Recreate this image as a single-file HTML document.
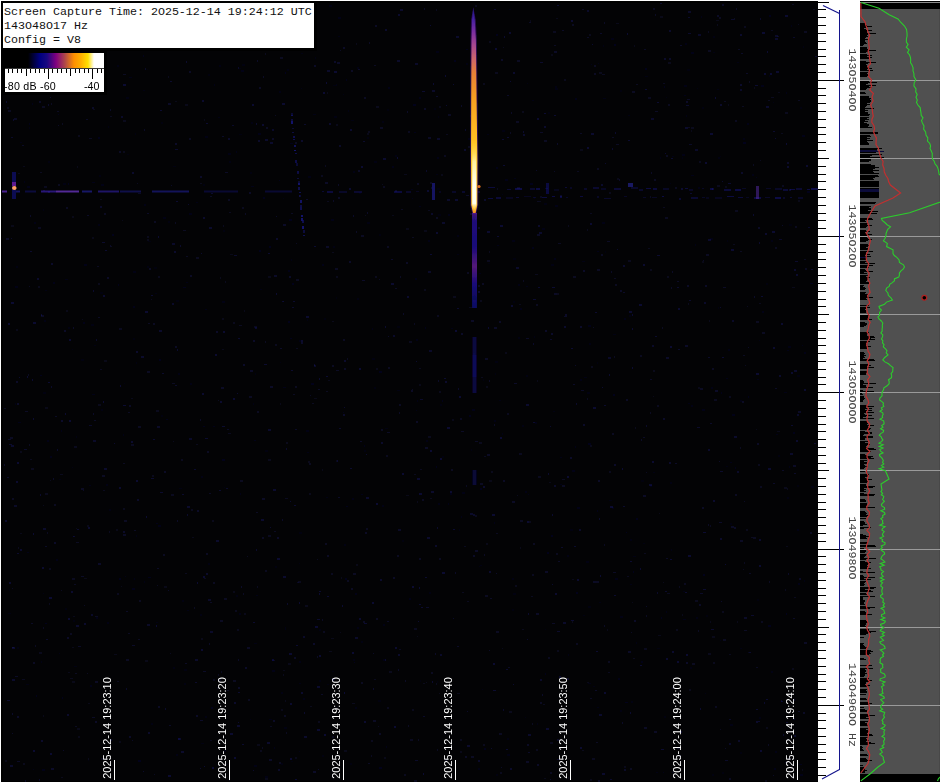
<!DOCTYPE html>
<html><head><meta charset="utf-8"><style>
html,body{margin:0;padding:0;}
body{width:941px;height:783px;position:relative;overflow:hidden;background:#fff;}
.a{position:absolute;left:0;top:0;}
.wf{position:absolute;left:1px;top:1px;width:817px;height:781px;background:#000;}
.wfi{position:absolute;left:3px;top:3px;width:815px;height:778px;background:#030305;}
.box{position:absolute;left:3px;top:3px;width:311px;height:45px;background:#fff;}
.mono{font-family:"Liberation Mono",monospace;font-size:11.67px;color:#111;position:absolute;left:4px;white-space:pre;line-height:14px;}
.cbg{position:absolute;left:5px;top:53px;width:99px;height:15px;
 background:linear-gradient(to right,#000 0px,#000 23px,#000080 35px,#180880 42px,#800080 51px,#b04848 60px,#ff9000 69px,#ffb000 76px,#ffe000 83px,#ffffff 89px,#fff 99px);}
.cbw{position:absolute;left:5px;top:68px;width:99px;height:24px;background:#fff;}
.cbl{position:absolute;top:79.7px;font-family:"Liberation Sans",sans-serif;font-size:10.67px;color:#000;white-space:pre;line-height:12px;}
.rl{position:absolute;left:852px;width:0;height:0;}
.rl span{position:absolute;left:0;top:0;transform:translate(-50%,-50%) rotate(90deg);font-family:"Liberation Mono",monospace;font-size:11.67px;line-height:12px;color:#444;white-space:pre;}
.tl{position:absolute;top:728.3px;width:0;height:0;}
.tl span{position:absolute;left:0;top:0;transform:translate(-50%,-50%) rotate(-90deg);font-family:"Liberation Sans",sans-serif;font-size:10.95px;line-height:12px;color:#fff;white-space:pre;}
.tk{position:absolute;top:760px;width:1px;height:20px;background:#fff;}
</style></head><body>
<div class="wf"></div>
<div class="wfi"></div>
<svg class="a" width="941" height="783">
 <defs>
  <linearGradient id="st" x1="0" y1="8" x2="0" y2="216" gradientUnits="userSpaceOnUse">
   <stop offset="0" stop-color="#1a1a80"/>
   <stop offset="0.05" stop-color="#4020a0"/>
   <stop offset="0.12" stop-color="#8030a0"/>
   <stop offset="0.18" stop-color="#a84890"/>
   <stop offset="0.25" stop-color="#d06868"/>
   <stop offset="0.31" stop-color="#e88038"/>
   <stop offset="0.44" stop-color="#f8a020"/>
   <stop offset="0.59" stop-color="#ffb820"/>
   <stop offset="0.68" stop-color="#ffc828"/>
   <stop offset="0.96" stop-color="#ffc030"/>
   <stop offset="0.985" stop-color="#f09020"/>
   <stop offset="1" stop-color="#6020a0"/>
  </linearGradient>
  <linearGradient id="core" x1="0" y1="140" x2="0" y2="212" gradientUnits="userSpaceOnUse">
   <stop offset="0" stop-color="#ffd030" stop-opacity="0"/>
   <stop offset="0.3" stop-color="#fff0a0"/>
   <stop offset="0.6" stop-color="#fffff0"/>
   <stop offset="0.88" stop-color="#fffff0"/>
   <stop offset="1" stop-color="#ffd040" stop-opacity="0"/>
  </linearGradient>
  <linearGradient id="st2" x1="0" y1="213" x2="0" y2="308" gradientUnits="userSpaceOnUse">
   <stop offset="0" stop-color="#6020a0"/>
   <stop offset="0.08" stop-color="#2a14a0"/>
   <stop offset="0.35" stop-color="#2010a0"/>
   <stop offset="0.56" stop-color="#7020a0"/>
   <stop offset="0.75" stop-color="#2010a0"/>
   <stop offset="1" stop-color="#0c0c60"/>
  </linearGradient>
  <filter id="nb" x="0" y="0" width="100%" height="100%"><feGaussianBlur stdDeviation="0.6"/></filter>
  <filter id="bl" x="-50%" y="-5%" width="200%" height="110%"><feGaussianBlur stdDeviation="0.45"/></filter>
 </defs>
 <g fill="#1a1a70" filter="url(#nb)"><rect x="542" y="228" width="3" height="2" opacity="0.15"/><rect x="495" y="361" width="3" height="2" opacity="0.11"/><rect x="239" y="339" width="1" height="1" opacity="0.10"/><rect x="446" y="134" width="2" height="1" opacity="0.22"/><rect x="225" y="281" width="1" height="2" opacity="0.22"/><rect x="537" y="118" width="2" height="2" opacity="0.38"/><rect x="761" y="197" width="2" height="1" opacity="0.14"/><rect x="73" y="620" width="2" height="2" opacity="0.11"/><rect x="50" y="456" width="2" height="2" opacity="0.17"/><rect x="574" y="546" width="2" height="1" opacity="0.37"/><rect x="572" y="24" width="2" height="2" opacity="0.26"/><rect x="295" y="429" width="2" height="1" opacity="0.31"/><rect x="751" y="615" width="3" height="1" opacity="0.36"/><rect x="746" y="529" width="2" height="2" opacity="0.21"/><rect x="577" y="171" width="2" height="1" opacity="0.25"/><rect x="51" y="386" width="1" height="2" opacity="0.34"/><rect x="626" y="532" width="1" height="1" opacity="0.20"/><rect x="485" y="595" width="3" height="2" opacity="0.27"/><rect x="317" y="619" width="3" height="1" opacity="0.39"/><rect x="502" y="433" width="1" height="2" opacity="0.15"/><rect x="554" y="45" width="2" height="1" opacity="0.28"/><rect x="292" y="283" width="2" height="2" opacity="0.20"/><rect x="15" y="286" width="3" height="2" opacity="0.16"/><rect x="144" y="129" width="1" height="2" opacity="0.32"/><rect x="157" y="426" width="3" height="2" opacity="0.33"/><rect x="201" y="638" width="2" height="2" opacity="0.18"/><rect x="364" y="450" width="2" height="2" opacity="0.11"/><rect x="650" y="485" width="2" height="2" opacity="0.16"/><rect x="708" y="653" width="3" height="2" opacity="0.22"/><rect x="770" y="73" width="2" height="2" opacity="0.42"/><rect x="748" y="652" width="1" height="1" opacity="0.18"/><rect x="791" y="425" width="2" height="1" opacity="0.38"/><rect x="423" y="773" width="1" height="2" opacity="0.42"/><rect x="14" y="118" width="3" height="2" opacity="0.30"/><rect x="93" y="440" width="3" height="2" opacity="0.34"/><rect x="484" y="456" width="2" height="1" opacity="0.25"/><rect x="734" y="527" width="2" height="2" opacity="0.31"/><rect x="663" y="772" width="1" height="1" opacity="0.17"/><rect x="536" y="170" width="1" height="1" opacity="0.34"/><rect x="274" y="747" width="1" height="2" opacity="0.16"/><rect x="156" y="622" width="2" height="1" opacity="0.12"/><rect x="31" y="623" width="2" height="1" opacity="0.30"/><rect x="604" y="692" width="2" height="2" opacity="0.39"/><rect x="605" y="251" width="1" height="2" opacity="0.10"/><rect x="559" y="676" width="2" height="2" opacity="0.38"/><rect x="536" y="304" width="2" height="2" opacity="0.26"/><rect x="789" y="189" width="2" height="2" opacity="0.39"/><rect x="551" y="54" width="2" height="2" opacity="0.18"/><rect x="238" y="659" width="1" height="2" opacity="0.31"/><rect x="513" y="301" width="2" height="2" opacity="0.10"/><rect x="336" y="460" width="1" height="2" opacity="0.18"/><rect x="98" y="283" width="2" height="2" opacity="0.21"/><rect x="123" y="463" width="2" height="1" opacity="0.26"/><rect x="409" y="598" width="2" height="2" opacity="0.16"/><rect x="591" y="64" width="1" height="1" opacity="0.16"/><rect x="383" y="659" width="3" height="2" opacity="0.15"/><rect x="299" y="683" width="2" height="1" opacity="0.15"/><rect x="26" y="684" width="3" height="1" opacity="0.13"/><rect x="41" y="661" width="1" height="2" opacity="0.14"/><rect x="236" y="151" width="1" height="2" opacity="0.16"/><rect x="523" y="134" width="2" height="2" opacity="0.35"/><rect x="336" y="297" width="1" height="2" opacity="0.10"/><rect x="253" y="770" width="1" height="1" opacity="0.36"/><rect x="762" y="332" width="3" height="2" opacity="0.27"/><rect x="766" y="106" width="3" height="2" opacity="0.38"/><rect x="754" y="87" width="1" height="2" opacity="0.19"/><rect x="241" y="586" width="1" height="2" opacity="0.33"/><rect x="525" y="491" width="2" height="2" opacity="0.14"/><rect x="799" y="578" width="2" height="2" opacity="0.29"/><rect x="781" y="701" width="2" height="1" opacity="0.37"/><rect x="536" y="749" width="2" height="2" opacity="0.23"/><rect x="461" y="105" width="1" height="2" opacity="0.30"/><rect x="230" y="254" width="3" height="1" opacity="0.19"/><rect x="545" y="673" width="1" height="2" opacity="0.16"/><rect x="414" y="474" width="2" height="1" opacity="0.22"/><rect x="496" y="573" width="1" height="1" opacity="0.32"/><rect x="512" y="501" width="3" height="2" opacity="0.30"/><rect x="56" y="559" width="2" height="2" opacity="0.16"/><rect x="379" y="371" width="3" height="2" opacity="0.20"/><rect x="326" y="246" width="3" height="2" opacity="0.32"/><rect x="126" y="611" width="2" height="1" opacity="0.30"/><rect x="339" y="145" width="2" height="2" opacity="0.32"/><rect x="294" y="505" width="2" height="1" opacity="0.40"/><rect x="116" y="529" width="2" height="2" opacity="0.18"/><rect x="373" y="653" width="1" height="1" opacity="0.31"/><rect x="24" y="181" width="1" height="2" opacity="0.15"/><rect x="55" y="416" width="2" height="1" opacity="0.29"/><rect x="672" y="271" width="1" height="2" opacity="0.31"/><rect x="595" y="690" width="2" height="1" opacity="0.32"/><rect x="795" y="226" width="2" height="2" opacity="0.24"/><rect x="175" y="346" width="2" height="2" opacity="0.29"/><rect x="417" y="400" width="1" height="2" opacity="0.14"/><rect x="496" y="533" width="2" height="1" opacity="0.25"/><rect x="414" y="628" width="3" height="2" opacity="0.25"/><rect x="326" y="376" width="2" height="1" opacity="0.42"/><rect x="41" y="314" width="1" height="2" opacity="0.41"/><rect x="364" y="445" width="1" height="2" opacity="0.17"/><rect x="123" y="508" width="2" height="2" opacity="0.22"/><rect x="743" y="569" width="1" height="1" opacity="0.25"/><rect x="110" y="109" width="1" height="2" opacity="0.32"/><rect x="177" y="349" width="1" height="2" opacity="0.40"/><rect x="275" y="115" width="1" height="1" opacity="0.28"/><rect x="795" y="261" width="3" height="1" opacity="0.37"/><rect x="743" y="142" width="3" height="2" opacity="0.20"/><rect x="342" y="605" width="1" height="2" opacity="0.40"/><rect x="773" y="483" width="2" height="1" opacity="0.33"/><rect x="737" y="621" width="1" height="2" opacity="0.18"/><rect x="688" y="403" width="2" height="1" opacity="0.15"/><rect x="423" y="683" width="2" height="1" opacity="0.21"/><rect x="344" y="544" width="2" height="2" opacity="0.12"/><rect x="417" y="183" width="2" height="2" opacity="0.26"/><rect x="526" y="286" width="2" height="1" opacity="0.16"/><rect x="794" y="473" width="2" height="1" opacity="0.32"/><rect x="489" y="480" width="3" height="2" opacity="0.18"/><rect x="798" y="711" width="2" height="1" opacity="0.31"/><rect x="289" y="276" width="2" height="2" opacity="0.32"/><rect x="688" y="303" width="1" height="2" opacity="0.22"/><rect x="465" y="756" width="2" height="2" opacity="0.29"/><rect x="520" y="547" width="1" height="2" opacity="0.18"/><rect x="619" y="179" width="1" height="2" opacity="0.32"/><rect x="768" y="625" width="3" height="2" opacity="0.20"/><rect x="392" y="166" width="2" height="2" opacity="0.16"/><rect x="646" y="472" width="1" height="1" opacity="0.25"/><rect x="489" y="251" width="1" height="2" opacity="0.23"/><rect x="290" y="758" width="2" height="2" opacity="0.40"/><rect x="708" y="449" width="2" height="2" opacity="0.36"/><rect x="76" y="436" width="1" height="2" opacity="0.13"/><rect x="336" y="124" width="2" height="2" opacity="0.19"/><rect x="242" y="64" width="3" height="2" opacity="0.11"/><rect x="111" y="246" width="1" height="1" opacity="0.27"/><rect x="711" y="629" width="3" height="1" opacity="0.36"/><rect x="608" y="672" width="2" height="1" opacity="0.24"/><rect x="381" y="442" width="2" height="2" opacity="0.35"/><rect x="272" y="660" width="3" height="1" opacity="0.26"/><rect x="310" y="706" width="2" height="1" opacity="0.21"/><rect x="529" y="521" width="2" height="2" opacity="0.21"/><rect x="534" y="336" width="1" height="2" opacity="0.12"/><rect x="381" y="429" width="2" height="2" opacity="0.27"/><rect x="475" y="5" width="2" height="2" opacity="0.22"/><rect x="132" y="645" width="3" height="1" opacity="0.32"/><rect x="711" y="387" width="2" height="2" opacity="0.14"/><rect x="137" y="183" width="1" height="1" opacity="0.25"/><rect x="107" y="277" width="2" height="2" opacity="0.31"/><rect x="588" y="606" width="3" height="2" opacity="0.11"/><rect x="634" y="620" width="2" height="2" opacity="0.32"/><rect x="128" y="412" width="2" height="1" opacity="0.28"/><rect x="730" y="523" width="2" height="2" opacity="0.11"/><rect x="260" y="289" width="2" height="1" opacity="0.12"/><rect x="560" y="484" width="2" height="1" opacity="0.16"/><rect x="280" y="348" width="2" height="1" opacity="0.33"/><rect x="645" y="68" width="2" height="2" opacity="0.20"/><rect x="627" y="576" width="2" height="1" opacity="0.24"/><rect x="291" y="370" width="2" height="1" opacity="0.39"/><rect x="491" y="748" width="1" height="1" opacity="0.37"/><rect x="270" y="726" width="2" height="1" opacity="0.25"/><rect x="737" y="62" width="2" height="1" opacity="0.13"/><rect x="340" y="632" width="1" height="1" opacity="0.19"/><rect x="744" y="630" width="3" height="1" opacity="0.29"/><rect x="669" y="58" width="2" height="2" opacity="0.33"/><rect x="279" y="180" width="1" height="1" opacity="0.20"/><rect x="223" y="230" width="2" height="2" opacity="0.11"/><rect x="551" y="264" width="3" height="2" opacity="0.13"/><rect x="509" y="9" width="2" height="1" opacity="0.14"/><rect x="27" y="376" width="1" height="2" opacity="0.38"/><rect x="296" y="348" width="2" height="1" opacity="0.23"/><rect x="329" y="651" width="3" height="1" opacity="0.21"/><rect x="613" y="394" width="2" height="2" opacity="0.20"/><rect x="781" y="700" width="1" height="2" opacity="0.27"/><rect x="457" y="693" width="3" height="1" opacity="0.22"/><rect x="773" y="131" width="2" height="1" opacity="0.39"/><rect x="620" y="90" width="2" height="2" opacity="0.10"/><rect x="185" y="573" width="2" height="1" opacity="0.23"/><rect x="378" y="726" width="1" height="1" opacity="0.24"/><rect x="205" y="136" width="3" height="2" opacity="0.14"/><rect x="365" y="215" width="1" height="1" opacity="0.21"/><rect x="336" y="370" width="3" height="1" opacity="0.29"/><rect x="766" y="727" width="2" height="2" opacity="0.18"/><rect x="376" y="503" width="2" height="2" opacity="0.42"/><rect x="77" y="166" width="1" height="2" opacity="0.18"/><rect x="200" y="614" width="2" height="2" opacity="0.13"/><rect x="788" y="758" width="3" height="1" opacity="0.34"/><rect x="626" y="399" width="2" height="2" opacity="0.29"/><rect x="572" y="579" width="2" height="1" opacity="0.18"/><rect x="775" y="138" width="1" height="1" opacity="0.40"/><rect x="686" y="662" width="2" height="2" opacity="0.32"/><rect x="720" y="729" width="1" height="1" opacity="0.23"/><rect x="419" y="587" width="1" height="2" opacity="0.42"/><rect x="366" y="528" width="2" height="2" opacity="0.24"/><rect x="51" y="768" width="3" height="2" opacity="0.33"/><rect x="332" y="736" width="2" height="2" opacity="0.24"/><rect x="670" y="559" width="2" height="1" opacity="0.42"/><rect x="749" y="652" width="2" height="1" opacity="0.41"/><rect x="669" y="462" width="2" height="2" opacity="0.36"/><rect x="547" y="552" width="2" height="2" opacity="0.20"/><rect x="145" y="68" width="1" height="2" opacity="0.31"/><rect x="47" y="532" width="1" height="2" opacity="0.25"/><rect x="397" y="60" width="3" height="2" opacity="0.35"/><rect x="491" y="471" width="2" height="2" opacity="0.22"/><rect x="54" y="504" width="2" height="2" opacity="0.26"/><rect x="397" y="157" width="1" height="2" opacity="0.42"/><rect x="378" y="700" width="3" height="2" opacity="0.10"/><rect x="268" y="276" width="3" height="2" opacity="0.19"/><rect x="564" y="79" width="2" height="2" opacity="0.23"/><rect x="104" y="468" width="3" height="2" opacity="0.36"/><rect x="279" y="762" width="2" height="2" opacity="0.27"/><rect x="248" y="699" width="2" height="2" opacity="0.26"/><rect x="428" y="210" width="2" height="1" opacity="0.23"/><rect x="729" y="743" width="2" height="2" opacity="0.34"/><rect x="48" y="104" width="1" height="2" opacity="0.35"/><rect x="131" y="444" width="3" height="2" opacity="0.25"/><rect x="314" y="246" width="2" height="1" opacity="0.41"/><rect x="315" y="57" width="1" height="2" opacity="0.13"/><rect x="141" y="356" width="3" height="2" opacity="0.37"/><rect x="796" y="440" width="2" height="2" opacity="0.39"/><rect x="209" y="643" width="1" height="2" opacity="0.29"/><rect x="773" y="102" width="1" height="1" opacity="0.12"/><rect x="723" y="639" width="3" height="2" opacity="0.26"/><rect x="367" y="212" width="1" height="2" opacity="0.32"/><rect x="98" y="563" width="3" height="2" opacity="0.33"/><rect x="686" y="101" width="2" height="2" opacity="0.32"/><rect x="241" y="70" width="3" height="2" opacity="0.17"/><rect x="749" y="81" width="1" height="2" opacity="0.26"/><rect x="387" y="707" width="2" height="2" opacity="0.22"/><rect x="812" y="214" width="1" height="1" opacity="0.11"/><rect x="691" y="127" width="3" height="2" opacity="0.22"/><rect x="775" y="247" width="2" height="2" opacity="0.24"/><rect x="379" y="279" width="1" height="1" opacity="0.32"/><rect x="192" y="537" width="2" height="1" opacity="0.19"/><rect x="412" y="389" width="1" height="1" opacity="0.27"/><rect x="45" y="290" width="2" height="1" opacity="0.15"/><rect x="557" y="5" width="2" height="1" opacity="0.38"/><rect x="41" y="740" width="2" height="2" opacity="0.37"/><rect x="186" y="282" width="2" height="1" opacity="0.14"/><rect x="84" y="578" width="3" height="1" opacity="0.18"/><rect x="322" y="619" width="1" height="2" opacity="0.28"/><rect x="439" y="558" width="2" height="2" opacity="0.26"/><rect x="798" y="100" width="2" height="1" opacity="0.28"/><rect x="76" y="542" width="3" height="1" opacity="0.27"/><rect x="45" y="493" width="3" height="2" opacity="0.22"/><rect x="802" y="135" width="3" height="2" opacity="0.17"/><rect x="6" y="101" width="1" height="2" opacity="0.36"/><rect x="495" y="373" width="1" height="2" opacity="0.10"/><rect x="211" y="707" width="2" height="2" opacity="0.20"/><rect x="120" y="385" width="1" height="2" opacity="0.38"/><rect x="557" y="631" width="3" height="1" opacity="0.37"/><rect x="676" y="629" width="2" height="2" opacity="0.21"/><rect x="49" y="597" width="3" height="2" opacity="0.42"/><rect x="238" y="338" width="2" height="1" opacity="0.38"/><rect x="753" y="214" width="1" height="2" opacity="0.38"/><rect x="466" y="485" width="1" height="2" opacity="0.25"/><rect x="68" y="327" width="2" height="2" opacity="0.13"/><rect x="310" y="395" width="1" height="1" opacity="0.28"/><rect x="334" y="116" width="3" height="2" opacity="0.12"/><rect x="348" y="110" width="1" height="2" opacity="0.12"/><rect x="365" y="532" width="2" height="2" opacity="0.29"/><rect x="528" y="494" width="1" height="1" opacity="0.16"/><rect x="353" y="659" width="2" height="2" opacity="0.12"/><rect x="132" y="172" width="2" height="2" opacity="0.37"/><rect x="419" y="368" width="2" height="1" opacity="0.23"/><rect x="78" y="646" width="3" height="1" opacity="0.31"/><rect x="288" y="270" width="2" height="2" opacity="0.16"/><rect x="797" y="414" width="2" height="2" opacity="0.34"/><rect x="213" y="679" width="2" height="2" opacity="0.21"/><rect x="778" y="455" width="2" height="2" opacity="0.11"/><rect x="599" y="602" width="2" height="1" opacity="0.12"/><rect x="158" y="525" width="3" height="2" opacity="0.16"/><rect x="722" y="4" width="2" height="2" opacity="0.29"/><rect x="200" y="183" width="2" height="1" opacity="0.22"/><rect x="466" y="195" width="3" height="1" opacity="0.33"/><rect x="301" y="340" width="2" height="2" opacity="0.38"/><rect x="669" y="30" width="2" height="2" opacity="0.35"/><rect x="487" y="231" width="3" height="2" opacity="0.38"/><rect x="772" y="231" width="3" height="2" opacity="0.40"/><rect x="386" y="746" width="1" height="2" opacity="0.17"/><rect x="229" y="161" width="2" height="2" opacity="0.13"/><rect x="428" y="137" width="3" height="2" opacity="0.30"/><rect x="243" y="364" width="2" height="2" opacity="0.33"/><rect x="478" y="760" width="2" height="2" opacity="0.34"/><rect x="172" y="243" width="3" height="2" opacity="0.34"/><rect x="587" y="147" width="2" height="2" opacity="0.26"/><rect x="811" y="486" width="3" height="2" opacity="0.13"/><rect x="17" y="462" width="2" height="2" opacity="0.42"/><rect x="398" y="654" width="2" height="2" opacity="0.37"/><rect x="221" y="671" width="1" height="2" opacity="0.25"/><rect x="593" y="581" width="3" height="2" opacity="0.30"/><rect x="128" y="633" width="2" height="1" opacity="0.28"/><rect x="183" y="230" width="3" height="1" opacity="0.28"/><rect x="165" y="708" width="1" height="2" opacity="0.35"/><rect x="792" y="668" width="2" height="2" opacity="0.19"/><rect x="641" y="480" width="3" height="2" opacity="0.10"/><rect x="461" y="333" width="2" height="2" opacity="0.32"/><rect x="280" y="403" width="1" height="2" opacity="0.18"/><rect x="283" y="387" width="3" height="1" opacity="0.17"/><rect x="190" y="275" width="2" height="2" opacity="0.30"/><rect x="387" y="621" width="2" height="1" opacity="0.30"/><rect x="556" y="553" width="2" height="2" opacity="0.24"/><rect x="804" y="389" width="2" height="2" opacity="0.38"/><rect x="218" y="679" width="3" height="2" opacity="0.23"/><rect x="472" y="409" width="3" height="2" opacity="0.17"/><rect x="127" y="154" width="2" height="1" opacity="0.10"/><rect x="46" y="639" width="2" height="1" opacity="0.35"/><rect x="755" y="85" width="3" height="1" opacity="0.41"/><rect x="268" y="535" width="3" height="2" opacity="0.25"/><rect x="670" y="482" width="2" height="2" opacity="0.13"/><rect x="31" y="468" width="3" height="2" opacity="0.22"/><rect x="588" y="325" width="3" height="2" opacity="0.17"/><rect x="132" y="588" width="3" height="2" opacity="0.17"/><rect x="50" y="480" width="1" height="1" opacity="0.21"/><rect x="326" y="82" width="1" height="2" opacity="0.40"/><rect x="217" y="687" width="1" height="2" opacity="0.18"/><rect x="395" y="155" width="2" height="2" opacity="0.13"/><rect x="527" y="83" width="1" height="1" opacity="0.13"/><rect x="444" y="155" width="2" height="2" opacity="0.24"/><rect x="123" y="531" width="2" height="2" opacity="0.33"/><rect x="164" y="586" width="3" height="2" opacity="0.18"/><rect x="636" y="84" width="2" height="1" opacity="0.26"/><rect x="153" y="439" width="2" height="1" opacity="0.40"/><rect x="355" y="637" width="3" height="2" opacity="0.35"/><rect x="403" y="313" width="1" height="2" opacity="0.31"/><rect x="751" y="537" width="2" height="1" opacity="0.27"/><rect x="292" y="307" width="2" height="1" opacity="0.35"/><rect x="247" y="647" width="3" height="2" opacity="0.29"/><rect x="719" y="17" width="2" height="2" opacity="0.27"/><rect x="583" y="424" width="2" height="2" opacity="0.33"/><rect x="402" y="473" width="2" height="2" opacity="0.40"/><rect x="393" y="577" width="2" height="2" opacity="0.30"/><rect x="99" y="175" width="2" height="2" opacity="0.11"/><rect x="740" y="752" width="2" height="2" opacity="0.10"/><rect x="599" y="518" width="1" height="2" opacity="0.35"/><rect x="58" y="184" width="2" height="2" opacity="0.26"/><rect x="653" y="472" width="2" height="1" opacity="0.12"/><rect x="156" y="410" width="3" height="2" opacity="0.23"/><rect x="519" y="453" width="3" height="2" opacity="0.25"/><rect x="677" y="287" width="2" height="1" opacity="0.36"/><rect x="630" y="539" width="2" height="2" opacity="0.13"/><rect x="540" y="196" width="2" height="2" opacity="0.24"/><rect x="290" y="703" width="2" height="2" opacity="0.39"/><rect x="8" y="110" width="3" height="2" opacity="0.26"/><rect x="57" y="449" width="1" height="2" opacity="0.36"/><rect x="592" y="758" width="3" height="2" opacity="0.24"/><rect x="532" y="247" width="2" height="2" opacity="0.17"/><rect x="655" y="336" width="2" height="1" opacity="0.36"/><rect x="533" y="422" width="2" height="1" opacity="0.39"/><rect x="793" y="618" width="2" height="1" opacity="0.31"/><rect x="129" y="736" width="2" height="2" opacity="0.32"/><rect x="672" y="651" width="2" height="2" opacity="0.39"/><rect x="617" y="178" width="2" height="2" opacity="0.19"/><rect x="544" y="113" width="2" height="1" opacity="0.41"/><rect x="492" y="514" width="3" height="2" opacity="0.40"/><rect x="590" y="445" width="2" height="2" opacity="0.19"/><rect x="451" y="469" width="2" height="2" opacity="0.26"/><rect x="811" y="269" width="2" height="1" opacity="0.38"/><rect x="424" y="108" width="2" height="2" opacity="0.29"/><rect x="451" y="328" width="2" height="1" opacity="0.14"/><rect x="25" y="411" width="3" height="1" opacity="0.29"/><rect x="538" y="225" width="2" height="2" opacity="0.37"/><rect x="201" y="743" width="3" height="1" opacity="0.13"/><rect x="92" y="237" width="2" height="2" opacity="0.18"/><rect x="249" y="192" width="2" height="2" opacity="0.31"/><rect x="239" y="613" width="2" height="2" opacity="0.16"/><rect x="753" y="164" width="1" height="2" opacity="0.26"/><rect x="222" y="301" width="3" height="2" opacity="0.15"/><rect x="375" y="25" width="2" height="2" opacity="0.30"/><rect x="9" y="589" width="1" height="2" opacity="0.10"/><rect x="592" y="44" width="1" height="1" opacity="0.40"/><rect x="262" y="537" width="2" height="2" opacity="0.28"/><rect x="609" y="192" width="2" height="2" opacity="0.21"/><rect x="200" y="419" width="1" height="2" opacity="0.30"/><rect x="636" y="642" width="1" height="2" opacity="0.12"/><rect x="147" y="239" width="2" height="2" opacity="0.19"/><rect x="429" y="592" width="2" height="2" opacity="0.13"/><rect x="594" y="65" width="2" height="2" opacity="0.26"/><rect x="244" y="613" width="2" height="2" opacity="0.19"/><rect x="562" y="30" width="2" height="1" opacity="0.31"/><rect x="432" y="681" width="1" height="2" opacity="0.40"/><rect x="765" y="780" width="2" height="2" opacity="0.19"/><rect x="123" y="84" width="3" height="2" opacity="0.42"/><rect x="436" y="9" width="1" height="2" opacity="0.25"/><rect x="235" y="610" width="2" height="2" opacity="0.23"/><rect x="33" y="750" width="2" height="2" opacity="0.42"/><rect x="43" y="627" width="1" height="2" opacity="0.24"/><rect x="499" y="321" width="2" height="2" opacity="0.31"/><rect x="172" y="383" width="3" height="1" opacity="0.27"/><rect x="48" y="191" width="2" height="2" opacity="0.41"/><rect x="628" y="260" width="3" height="2" opacity="0.23"/><rect x="616" y="23" width="3" height="1" opacity="0.19"/><rect x="455" y="572" width="1" height="2" opacity="0.30"/><rect x="373" y="688" width="1" height="2" opacity="0.35"/><rect x="731" y="249" width="3" height="2" opacity="0.41"/><rect x="688" y="555" width="3" height="2" opacity="0.40"/><rect x="388" y="87" width="2" height="2" opacity="0.17"/><rect x="374" y="387" width="2" height="2" opacity="0.11"/><rect x="527" y="521" width="2" height="2" opacity="0.40"/><rect x="347" y="358" width="1" height="2" opacity="0.27"/><rect x="786" y="546" width="2" height="1" opacity="0.19"/><rect x="73" y="536" width="1" height="1" opacity="0.16"/><rect x="557" y="143" width="1" height="2" opacity="0.33"/><rect x="462" y="492" width="3" height="2" opacity="0.14"/><rect x="561" y="547" width="2" height="1" opacity="0.35"/><rect x="704" y="302" width="2" height="2" opacity="0.34"/><rect x="11" y="137" width="2" height="1" opacity="0.34"/><rect x="308" y="176" width="3" height="2" opacity="0.15"/><rect x="374" y="65" width="2" height="1" opacity="0.28"/><rect x="72" y="578" width="3" height="2" opacity="0.25"/><rect x="8" y="323" width="2" height="2" opacity="0.41"/><rect x="275" y="344" width="2" height="2" opacity="0.24"/><rect x="405" y="680" width="1" height="2" opacity="0.29"/><rect x="506" y="749" width="2" height="1" opacity="0.42"/><rect x="580" y="747" width="2" height="2" opacity="0.39"/><rect x="238" y="67" width="1" height="2" opacity="0.34"/><rect x="682" y="614" width="1" height="2" opacity="0.19"/><rect x="379" y="234" width="2" height="2" opacity="0.10"/><rect x="369" y="42" width="1" height="2" opacity="0.29"/><rect x="494" y="424" width="1" height="2" opacity="0.28"/><rect x="428" y="240" width="2" height="2" opacity="0.15"/><rect x="395" y="288" width="2" height="1" opacity="0.29"/><rect x="213" y="582" width="2" height="2" opacity="0.26"/><rect x="309" y="493" width="2" height="2" opacity="0.21"/><rect x="219" y="490" width="2" height="1" opacity="0.39"/><rect x="550" y="742" width="3" height="2" opacity="0.22"/><rect x="807" y="191" width="3" height="2" opacity="0.20"/><rect x="10" y="765" width="3" height="2" opacity="0.35"/><rect x="371" y="755" width="1" height="2" opacity="0.25"/><rect x="529" y="22" width="2" height="1" opacity="0.32"/><rect x="73" y="616" width="2" height="1" opacity="0.19"/><rect x="178" y="373" width="2" height="2" opacity="0.15"/><rect x="69" y="339" width="2" height="2" opacity="0.41"/><rect x="43" y="593" width="1" height="1" opacity="0.13"/><rect x="752" y="174" width="2" height="2" opacity="0.15"/><rect x="643" y="437" width="2" height="1" opacity="0.29"/><rect x="668" y="62" width="3" height="2" opacity="0.21"/><rect x="760" y="486" width="2" height="2" opacity="0.25"/><rect x="15" y="403" width="1" height="2" opacity="0.14"/><rect x="416" y="421" width="2" height="2" opacity="0.29"/><rect x="256" y="549" width="1" height="2" opacity="0.37"/><rect x="367" y="137" width="2" height="2" opacity="0.11"/><rect x="526" y="338" width="3" height="1" opacity="0.30"/><rect x="151" y="478" width="3" height="1" opacity="0.39"/><rect x="209" y="493" width="2" height="1" opacity="0.29"/><rect x="567" y="678" width="2" height="2" opacity="0.32"/><rect x="459" y="396" width="2" height="2" opacity="0.40"/><rect x="328" y="380" width="2" height="1" opacity="0.19"/><rect x="382" y="505" width="2" height="2" opacity="0.15"/><rect x="787" y="488" width="1" height="2" opacity="0.22"/><rect x="296" y="243" width="1" height="1" opacity="0.25"/><rect x="7" y="477" width="2" height="1" opacity="0.33"/><rect x="383" y="158" width="3" height="2" opacity="0.39"/><rect x="279" y="91" width="2" height="2" opacity="0.14"/><rect x="658" y="635" width="3" height="1" opacity="0.19"/><rect x="28" y="374" width="1" height="2" opacity="0.27"/><rect x="100" y="292" width="3" height="2" opacity="0.10"/><rect x="389" y="671" width="3" height="2" opacity="0.22"/><rect x="431" y="187" width="1" height="2" opacity="0.28"/><rect x="183" y="287" width="3" height="1" opacity="0.20"/><rect x="147" y="624" width="3" height="2" opacity="0.33"/><rect x="284" y="727" width="3" height="2" opacity="0.13"/><rect x="503" y="480" width="2" height="2" opacity="0.30"/><rect x="216" y="540" width="3" height="2" opacity="0.36"/><rect x="545" y="629" width="1" height="1" opacity="0.11"/><rect x="309" y="463" width="2" height="2" opacity="0.26"/><rect x="725" y="564" width="1" height="1" opacity="0.41"/><rect x="240" y="480" width="3" height="2" opacity="0.26"/><rect x="251" y="122" width="2" height="2" opacity="0.13"/><rect x="512" y="578" width="2" height="2" opacity="0.13"/><rect x="144" y="204" width="2" height="2" opacity="0.15"/><rect x="73" y="536" width="2" height="1" opacity="0.38"/><rect x="30" y="215" width="1" height="2" opacity="0.31"/><rect x="74" y="584" width="2" height="1" opacity="0.26"/><rect x="767" y="51" width="1" height="2" opacity="0.40"/><rect x="697" y="427" width="3" height="1" opacity="0.35"/><rect x="461" y="516" width="1" height="2" opacity="0.16"/><rect x="479" y="566" width="1" height="1" opacity="0.12"/><rect x="151" y="723" width="2" height="2" opacity="0.12"/><rect x="527" y="744" width="2" height="2" opacity="0.30"/><rect x="299" y="661" width="2" height="2" opacity="0.14"/><rect x="358" y="69" width="2" height="1" opacity="0.32"/><rect x="724" y="101" width="2" height="1" opacity="0.27"/><rect x="49" y="603" width="1" height="2" opacity="0.23"/><rect x="65" y="413" width="1" height="2" opacity="0.39"/><rect x="429" y="350" width="3" height="2" opacity="0.34"/><rect x="411" y="189" width="2" height="1" opacity="0.17"/><rect x="159" y="330" width="3" height="2" opacity="0.36"/><rect x="386" y="455" width="2" height="2" opacity="0.24"/><rect x="208" y="563" width="2" height="2" opacity="0.13"/><rect x="282" y="301" width="2" height="1" opacity="0.37"/><rect x="555" y="593" width="2" height="2" opacity="0.39"/><rect x="9" y="444" width="3" height="1" opacity="0.37"/><rect x="701" y="16" width="1" height="2" opacity="0.16"/><rect x="268" y="253" width="2" height="1" opacity="0.38"/><rect x="174" y="251" width="2" height="2" opacity="0.37"/><rect x="94" y="345" width="2" height="1" opacity="0.13"/><rect x="105" y="250" width="2" height="1" opacity="0.41"/><rect x="787" y="497" width="2" height="2" opacity="0.12"/><rect x="445" y="381" width="2" height="2" opacity="0.36"/><rect x="200" y="768" width="1" height="1" opacity="0.39"/><rect x="537" y="764" width="2" height="2" opacity="0.31"/><rect x="810" y="532" width="2" height="2" opacity="0.27"/><rect x="399" y="412" width="1" height="2" opacity="0.30"/><rect x="205" y="716" width="2" height="2" opacity="0.12"/><rect x="329" y="5" width="3" height="2" opacity="0.14"/><rect x="794" y="597" width="2" height="1" opacity="0.23"/><rect x="784" y="487" width="3" height="2" opacity="0.21"/><rect x="652" y="345" width="2" height="2" opacity="0.34"/><rect x="67" y="714" width="2" height="2" opacity="0.36"/><rect x="720" y="104" width="2" height="2" opacity="0.35"/><rect x="588" y="443" width="3" height="2" opacity="0.20"/><rect x="666" y="611" width="1" height="2" opacity="0.14"/><rect x="256" y="123" width="1" height="2" opacity="0.35"/><rect x="582" y="261" width="3" height="1" opacity="0.14"/><rect x="357" y="298" width="2" height="2" opacity="0.13"/><rect x="407" y="111" width="1" height="2" opacity="0.31"/><rect x="570" y="457" width="2" height="2" opacity="0.33"/><rect x="602" y="74" width="3" height="1" opacity="0.26"/><rect x="88" y="703" width="2" height="1" opacity="0.18"/><rect x="69" y="420" width="2" height="2" opacity="0.40"/><rect x="518" y="337" width="2" height="2" opacity="0.12"/><rect x="562" y="479" width="3" height="1" opacity="0.26"/><rect x="336" y="707" width="1" height="2" opacity="0.17"/><rect x="648" y="248" width="2" height="1" opacity="0.24"/><rect x="243" y="593" width="1" height="2" opacity="0.28"/><rect x="583" y="270" width="2" height="2" opacity="0.33"/><rect x="430" y="182" width="2" height="2" opacity="0.22"/><rect x="610" y="506" width="3" height="2" opacity="0.41"/><rect x="740" y="648" width="2" height="1" opacity="0.13"/><rect x="740" y="540" width="3" height="2" opacity="0.29"/><rect x="713" y="662" width="2" height="2" opacity="0.22"/><rect x="794" y="735" width="2" height="2" opacity="0.37"/><rect x="725" y="748" width="1" height="1" opacity="0.29"/><rect x="766" y="283" width="2" height="2" opacity="0.10"/><rect x="170" y="81" width="2" height="1" opacity="0.39"/><rect x="383" y="624" width="2" height="2" opacity="0.15"/><rect x="712" y="188" width="2" height="2" opacity="0.41"/><rect x="18" y="547" width="1" height="2" opacity="0.22"/><rect x="229" y="779" width="1" height="2" opacity="0.27"/><rect x="306" y="199" width="2" height="1" opacity="0.37"/><rect x="270" y="386" width="3" height="2" opacity="0.31"/><rect x="605" y="163" width="1" height="1" opacity="0.36"/><rect x="657" y="648" width="3" height="1" opacity="0.11"/><rect x="598" y="63" width="1" height="1" opacity="0.14"/><rect x="774" y="768" width="2" height="2" opacity="0.16"/><rect x="717" y="15" width="2" height="2" opacity="0.31"/><rect x="786" y="722" width="2" height="1" opacity="0.33"/><rect x="764" y="702" width="1" height="2" opacity="0.34"/><rect x="802" y="345" width="1" height="1" opacity="0.17"/><rect x="532" y="574" width="2" height="2" opacity="0.25"/><rect x="344" y="692" width="1" height="2" opacity="0.40"/><rect x="354" y="662" width="1" height="1" opacity="0.20"/><rect x="250" y="172" width="2" height="2" opacity="0.11"/><rect x="563" y="622" width="3" height="2" opacity="0.35"/><rect x="602" y="773" width="3" height="2" opacity="0.36"/><rect x="671" y="549" width="1" height="2" opacity="0.15"/><rect x="27" y="552" width="2" height="1" opacity="0.16"/><rect x="667" y="276" width="2" height="2" opacity="0.22"/><rect x="779" y="375" width="2" height="2" opacity="0.37"/><rect x="771" y="97" width="3" height="1" opacity="0.24"/><rect x="338" y="184" width="1" height="2" opacity="0.30"/><rect x="502" y="648" width="1" height="1" opacity="0.19"/><rect x="554" y="51" width="3" height="2" opacity="0.31"/><rect x="734" y="436" width="3" height="2" opacity="0.36"/><rect x="280" y="362" width="1" height="1" opacity="0.11"/><rect x="133" y="271" width="3" height="2" opacity="0.14"/><rect x="507" y="95" width="2" height="1" opacity="0.32"/><rect x="471" y="320" width="3" height="2" opacity="0.31"/><rect x="81" y="488" width="3" height="2" opacity="0.28"/><rect x="564" y="316" width="3" height="1" opacity="0.32"/><rect x="160" y="110" width="2" height="1" opacity="0.40"/><rect x="317" y="686" width="3" height="2" opacity="0.39"/><rect x="133" y="306" width="2" height="2" opacity="0.17"/><rect x="442" y="456" width="2" height="2" opacity="0.11"/><rect x="460" y="751" width="2" height="2" opacity="0.19"/><rect x="725" y="186" width="2" height="2" opacity="0.19"/><rect x="372" y="358" width="3" height="2" opacity="0.11"/><rect x="629" y="315" width="2" height="2" opacity="0.13"/><rect x="277" y="558" width="3" height="2" opacity="0.40"/><rect x="412" y="198" width="1" height="1" opacity="0.17"/><rect x="440" y="654" width="2" height="2" opacity="0.34"/><rect x="438" y="503" width="2" height="2" opacity="0.14"/><rect x="485" y="358" width="3" height="2" opacity="0.29"/><rect x="218" y="674" width="1" height="2" opacity="0.25"/><rect x="265" y="450" width="3" height="2" opacity="0.11"/><rect x="450" y="491" width="2" height="2" opacity="0.39"/><rect x="186" y="61" width="1" height="2" opacity="0.36"/><rect x="499" y="400" width="2" height="1" opacity="0.12"/><rect x="269" y="246" width="2" height="2" opacity="0.20"/><rect x="467" y="272" width="2" height="2" opacity="0.26"/><rect x="455" y="199" width="3" height="2" opacity="0.41"/><rect x="437" y="315" width="2" height="2" opacity="0.25"/><rect x="317" y="559" width="1" height="1" opacity="0.27"/><rect x="593" y="327" width="1" height="1" opacity="0.28"/><rect x="651" y="118" width="3" height="2" opacity="0.34"/><rect x="437" y="138" width="3" height="2" opacity="0.35"/><rect x="504" y="36" width="1" height="2" opacity="0.39"/><rect x="185" y="104" width="3" height="2" opacity="0.19"/><rect x="68" y="618" width="2" height="2" opacity="0.41"/><rect x="147" y="371" width="3" height="2" opacity="0.28"/><rect x="412" y="237" width="2" height="1" opacity="0.26"/><rect x="70" y="633" width="2" height="2" opacity="0.26"/><rect x="384" y="757" width="2" height="2" opacity="0.18"/><rect x="518" y="284" width="2" height="2" opacity="0.14"/><rect x="748" y="347" width="1" height="1" opacity="0.31"/><rect x="247" y="556" width="1" height="1" opacity="0.27"/><rect x="267" y="742" width="3" height="2" opacity="0.37"/><rect x="27" y="186" width="3" height="2" opacity="0.17"/><rect x="290" y="143" width="3" height="1" opacity="0.20"/><rect x="388" y="367" width="2" height="2" opacity="0.27"/><rect x="471" y="449" width="1" height="2" opacity="0.13"/><rect x="528" y="734" width="3" height="2" opacity="0.36"/><rect x="743" y="138" width="2" height="2" opacity="0.12"/><rect x="815" y="56" width="2" height="1" opacity="0.41"/><rect x="483" y="379" width="1" height="2" opacity="0.11"/><rect x="222" y="459" width="3" height="2" opacity="0.20"/><rect x="312" y="403" width="2" height="1" opacity="0.26"/><rect x="700" y="593" width="3" height="1" opacity="0.33"/><rect x="422" y="91" width="3" height="1" opacity="0.39"/><rect x="194" y="607" width="1" height="2" opacity="0.26"/><rect x="249" y="396" width="3" height="2" opacity="0.28"/><rect x="355" y="593" width="2" height="2" opacity="0.16"/><rect x="196" y="257" width="3" height="2" opacity="0.26"/><rect x="624" y="766" width="2" height="2" opacity="0.19"/><rect x="424" y="8" width="1" height="2" opacity="0.29"/><rect x="480" y="300" width="2" height="2" opacity="0.21"/><rect x="495" y="48" width="2" height="2" opacity="0.41"/><rect x="59" y="479" width="2" height="1" opacity="0.13"/><rect x="703" y="574" width="2" height="2" opacity="0.20"/><rect x="735" y="494" width="2" height="2" opacity="0.28"/><rect x="769" y="15" width="2" height="2" opacity="0.20"/><rect x="210" y="602" width="2" height="1" opacity="0.29"/><rect x="12" y="647" width="2" height="1" opacity="0.33"/><rect x="741" y="172" width="2" height="2" opacity="0.33"/><rect x="208" y="599" width="3" height="2" opacity="0.33"/><rect x="608" y="661" width="2" height="2" opacity="0.26"/><rect x="84" y="605" width="1" height="1" opacity="0.27"/><rect x="350" y="468" width="2" height="1" opacity="0.39"/><rect x="395" y="647" width="2" height="2" opacity="0.38"/><rect x="447" y="427" width="3" height="2" opacity="0.40"/><rect x="460" y="418" width="2" height="2" opacity="0.25"/><rect x="222" y="349" width="2" height="1" opacity="0.18"/><rect x="552" y="623" width="3" height="1" opacity="0.29"/><rect x="245" y="667" width="2" height="2" opacity="0.33"/><rect x="250" y="719" width="1" height="1" opacity="0.12"/><rect x="720" y="538" width="2" height="2" opacity="0.35"/><rect x="419" y="97" width="2" height="2" opacity="0.17"/><rect x="61" y="430" width="1" height="2" opacity="0.17"/><rect x="60" y="474" width="3" height="1" opacity="0.23"/><rect x="790" y="453" width="3" height="2" opacity="0.35"/><rect x="598" y="780" width="2" height="2" opacity="0.31"/><rect x="630" y="561" width="2" height="1" opacity="0.40"/><rect x="90" y="685" width="2" height="2" opacity="0.17"/><rect x="597" y="510" width="1" height="2" opacity="0.17"/><rect x="657" y="255" width="3" height="1" opacity="0.41"/><rect x="804" y="580" width="1" height="2" opacity="0.13"/><rect x="494" y="420" width="2" height="2" opacity="0.14"/><rect x="110" y="739" width="2" height="2" opacity="0.33"/><rect x="103" y="295" width="2" height="2" opacity="0.38"/><rect x="480" y="488" width="2" height="2" opacity="0.20"/><rect x="797" y="375" width="3" height="2" opacity="0.11"/><rect x="510" y="132" width="1" height="2" opacity="0.28"/><rect x="484" y="199" width="2" height="2" opacity="0.35"/><rect x="258" y="133" width="3" height="2" opacity="0.17"/><rect x="126" y="659" width="3" height="2" opacity="0.28"/><rect x="612" y="433" width="2" height="2" opacity="0.27"/><rect x="712" y="636" width="3" height="2" opacity="0.19"/><rect x="720" y="471" width="3" height="1" opacity="0.36"/><rect x="803" y="46" width="1" height="2" opacity="0.13"/><rect x="677" y="281" width="2" height="1" opacity="0.30"/><rect x="109" y="531" width="1" height="2" opacity="0.25"/><rect x="313" y="643" width="2" height="2" opacity="0.33"/><rect x="699" y="161" width="2" height="2" opacity="0.24"/><rect x="663" y="418" width="2" height="2" opacity="0.33"/><rect x="533" y="299" width="3" height="1" opacity="0.41"/><rect x="500" y="772" width="2" height="2" opacity="0.23"/><rect x="722" y="611" width="2" height="2" opacity="0.23"/><rect x="604" y="544" width="1" height="2" opacity="0.25"/><rect x="101" y="409" width="2" height="2" opacity="0.13"/><rect x="601" y="254" width="2" height="2" opacity="0.28"/><rect x="473" y="514" width="2" height="2" opacity="0.35"/><rect x="791" y="25" width="1" height="2" opacity="0.15"/><rect x="363" y="141" width="2" height="1" opacity="0.36"/><rect x="759" y="717" width="2" height="2" opacity="0.12"/><rect x="387" y="432" width="3" height="1" opacity="0.29"/><rect x="53" y="282" width="2" height="2" opacity="0.16"/><rect x="148" y="732" width="2" height="2" opacity="0.35"/><rect x="688" y="17" width="2" height="1" opacity="0.36"/><rect x="319" y="680" width="2" height="2" opacity="0.11"/><rect x="537" y="201" width="2" height="1" opacity="0.26"/><rect x="614" y="44" width="2" height="2" opacity="0.20"/><rect x="632" y="602" width="1" height="1" opacity="0.18"/><rect x="797" y="485" width="2" height="2" opacity="0.10"/><rect x="439" y="106" width="2" height="2" opacity="0.19"/><rect x="379" y="733" width="2" height="2" opacity="0.29"/><rect x="705" y="285" width="2" height="2" opacity="0.31"/><rect x="233" y="398" width="2" height="2" opacity="0.40"/><rect x="604" y="625" width="1" height="2" opacity="0.28"/><rect x="319" y="655" width="2" height="2" opacity="0.41"/><rect x="415" y="278" width="2" height="2" opacity="0.16"/><rect x="439" y="693" width="1" height="1" opacity="0.21"/><rect x="244" y="310" width="1" height="2" opacity="0.19"/><rect x="488" y="263" width="2" height="1" opacity="0.11"/><rect x="554" y="293" width="3" height="2" opacity="0.30"/><rect x="654" y="179" width="2" height="2" opacity="0.28"/><rect x="615" y="132" width="1" height="2" opacity="0.37"/><rect x="8" y="439" width="3" height="1" opacity="0.32"/><rect x="35" y="645" width="1" height="2" opacity="0.27"/><rect x="147" y="236" width="2" height="2" opacity="0.22"/><rect x="176" y="201" width="2" height="1" opacity="0.41"/><rect x="58" y="114" width="1" height="1" opacity="0.20"/><rect x="580" y="149" width="3" height="2" opacity="0.18"/><rect x="62" y="123" width="1" height="2" opacity="0.26"/><rect x="757" y="443" width="2" height="2" opacity="0.30"/><rect x="411" y="390" width="2" height="2" opacity="0.30"/><rect x="326" y="497" width="2" height="1" opacity="0.15"/><rect x="285" y="72" width="1" height="2" opacity="0.20"/><rect x="182" y="494" width="2" height="1" opacity="0.36"/><rect x="220" y="620" width="3" height="2" opacity="0.28"/><rect x="558" y="561" width="2" height="1" opacity="0.31"/><rect x="138" y="193" width="3" height="1" opacity="0.32"/><rect x="762" y="311" width="2" height="2" opacity="0.16"/><rect x="537" y="380" width="1" height="2" opacity="0.18"/><rect x="89" y="485" width="2" height="1" opacity="0.16"/><rect x="119" y="578" width="2" height="2" opacity="0.20"/><rect x="227" y="429" width="2" height="1" opacity="0.34"/><rect x="327" y="201" width="2" height="1" opacity="0.22"/><rect x="332" y="321" width="2" height="1" opacity="0.21"/><rect x="88" y="760" width="1" height="1" opacity="0.10"/><rect x="430" y="450" width="2" height="2" opacity="0.42"/><rect x="446" y="105" width="1" height="1" opacity="0.38"/><rect x="759" y="340" width="1" height="1" opacity="0.12"/><rect x="677" y="661" width="2" height="2" opacity="0.40"/><rect x="664" y="86" width="1" height="2" opacity="0.20"/><rect x="173" y="166" width="3" height="1" opacity="0.11"/><rect x="787" y="166" width="2" height="2" opacity="0.39"/><rect x="458" y="388" width="1" height="2" opacity="0.33"/><rect x="552" y="287" width="3" height="1" opacity="0.42"/><rect x="380" y="579" width="2" height="2" opacity="0.36"/><rect x="632" y="367" width="1" height="2" opacity="0.40"/><rect x="700" y="388" width="3" height="2" opacity="0.28"/><rect x="534" y="197" width="1" height="2" opacity="0.16"/><rect x="430" y="498" width="2" height="1" opacity="0.21"/><rect x="313" y="771" width="3" height="2" opacity="0.32"/><rect x="89" y="138" width="3" height="1" opacity="0.27"/><rect x="146" y="516" width="1" height="2" opacity="0.41"/><rect x="513" y="72" width="2" height="2" opacity="0.37"/><rect x="787" y="162" width="2" height="2" opacity="0.33"/><rect x="50" y="753" width="2" height="2" opacity="0.40"/><rect x="587" y="398" width="1" height="2" opacity="0.24"/><rect x="23" y="166" width="2" height="1" opacity="0.19"/><rect x="78" y="736" width="2" height="2" opacity="0.18"/><rect x="748" y="396" width="1" height="2" opacity="0.20"/><rect x="265" y="778" width="3" height="2" opacity="0.18"/><rect x="119" y="328" width="3" height="2" opacity="0.24"/><rect x="388" y="336" width="1" height="1" opacity="0.35"/><rect x="245" y="213" width="1" height="2" opacity="0.28"/><rect x="59" y="653" width="1" height="1" opacity="0.16"/><rect x="430" y="254" width="2" height="1" opacity="0.42"/><rect x="175" y="143" width="2" height="2" opacity="0.33"/><rect x="177" y="520" width="1" height="2" opacity="0.31"/><rect x="237" y="629" width="2" height="2" opacity="0.22"/><rect x="646" y="425" width="1" height="2" opacity="0.33"/><rect x="265" y="776" width="3" height="2" opacity="0.14"/><rect x="587" y="10" width="2" height="2" opacity="0.34"/><rect x="575" y="365" width="1" height="1" opacity="0.33"/><rect x="702" y="261" width="2" height="2" opacity="0.18"/><rect x="802" y="769" width="1" height="2" opacity="0.18"/><rect x="67" y="637" width="2" height="2" opacity="0.32"/><rect x="136" y="362" width="1" height="2" opacity="0.11"/><rect x="264" y="364" width="3" height="1" opacity="0.39"/><rect x="17" y="403" width="2" height="2" opacity="0.31"/><rect x="618" y="678" width="2" height="2" opacity="0.17"/><rect x="54" y="542" width="2" height="2" opacity="0.32"/><rect x="137" y="499" width="2" height="2" opacity="0.33"/><rect x="689" y="144" width="3" height="1" opacity="0.32"/><rect x="505" y="179" width="3" height="2" opacity="0.17"/><rect x="577" y="507" width="3" height="2" opacity="0.17"/><rect x="496" y="34" width="2" height="2" opacity="0.20"/><rect x="610" y="779" width="2" height="1" opacity="0.36"/><rect x="209" y="227" width="3" height="2" opacity="0.37"/><rect x="448" y="503" width="1" height="2" opacity="0.16"/><rect x="382" y="184" width="1" height="1" opacity="0.22"/><rect x="683" y="619" width="3" height="1" opacity="0.16"/><rect x="718" y="307" width="1" height="2" opacity="0.11"/><rect x="10" y="437" width="3" height="2" opacity="0.28"/><rect x="686" y="654" width="2" height="2" opacity="0.41"/><rect x="376" y="368" width="2" height="2" opacity="0.18"/><rect x="154" y="221" width="2" height="2" opacity="0.27"/><rect x="134" y="578" width="1" height="2" opacity="0.15"/><rect x="96" y="339" width="1" height="2" opacity="0.35"/><rect x="38" y="227" width="3" height="2" opacity="0.25"/><rect x="575" y="446" width="1" height="2" opacity="0.16"/><rect x="660" y="157" width="1" height="2" opacity="0.14"/><rect x="528" y="752" width="2" height="1" opacity="0.33"/><rect x="406" y="228" width="3" height="2" opacity="0.18"/><rect x="200" y="720" width="3" height="1" opacity="0.33"/><rect x="401" y="209" width="2" height="1" opacity="0.26"/><rect x="253" y="403" width="1" height="2" opacity="0.12"/><rect x="93" y="290" width="1" height="2" opacity="0.38"/><rect x="728" y="349" width="2" height="2" opacity="0.14"/><rect x="663" y="582" width="1" height="1" opacity="0.21"/><rect x="144" y="581" width="1" height="2" opacity="0.13"/><rect x="768" y="100" width="2" height="1" opacity="0.27"/><rect x="352" y="703" width="3" height="1" opacity="0.22"/><rect x="261" y="519" width="3" height="2" opacity="0.39"/><rect x="305" y="605" width="3" height="2" opacity="0.21"/><rect x="653" y="396" width="1" height="1" opacity="0.18"/><rect x="259" y="250" width="2" height="2" opacity="0.20"/><rect x="254" y="440" width="2" height="1" opacity="0.20"/><rect x="576" y="592" width="2" height="2" opacity="0.20"/><rect x="15" y="676" width="3" height="1" opacity="0.31"/><rect x="12" y="733" width="1" height="1" opacity="0.32"/><rect x="295" y="142" width="2" height="2" opacity="0.27"/><rect x="441" y="174" width="2" height="2" opacity="0.18"/><rect x="250" y="370" width="3" height="2" opacity="0.31"/><rect x="112" y="234" width="2" height="2" opacity="0.20"/><rect x="340" y="50" width="1" height="1" opacity="0.28"/><rect x="203" y="184" width="2" height="2" opacity="0.11"/><rect x="107" y="622" width="2" height="2" opacity="0.14"/><rect x="604" y="22" width="1" height="2" opacity="0.28"/><rect x="291" y="259" width="1" height="2" opacity="0.15"/><rect x="346" y="79" width="1" height="2" opacity="0.20"/><rect x="288" y="321" width="2" height="2" opacity="0.20"/><rect x="475" y="515" width="2" height="2" opacity="0.23"/><rect x="408" y="725" width="1" height="2" opacity="0.28"/><rect x="747" y="306" width="1" height="1" opacity="0.25"/><rect x="158" y="276" width="2" height="2" opacity="0.22"/><rect x="260" y="750" width="2" height="2" opacity="0.22"/><rect x="295" y="779" width="2" height="1" opacity="0.42"/><rect x="334" y="71" width="3" height="2" opacity="0.40"/><rect x="456" y="36" width="3" height="2" opacity="0.36"/><rect x="373" y="720" width="3" height="2" opacity="0.29"/><rect x="607" y="629" width="1" height="2" opacity="0.19"/><rect x="5" y="520" width="2" height="2" opacity="0.37"/><rect x="332" y="679" width="2" height="2" opacity="0.36"/><rect x="771" y="30" width="2" height="1" opacity="0.24"/><rect x="442" y="572" width="3" height="2" opacity="0.41"/><rect x="275" y="566" width="2" height="2" opacity="0.11"/><rect x="159" y="359" width="2" height="2" opacity="0.20"/><rect x="282" y="519" width="1" height="2" opacity="0.33"/><rect x="415" y="63" width="3" height="2" opacity="0.34"/><rect x="361" y="682" width="2" height="2" opacity="0.26"/><rect x="343" y="412" width="1" height="1" opacity="0.20"/><rect x="778" y="92" width="2" height="1" opacity="0.18"/><rect x="398" y="669" width="1" height="2" opacity="0.31"/><rect x="204" y="766" width="1" height="1" opacity="0.41"/><rect x="530" y="183" width="3" height="2" opacity="0.20"/><rect x="632" y="314" width="1" height="2" opacity="0.38"/><rect x="272" y="138" width="2" height="2" opacity="0.29"/><rect x="364" y="97" width="2" height="2" opacity="0.28"/><rect x="196" y="444" width="2" height="1" opacity="0.21"/><rect x="45" y="407" width="3" height="2" opacity="0.18"/><rect x="419" y="384" width="2" height="2" opacity="0.18"/><rect x="426" y="682" width="1" height="1" opacity="0.21"/><rect x="740" y="34" width="2" height="2" opacity="0.36"/><rect x="448" y="214" width="2" height="2" opacity="0.17"/><rect x="655" y="14" width="1" height="2" opacity="0.28"/><rect x="281" y="709" width="2" height="2" opacity="0.19"/><rect x="708" y="50" width="3" height="2" opacity="0.26"/><rect x="239" y="134" width="3" height="1" opacity="0.11"/><rect x="11" y="225" width="3" height="2" opacity="0.18"/><rect x="580" y="326" width="2" height="2" opacity="0.33"/><rect x="705" y="162" width="2" height="2" opacity="0.41"/><rect x="453" y="618" width="1" height="1" opacity="0.34"/><rect x="410" y="739" width="3" height="2" opacity="0.25"/><rect x="730" y="724" width="3" height="2" opacity="0.14"/><rect x="712" y="774" width="2" height="2" opacity="0.11"/><rect x="648" y="97" width="3" height="2" opacity="0.24"/><rect x="20" y="533" width="2" height="1" opacity="0.19"/><rect x="538" y="287" width="2" height="1" opacity="0.41"/><rect x="437" y="527" width="1" height="2" opacity="0.35"/><rect x="710" y="133" width="3" height="2" opacity="0.41"/><rect x="666" y="658" width="2" height="2" opacity="0.38"/><rect x="671" y="158" width="2" height="1" opacity="0.39"/><rect x="78" y="135" width="2" height="2" opacity="0.21"/><rect x="644" y="648" width="3" height="2" opacity="0.23"/><rect x="568" y="777" width="1" height="2" opacity="0.23"/><rect x="349" y="188" width="2" height="2" opacity="0.40"/><rect x="460" y="739" width="2" height="2" opacity="0.23"/><rect x="499" y="733" width="3" height="2" opacity="0.27"/><rect x="224" y="487" width="1" height="1" opacity="0.12"/><rect x="43" y="528" width="3" height="2" opacity="0.35"/><rect x="228" y="199" width="2" height="2" opacity="0.28"/><rect x="511" y="305" width="2" height="2" opacity="0.38"/><rect x="582" y="9" width="2" height="1" opacity="0.29"/><rect x="435" y="653" width="1" height="2" opacity="0.30"/><rect x="61" y="590" width="1" height="1" opacity="0.26"/><rect x="630" y="768" width="2" height="2" opacity="0.26"/><rect x="509" y="711" width="3" height="2" opacity="0.22"/><rect x="623" y="506" width="2" height="1" opacity="0.36"/><rect x="92" y="394" width="3" height="1" opacity="0.16"/><rect x="12" y="679" width="3" height="2" opacity="0.36"/><rect x="228" y="138" width="2" height="2" opacity="0.35"/><rect x="419" y="493" width="3" height="2" opacity="0.42"/><rect x="423" y="716" width="2" height="1" opacity="0.34"/><rect x="759" y="303" width="2" height="1" opacity="0.22"/><rect x="548" y="657" width="2" height="2" opacity="0.25"/><rect x="317" y="729" width="3" height="2" opacity="0.41"/><rect x="520" y="520" width="3" height="2" opacity="0.27"/><rect x="265" y="53" width="1" height="2" opacity="0.22"/><rect x="695" y="244" width="1" height="2" opacity="0.15"/><rect x="366" y="497" width="3" height="2" opacity="0.36"/><rect x="154" y="774" width="1" height="1" opacity="0.25"/><rect x="168" y="775" width="3" height="2" opacity="0.42"/><rect x="254" y="765" width="3" height="2" opacity="0.15"/><rect x="283" y="670" width="2" height="1" opacity="0.18"/><rect x="355" y="707" width="2" height="2" opacity="0.14"/><rect x="82" y="319" width="1" height="1" opacity="0.18"/><rect x="301" y="53" width="2" height="1" opacity="0.12"/><rect x="304" y="712" width="1" height="2" opacity="0.35"/><rect x="331" y="638" width="3" height="1" opacity="0.18"/><rect x="685" y="127" width="3" height="2" opacity="0.37"/><rect x="702" y="107" width="2" height="2" opacity="0.11"/><rect x="95" y="616" width="3" height="1" opacity="0.26"/><rect x="539" y="201" width="2" height="1" opacity="0.23"/><rect x="613" y="572" width="3" height="1" opacity="0.29"/><rect x="210" y="740" width="2" height="1" opacity="0.22"/><rect x="473" y="555" width="2" height="2" opacity="0.30"/><rect x="462" y="592" width="2" height="1" opacity="0.24"/><rect x="665" y="153" width="1" height="1" opacity="0.40"/><rect x="387" y="246" width="2" height="2" opacity="0.27"/><rect x="415" y="760" width="3" height="1" opacity="0.34"/><rect x="509" y="32" width="2" height="2" opacity="0.39"/><rect x="546" y="728" width="3" height="2" opacity="0.38"/><rect x="675" y="187" width="2" height="2" opacity="0.24"/><rect x="497" y="245" width="2" height="1" opacity="0.17"/><rect x="234" y="702" width="2" height="2" opacity="0.35"/><rect x="612" y="148" width="1" height="2" opacity="0.37"/><rect x="24" y="449" width="3" height="1" opacity="0.35"/><rect x="577" y="579" width="2" height="2" opacity="0.39"/><rect x="71" y="591" width="2" height="2" opacity="0.38"/><rect x="357" y="67" width="2" height="2" opacity="0.14"/><rect x="6" y="238" width="3" height="2" opacity="0.30"/><rect x="517" y="495" width="1" height="1" opacity="0.24"/><rect x="590" y="698" width="2" height="1" opacity="0.28"/><rect x="123" y="74" width="3" height="1" opacity="0.27"/><rect x="324" y="734" width="2" height="2" opacity="0.42"/><rect x="314" y="364" width="1" height="2" opacity="0.37"/><rect x="72" y="647" width="2" height="1" opacity="0.18"/><rect x="37" y="278" width="2" height="2" opacity="0.37"/><rect x="600" y="575" width="1" height="2" opacity="0.41"/><rect x="698" y="34" width="3" height="2" opacity="0.34"/><rect x="516" y="267" width="3" height="2" opacity="0.35"/><rect x="151" y="295" width="2" height="1" opacity="0.38"/><rect x="216" y="331" width="2" height="2" opacity="0.32"/><rect x="408" y="131" width="2" height="2" opacity="0.25"/><rect x="124" y="383" width="1" height="1" opacity="0.10"/><rect x="483" y="744" width="2" height="2" opacity="0.22"/><rect x="126" y="688" width="1" height="2" opacity="0.33"/><rect x="800" y="107" width="2" height="2" opacity="0.11"/><rect x="438" y="214" width="3" height="2" opacity="0.10"/><rect x="18" y="422" width="3" height="1" opacity="0.17"/><rect x="321" y="175" width="2" height="2" opacity="0.24"/><rect x="100" y="199" width="2" height="1" opacity="0.21"/><rect x="483" y="486" width="2" height="2" opacity="0.37"/><rect x="512" y="240" width="3" height="2" opacity="0.14"/><rect x="11" y="238" width="1" height="1" opacity="0.33"/><rect x="507" y="413" width="2" height="2" opacity="0.24"/><rect x="640" y="665" width="2" height="1" opacity="0.40"/><rect x="168" y="76" width="1" height="2" opacity="0.22"/><rect x="452" y="419" width="2" height="2" opacity="0.19"/><rect x="668" y="104" width="2" height="2" opacity="0.25"/><rect x="220" y="401" width="2" height="2" opacity="0.38"/><rect x="400" y="276" width="1" height="2" opacity="0.28"/><rect x="689" y="300" width="2" height="1" opacity="0.37"/><rect x="131" y="441" width="2" height="2" opacity="0.38"/><rect x="731" y="19" width="3" height="1" opacity="0.35"/><rect x="104" y="213" width="2" height="2" opacity="0.27"/><rect x="434" y="108" width="2" height="2" opacity="0.11"/><rect x="741" y="53" width="2" height="1" opacity="0.32"/><rect x="181" y="751" width="3" height="2" opacity="0.36"/><rect x="346" y="506" width="2" height="1" opacity="0.20"/><rect x="428" y="436" width="3" height="2" opacity="0.22"/><rect x="196" y="202" width="2" height="1" opacity="0.14"/><rect x="314" y="65" width="2" height="2" opacity="0.31"/><rect x="412" y="709" width="2" height="2" opacity="0.22"/><rect x="178" y="738" width="2" height="2" opacity="0.30"/><rect x="735" y="210" width="3" height="2" opacity="0.24"/><rect x="58" y="125" width="1" height="1" opacity="0.30"/><rect x="276" y="238" width="2" height="2" opacity="0.35"/><rect x="686" y="105" width="3" height="1" opacity="0.37"/><rect x="203" y="217" width="2" height="2" opacity="0.36"/><rect x="16" y="329" width="2" height="2" opacity="0.19"/><rect x="628" y="140" width="2" height="1" opacity="0.42"/><rect x="686" y="115" width="1" height="2" opacity="0.15"/><rect x="783" y="734" width="1" height="2" opacity="0.37"/><rect x="34" y="222" width="2" height="2" opacity="0.15"/><rect x="656" y="772" width="2" height="1" opacity="0.14"/><rect x="760" y="750" width="2" height="2" opacity="0.41"/><rect x="616" y="144" width="3" height="1" opacity="0.28"/><rect x="158" y="236" width="1" height="2" opacity="0.41"/><rect x="794" y="370" width="3" height="2" opacity="0.36"/><rect x="351" y="70" width="2" height="2" opacity="0.29"/><rect x="779" y="239" width="3" height="1" opacity="0.34"/><rect x="206" y="553" width="2" height="2" opacity="0.28"/><rect x="464" y="149" width="2" height="2" opacity="0.37"/><rect x="266" y="127" width="2" height="2" opacity="0.28"/><rect x="176" y="754" width="2" height="2" opacity="0.15"/><rect x="175" y="101" width="2" height="1" opacity="0.18"/><rect x="672" y="687" width="2" height="2" opacity="0.19"/><rect x="68" y="183" width="1" height="2" opacity="0.20"/><rect x="623" y="265" width="2" height="2" opacity="0.37"/><rect x="368" y="131" width="2" height="2" opacity="0.22"/><rect x="123" y="434" width="1" height="2" opacity="0.15"/><rect x="814" y="443" width="2" height="1" opacity="0.37"/><rect x="319" y="591" width="2" height="1" opacity="0.41"/><rect x="497" y="236" width="2" height="1" opacity="0.41"/><rect x="773" y="775" width="1" height="1" opacity="0.29"/><rect x="361" y="166" width="2" height="2" opacity="0.40"/><rect x="733" y="244" width="2" height="1" opacity="0.21"/><rect x="283" y="301" width="1" height="1" opacity="0.19"/><rect x="579" y="529" width="2" height="2" opacity="0.33"/><rect x="351" y="120" width="3" height="1" opacity="0.12"/><rect x="664" y="58" width="2" height="2" opacity="0.35"/><rect x="284" y="715" width="2" height="2" opacity="0.27"/><rect x="798" y="411" width="3" height="2" opacity="0.31"/><rect x="397" y="555" width="2" height="2" opacity="0.28"/><rect x="575" y="98" width="2" height="2" opacity="0.17"/><rect x="413" y="104" width="3" height="2" opacity="0.20"/><rect x="457" y="646" width="2" height="1" opacity="0.31"/><rect x="440" y="404" width="2" height="2" opacity="0.11"/><rect x="725" y="760" width="3" height="1" opacity="0.34"/><rect x="721" y="601" width="1" height="1" opacity="0.36"/><rect x="678" y="349" width="2" height="1" opacity="0.37"/><rect x="643" y="264" width="2" height="2" opacity="0.38"/><rect x="502" y="139" width="2" height="1" opacity="0.38"/><rect x="612" y="137" width="2" height="1" opacity="0.26"/><rect x="48" y="161" width="2" height="2" opacity="0.11"/><rect x="603" y="98" width="3" height="1" opacity="0.14"/><rect x="557" y="759" width="3" height="1" opacity="0.35"/><rect x="760" y="18" width="1" height="2" opacity="0.34"/><rect x="628" y="651" width="3" height="2" opacity="0.32"/><rect x="644" y="727" width="3" height="2" opacity="0.29"/><rect x="223" y="331" width="2" height="2" opacity="0.39"/><rect x="41" y="315" width="3" height="2" opacity="0.29"/><rect x="87" y="525" width="2" height="2" opacity="0.19"/><rect x="257" y="60" width="1" height="2" opacity="0.32"/><rect x="758" y="464" width="2" height="2" opacity="0.23"/><rect x="189" y="213" width="3" height="2" opacity="0.16"/><rect x="600" y="33" width="2" height="1" opacity="0.35"/><rect x="679" y="755" width="2" height="2" opacity="0.22"/><rect x="717" y="89" width="2" height="1" opacity="0.12"/><rect x="573" y="384" width="2" height="1" opacity="0.32"/><rect x="230" y="733" width="3" height="2" opacity="0.39"/><rect x="641" y="439" width="1" height="2" opacity="0.31"/><rect x="114" y="443" width="1" height="1" opacity="0.36"/><rect x="633" y="556" width="3" height="1" opacity="0.12"/><rect x="544" y="778" width="2" height="1" opacity="0.18"/><rect x="511" y="112" width="1" height="2" opacity="0.30"/><rect x="503" y="709" width="1" height="2" opacity="0.34"/><rect x="100" y="369" width="2" height="1" opacity="0.25"/><rect x="562" y="485" width="3" height="2" opacity="0.27"/><rect x="131" y="398" width="2" height="1" opacity="0.19"/><rect x="14" y="505" width="3" height="2" opacity="0.32"/><rect x="761" y="621" width="2" height="2" opacity="0.24"/><rect x="171" y="494" width="3" height="2" opacity="0.25"/><rect x="301" y="140" width="2" height="2" opacity="0.36"/><rect x="494" y="9" width="2" height="1" opacity="0.40"/><rect x="622" y="468" width="1" height="2" opacity="0.41"/><rect x="268" y="429" width="3" height="2" opacity="0.36"/><rect x="484" y="554" width="1" height="2" opacity="0.28"/><rect x="357" y="627" width="2" height="2" opacity="0.14"/><rect x="537" y="723" width="1" height="2" opacity="0.14"/><rect x="20" y="142" width="2" height="1" opacity="0.15"/><rect x="706" y="254" width="3" height="2" opacity="0.28"/><rect x="471" y="149" width="1" height="2" opacity="0.23"/><rect x="583" y="615" width="2" height="1" opacity="0.11"/><rect x="189" y="438" width="3" height="2" opacity="0.34"/><rect x="791" y="372" width="2" height="2" opacity="0.39"/><rect x="64" y="330" width="2" height="2" opacity="0.32"/><rect x="691" y="130" width="1" height="2" opacity="0.19"/><rect x="804" y="352" width="2" height="2" opacity="0.14"/><rect x="622" y="722" width="1" height="2" opacity="0.31"/><rect x="33" y="662" width="2" height="2" opacity="0.28"/><rect x="175" y="385" width="2" height="1" opacity="0.35"/><rect x="465" y="129" width="1" height="2" opacity="0.34"/><rect x="471" y="756" width="3" height="2" opacity="0.28"/><rect x="171" y="185" width="1" height="1" opacity="0.31"/><rect x="663" y="207" width="2" height="1" opacity="0.24"/><rect x="233" y="591" width="2" height="2" opacity="0.18"/><rect x="332" y="671" width="2" height="1" opacity="0.11"/><rect x="478" y="285" width="2" height="2" opacity="0.30"/><rect x="337" y="460" width="1" height="2" opacity="0.42"/><rect x="657" y="405" width="2" height="2" opacity="0.25"/><rect x="614" y="356" width="1" height="2" opacity="0.25"/><rect x="736" y="8" width="1" height="2" opacity="0.30"/><rect x="431" y="213" width="2" height="2" opacity="0.34"/><rect x="467" y="601" width="2" height="1" opacity="0.24"/><rect x="98" y="137" width="2" height="2" opacity="0.20"/><rect x="650" y="379" width="2" height="1" opacity="0.30"/><rect x="591" y="366" width="2" height="2" opacity="0.21"/><rect x="83" y="490" width="1" height="1" opacity="0.31"/><rect x="436" y="217" width="2" height="2" opacity="0.26"/><rect x="554" y="115" width="2" height="1" opacity="0.40"/><rect x="282" y="103" width="3" height="2" opacity="0.39"/><rect x="555" y="88" width="3" height="2" opacity="0.13"/><rect x="482" y="283" width="2" height="2" opacity="0.28"/><rect x="641" y="661" width="2" height="2" opacity="0.16"/><rect x="479" y="273" width="2" height="1" opacity="0.16"/><rect x="468" y="146" width="2" height="2" opacity="0.23"/><rect x="507" y="754" width="3" height="2" opacity="0.14"/><rect x="318" y="389" width="2" height="1" opacity="0.30"/><rect x="761" y="85" width="3" height="2" opacity="0.17"/><rect x="407" y="296" width="2" height="2" opacity="0.38"/><rect x="406" y="495" width="3" height="1" opacity="0.18"/><rect x="319" y="629" width="2" height="2" opacity="0.12"/><rect x="453" y="529" width="2" height="1" opacity="0.41"/><rect x="379" y="767" width="3" height="2" opacity="0.20"/><rect x="286" y="732" width="1" height="2" opacity="0.24"/><rect x="298" y="581" width="3" height="2" opacity="0.22"/><rect x="283" y="576" width="3" height="2" opacity="0.38"/><rect x="557" y="739" width="2" height="2" opacity="0.31"/><rect x="497" y="188" width="1" height="2" opacity="0.24"/><rect x="296" y="279" width="3" height="2" opacity="0.26"/><rect x="93" y="413" width="1" height="2" opacity="0.32"/><rect x="32" y="379" width="1" height="2" opacity="0.40"/><rect x="608" y="357" width="3" height="2" opacity="0.34"/><rect x="65" y="279" width="3" height="1" opacity="0.16"/><rect x="375" y="276" width="2" height="2" opacity="0.23"/><rect x="256" y="595" width="2" height="1" opacity="0.16"/><rect x="77" y="529" width="2" height="1" opacity="0.39"/><rect x="319" y="593" width="1" height="2" opacity="0.40"/><rect x="613" y="334" width="3" height="1" opacity="0.13"/><rect x="242" y="207" width="2" height="2" opacity="0.24"/><rect x="523" y="280" width="1" height="2" opacity="0.27"/><rect x="715" y="390" width="3" height="2" opacity="0.32"/><rect x="685" y="43" width="2" height="2" opacity="0.14"/><rect x="257" y="744" width="3" height="2" opacity="0.18"/><rect x="406" y="262" width="2" height="2" opacity="0.29"/><rect x="108" y="126" width="1" height="2" opacity="0.13"/><rect x="66" y="207" width="2" height="2" opacity="0.28"/><rect x="227" y="690" width="2" height="1" opacity="0.31"/><rect x="631" y="701" width="2" height="2" opacity="0.12"/><rect x="696" y="617" width="2" height="2" opacity="0.15"/><rect x="535" y="274" width="3" height="1" opacity="0.21"/><rect x="254" y="326" width="3" height="2" opacity="0.24"/><rect x="329" y="123" width="2" height="2" opacity="0.37"/><rect x="187" y="610" width="2" height="1" opacity="0.14"/><rect x="587" y="392" width="3" height="2" opacity="0.12"/><rect x="666" y="155" width="2" height="2" opacity="0.26"/><rect x="344" y="368" width="2" height="2" opacity="0.29"/><rect x="418" y="739" width="1" height="2" opacity="0.28"/><rect x="327" y="92" width="1" height="2" opacity="0.19"/><rect x="691" y="52" width="3" height="2" opacity="0.17"/><rect x="771" y="671" width="2" height="2" opacity="0.14"/><rect x="454" y="60" width="2" height="2" opacity="0.20"/><rect x="48" y="382" width="2" height="1" opacity="0.42"/><rect x="553" y="31" width="3" height="2" opacity="0.24"/><rect x="285" y="498" width="3" height="1" opacity="0.25"/><rect x="204" y="119" width="1" height="2" opacity="0.18"/><rect x="730" y="462" width="2" height="1" opacity="0.17"/><rect x="754" y="296" width="1" height="2" opacity="0.32"/><rect x="176" y="300" width="3" height="2" opacity="0.11"/><rect x="756" y="321" width="3" height="2" opacity="0.26"/><rect x="196" y="715" width="2" height="2" opacity="0.31"/><rect x="684" y="95" width="2" height="1" opacity="0.17"/><rect x="419" y="206" width="2" height="1" opacity="0.17"/><rect x="447" y="199" width="3" height="2" opacity="0.35"/><rect x="289" y="653" width="3" height="2" opacity="0.40"/><rect x="756" y="177" width="1" height="1" opacity="0.17"/><rect x="708" y="239" width="3" height="2" opacity="0.37"/><rect x="425" y="577" width="2" height="1" opacity="0.39"/><rect x="343" y="414" width="2" height="2" opacity="0.33"/><rect x="438" y="116" width="1" height="2" opacity="0.11"/><rect x="361" y="235" width="3" height="2" opacity="0.28"/><rect x="587" y="682" width="2" height="1" opacity="0.18"/><rect x="587" y="147" width="2" height="2" opacity="0.21"/><rect x="72" y="216" width="2" height="2" opacity="0.18"/><rect x="175" y="222" width="1" height="2" opacity="0.26"/><rect x="530" y="20" width="1" height="2" opacity="0.18"/><rect x="713" y="36" width="2" height="2" opacity="0.13"/><rect x="502" y="130" width="3" height="2" opacity="0.13"/><rect x="221" y="387" width="3" height="2" opacity="0.30"/><rect x="322" y="755" width="2" height="2" opacity="0.11"/><rect x="663" y="83" width="2" height="1" opacity="0.24"/><rect x="742" y="106" width="2" height="1" opacity="0.26"/><rect x="590" y="779" width="2" height="2" opacity="0.18"/><rect x="428" y="271" width="3" height="2" opacity="0.33"/><rect x="667" y="593" width="3" height="1" opacity="0.25"/><rect x="215" y="354" width="2" height="2" opacity="0.41"/><rect x="157" y="585" width="1" height="1" opacity="0.28"/><rect x="487" y="134" width="2" height="1" opacity="0.14"/><rect x="702" y="409" width="3" height="2" opacity="0.16"/><rect x="753" y="537" width="3" height="2" opacity="0.26"/><rect x="708" y="524" width="1" height="2" opacity="0.29"/><rect x="294" y="657" width="2" height="2" opacity="0.29"/><rect x="544" y="203" width="3" height="2" opacity="0.12"/><rect x="550" y="339" width="2" height="1" opacity="0.33"/><rect x="651" y="172" width="1" height="2" opacity="0.29"/><rect x="776" y="71" width="3" height="2" opacity="0.39"/><rect x="229" y="212" width="2" height="1" opacity="0.26"/><rect x="291" y="761" width="2" height="1" opacity="0.10"/><rect x="525" y="717" width="1" height="1" opacity="0.13"/><rect x="480" y="483" width="3" height="2" opacity="0.28"/><rect x="224" y="750" width="2" height="2" opacity="0.12"/><rect x="540" y="132" width="3" height="1" opacity="0.31"/><rect x="158" y="706" width="2" height="2" opacity="0.29"/><rect x="95" y="721" width="2" height="2" opacity="0.31"/><rect x="787" y="350" width="2" height="1" opacity="0.16"/><rect x="695" y="600" width="3" height="2" opacity="0.23"/><rect x="307" y="319" width="1" height="2" opacity="0.12"/><rect x="436" y="51" width="3" height="2" opacity="0.15"/><rect x="156" y="625" width="1" height="2" opacity="0.40"/><rect x="717" y="24" width="1" height="2" opacity="0.22"/><rect x="200" y="176" width="2" height="2" opacity="0.33"/><rect x="278" y="769" width="2" height="2" opacity="0.33"/><rect x="299" y="602" width="1" height="2" opacity="0.41"/><rect x="204" y="578" width="2" height="1" opacity="0.23"/><rect x="553" y="411" width="2" height="1" opacity="0.12"/><rect x="440" y="458" width="2" height="2" opacity="0.40"/><rect x="47" y="440" width="2" height="2" opacity="0.16"/><rect x="672" y="772" width="2" height="1" opacity="0.19"/><rect x="325" y="165" width="1" height="2" opacity="0.25"/><rect x="615" y="284" width="2" height="2" opacity="0.26"/><rect x="157" y="568" width="2" height="1" opacity="0.30"/><rect x="554" y="485" width="2" height="2" opacity="0.33"/><rect x="109" y="509" width="2" height="2" opacity="0.13"/><rect x="742" y="401" width="2" height="2" opacity="0.29"/><rect x="629" y="311" width="3" height="2" opacity="0.38"/><rect x="270" y="142" width="3" height="2" opacity="0.36"/><rect x="527" y="639" width="1" height="1" opacity="0.37"/><rect x="717" y="185" width="3" height="2" opacity="0.24"/><rect x="697" y="88" width="1" height="1" opacity="0.12"/><rect x="398" y="14" width="2" height="2" opacity="0.39"/><rect x="135" y="133" width="1" height="2" opacity="0.10"/><rect x="420" y="469" width="2" height="1" opacity="0.23"/><rect x="785" y="15" width="3" height="2" opacity="0.40"/><rect x="272" y="659" width="2" height="2" opacity="0.40"/><rect x="327" y="555" width="2" height="2" opacity="0.29"/><rect x="685" y="592" width="2" height="1" opacity="0.38"/><rect x="154" y="267" width="3" height="2" opacity="0.10"/><rect x="233" y="680" width="3" height="2" opacity="0.27"/><rect x="94" y="420" width="2" height="1" opacity="0.31"/><rect x="666" y="357" width="3" height="2" opacity="0.33"/><rect x="147" y="266" width="2" height="2" opacity="0.12"/><rect x="201" y="649" width="2" height="2" opacity="0.41"/><rect x="301" y="692" width="2" height="2" opacity="0.36"/><rect x="692" y="663" width="3" height="2" opacity="0.26"/><rect x="143" y="55" width="1" height="2" opacity="0.20"/><rect x="254" y="643" width="3" height="1" opacity="0.13"/><rect x="506" y="669" width="2" height="1" opacity="0.38"/><rect x="147" y="69" width="1" height="1" opacity="0.11"/><rect x="40" y="172" width="2" height="1" opacity="0.26"/><rect x="103" y="490" width="2" height="1" opacity="0.24"/><rect x="23" y="763" width="2" height="2" opacity="0.21"/><rect x="786" y="143" width="1" height="2" opacity="0.40"/><rect x="338" y="36" width="2" height="1" opacity="0.15"/><rect x="285" y="629" width="1" height="1" opacity="0.13"/><rect x="393" y="335" width="2" height="2" opacity="0.34"/><rect x="464" y="546" width="2" height="1" opacity="0.23"/><rect x="295" y="386" width="2" height="2" opacity="0.26"/><rect x="139" y="600" width="2" height="2" opacity="0.26"/><rect x="436" y="683" width="1" height="2" opacity="0.23"/><rect x="623" y="292" width="2" height="1" opacity="0.32"/><rect x="719" y="461" width="1" height="1" opacity="0.32"/><rect x="210" y="631" width="3" height="2" opacity="0.34"/><rect x="87" y="673" width="1" height="1" opacity="0.26"/><rect x="203" y="426" width="2" height="1" opacity="0.20"/><rect x="467" y="711" width="1" height="1" opacity="0.34"/><rect x="253" y="622" width="2" height="1" opacity="0.39"/><rect x="645" y="76" width="3" height="1" opacity="0.12"/><rect x="367" y="222" width="3" height="2" opacity="0.12"/><rect x="397" y="326" width="3" height="2" opacity="0.10"/><rect x="703" y="260" width="1" height="1" opacity="0.30"/><rect x="437" y="749" width="1" height="2" opacity="0.27"/><rect x="710" y="621" width="1" height="2" opacity="0.19"/><rect x="793" y="718" width="2" height="2" opacity="0.22"/><rect x="537" y="234" width="3" height="2" opacity="0.30"/><rect x="716" y="20" width="3" height="1" opacity="0.18"/><rect x="531" y="596" width="2" height="1" opacity="0.24"/><rect x="744" y="562" width="1" height="2" opacity="0.23"/><rect x="660" y="3" width="2" height="1" opacity="0.36"/><rect x="337" y="747" width="1" height="2" opacity="0.15"/><rect x="589" y="34" width="2" height="2" opacity="0.21"/><rect x="335" y="268" width="3" height="2" opacity="0.28"/><rect x="800" y="774" width="3" height="2" opacity="0.17"/><rect x="315" y="626" width="3" height="2" opacity="0.42"/><rect x="599" y="72" width="3" height="2" opacity="0.22"/><rect x="353" y="573" width="3" height="2" opacity="0.28"/><rect x="633" y="571" width="1" height="2" opacity="0.20"/><rect x="68" y="672" width="2" height="1" opacity="0.18"/><rect x="175" y="149" width="3" height="1" opacity="0.38"/><rect x="422" y="499" width="2" height="2" opacity="0.27"/><rect x="95" y="681" width="3" height="2" opacity="0.29"/><rect x="223" y="225" width="1" height="2" opacity="0.23"/><rect x="132" y="740" width="1" height="1" opacity="0.30"/><rect x="490" y="598" width="2" height="1" opacity="0.30"/><rect x="277" y="537" width="2" height="2" opacity="0.32"/><rect x="650" y="196" width="1" height="2" opacity="0.26"/><rect x="417" y="478" width="3" height="2" opacity="0.41"/><rect x="571" y="620" width="3" height="1" opacity="0.40"/><rect x="555" y="205" width="3" height="2" opacity="0.16"/><rect x="66" y="310" width="2" height="2" opacity="0.18"/><rect x="759" y="565" width="2" height="2" opacity="0.40"/><rect x="710" y="423" width="2" height="1" opacity="0.35"/><rect x="522" y="111" width="2" height="2" opacity="0.21"/><rect x="364" y="623" width="3" height="1" opacity="0.38"/><rect x="44" y="186" width="3" height="2" opacity="0.24"/><rect x="666" y="97" width="1" height="1" opacity="0.12"/><rect x="213" y="426" width="2" height="1" opacity="0.17"/><rect x="532" y="723" width="1" height="2" opacity="0.26"/><rect x="172" y="303" width="2" height="2" opacity="0.34"/><rect x="212" y="767" width="2" height="2" opacity="0.42"/><rect x="609" y="471" width="2" height="2" opacity="0.23"/><rect x="207" y="451" width="2" height="2" opacity="0.28"/><rect x="801" y="290" width="1" height="1" opacity="0.11"/><rect x="371" y="740" width="2" height="2" opacity="0.24"/><rect x="43" y="392" width="3" height="2" opacity="0.11"/><rect x="426" y="170" width="1" height="2" opacity="0.34"/><rect x="285" y="700" width="1" height="2" opacity="0.19"/><rect x="123" y="534" width="3" height="2" opacity="0.29"/><rect x="612" y="507" width="2" height="2" opacity="0.17"/><rect x="728" y="104" width="1" height="2" opacity="0.18"/><rect x="609" y="500" width="3" height="1" opacity="0.13"/><rect x="784" y="392" width="3" height="1" opacity="0.15"/><rect x="336" y="276" width="2" height="2" opacity="0.22"/><rect x="290" y="501" width="1" height="1" opacity="0.42"/><rect x="688" y="11" width="3" height="2" opacity="0.33"/><rect x="36" y="695" width="1" height="2" opacity="0.20"/><rect x="789" y="224" width="3" height="2" opacity="0.10"/><rect x="391" y="259" width="2" height="1" opacity="0.33"/><rect x="661" y="749" width="3" height="1" opacity="0.40"/><rect x="804" y="642" width="3" height="2" opacity="0.29"/><rect x="347" y="580" width="2" height="2" opacity="0.26"/><rect x="311" y="383" width="3" height="2" opacity="0.20"/><rect x="325" y="543" width="2" height="2" opacity="0.26"/><rect x="224" y="598" width="3" height="2" opacity="0.27"/><rect x="595" y="312" width="2" height="1" opacity="0.39"/><rect x="173" y="667" width="2" height="2" opacity="0.12"/><rect x="650" y="412" width="1" height="2" opacity="0.27"/><rect x="510" y="768" width="2" height="2" opacity="0.35"/><rect x="374" y="161" width="3" height="2" opacity="0.13"/><rect x="148" y="241" width="3" height="1" opacity="0.11"/><rect x="624" y="318" width="2" height="2" opacity="0.16"/><rect x="306" y="430" width="3" height="2" opacity="0.14"/><rect x="293" y="394" width="2" height="1" opacity="0.27"/><rect x="536" y="613" width="3" height="2" opacity="0.30"/><rect x="552" y="514" width="1" height="2" opacity="0.38"/><rect x="501" y="59" width="2" height="2" opacity="0.31"/><rect x="136" y="535" width="1" height="2" opacity="0.14"/><rect x="205" y="309" width="2" height="1" opacity="0.16"/><rect x="161" y="415" width="2" height="2" opacity="0.10"/><rect x="414" y="323" width="1" height="2" opacity="0.24"/><rect x="700" y="708" width="1" height="2" opacity="0.39"/><rect x="740" y="89" width="2" height="2" opacity="0.34"/><rect x="665" y="217" width="3" height="2" opacity="0.27"/><rect x="404" y="174" width="3" height="1" opacity="0.19"/><rect x="782" y="185" width="2" height="2" opacity="0.25"/><rect x="590" y="213" width="2" height="1" opacity="0.25"/><rect x="684" y="583" width="2" height="2" opacity="0.24"/><rect x="483" y="83" width="2" height="2" opacity="0.21"/><rect x="83" y="322" width="2" height="2" opacity="0.16"/><rect x="455" y="330" width="2" height="2" opacity="0.42"/><rect x="689" y="689" width="2" height="2" opacity="0.21"/><rect x="98" y="224" width="2" height="2" opacity="0.15"/><rect x="419" y="558" width="2" height="2" opacity="0.28"/><rect x="237" y="393" width="1" height="1" opacity="0.39"/><rect x="729" y="654" width="2" height="1" opacity="0.23"/><rect x="567" y="476" width="2" height="2" opacity="0.41"/><rect x="45" y="546" width="2" height="1" opacity="0.30"/><rect x="12" y="588" width="1" height="1" opacity="0.25"/><rect x="687" y="69" width="3" height="2" opacity="0.10"/><rect x="283" y="198" width="1" height="1" opacity="0.12"/><rect x="114" y="654" width="3" height="1" opacity="0.18"/><rect x="188" y="204" width="1" height="1" opacity="0.37"/><rect x="366" y="454" width="1" height="1" opacity="0.36"/><rect x="435" y="545" width="2" height="2" opacity="0.35"/><rect x="12" y="647" width="3" height="2" opacity="0.38"/><rect x="39" y="779" width="1" height="2" opacity="0.33"/><rect x="274" y="275" width="3" height="2" opacity="0.33"/><rect x="502" y="194" width="1" height="1" opacity="0.14"/><rect x="42" y="567" width="2" height="2" opacity="0.38"/><rect x="399" y="404" width="2" height="2" opacity="0.28"/><rect x="437" y="681" width="1" height="2" opacity="0.10"/><rect x="168" y="221" width="2" height="2" opacity="0.11"/><rect x="76" y="625" width="3" height="2" opacity="0.36"/><rect x="414" y="132" width="2" height="1" opacity="0.16"/><rect x="283" y="224" width="3" height="2" opacity="0.32"/><rect x="625" y="702" width="3" height="1" opacity="0.20"/><rect x="627" y="33" width="1" height="2" opacity="0.41"/><rect x="466" y="63" width="2" height="2" opacity="0.13"/><rect x="792" y="4" width="2" height="1" opacity="0.27"/><rect x="475" y="109" width="3" height="2" opacity="0.14"/><rect x="557" y="293" width="2" height="2" opacity="0.21"/><rect x="255" y="373" width="1" height="2" opacity="0.11"/><rect x="813" y="9" width="2" height="1" opacity="0.23"/><rect x="805" y="268" width="2" height="2" opacity="0.26"/><rect x="513" y="684" width="1" height="1" opacity="0.39"/><rect x="740" y="84" width="2" height="2" opacity="0.37"/><rect x="759" y="242" width="1" height="2" opacity="0.37"/><rect x="493" y="690" width="3" height="1" opacity="0.40"/><rect x="336" y="84" width="1" height="2" opacity="0.15"/><rect x="550" y="772" width="2" height="2" opacity="0.26"/><rect x="323" y="631" width="2" height="2" opacity="0.24"/><rect x="632" y="91" width="3" height="2" opacity="0.28"/><rect x="337" y="62" width="3" height="2" opacity="0.31"/><rect x="151" y="299" width="1" height="1" opacity="0.22"/><rect x="362" y="280" width="3" height="1" opacity="0.33"/><rect x="163" y="217" width="3" height="2" opacity="0.14"/><rect x="168" y="103" width="3" height="2" opacity="0.32"/><rect x="191" y="509" width="2" height="2" opacity="0.24"/><rect x="208" y="74" width="2" height="2" opacity="0.10"/><rect x="503" y="47" width="1" height="1" opacity="0.22"/><rect x="364" y="721" width="2" height="2" opacity="0.38"/><rect x="773" y="347" width="2" height="2" opacity="0.39"/><rect x="385" y="428" width="3" height="1" opacity="0.13"/><rect x="510" y="81" width="1" height="1" opacity="0.42"/><rect x="269" y="719" width="3" height="1" opacity="0.14"/><rect x="436" y="232" width="2" height="2" opacity="0.39"/><rect x="470" y="513" width="3" height="2" opacity="0.35"/><rect x="496" y="774" width="2" height="2" opacity="0.11"/><rect x="382" y="121" width="2" height="2" opacity="0.12"/><rect x="708" y="357" width="2" height="1" opacity="0.35"/><rect x="708" y="31" width="1" height="2" opacity="0.25"/><rect x="478" y="768" width="2" height="2" opacity="0.14"/><rect x="202" y="100" width="2" height="2" opacity="0.39"/><rect x="75" y="726" width="2" height="1" opacity="0.27"/><rect x="372" y="602" width="2" height="2" opacity="0.41"/><rect x="7" y="107" width="2" height="2" opacity="0.19"/><rect x="431" y="672" width="2" height="2" opacity="0.26"/><rect x="345" y="578" width="2" height="2" opacity="0.20"/><rect x="202" y="393" width="2" height="2" opacity="0.39"/><rect x="101" y="184" width="3" height="2" opacity="0.16"/><rect x="110" y="245" width="1" height="2" opacity="0.29"/><rect x="448" y="114" width="3" height="2" opacity="0.28"/><rect x="721" y="392" width="1" height="2" opacity="0.17"/><rect x="274" y="531" width="2" height="1" opacity="0.27"/><rect x="32" y="103" width="1" height="2" opacity="0.17"/><rect x="259" y="87" width="2" height="2" opacity="0.29"/><rect x="12" y="498" width="2" height="2" opacity="0.27"/><rect x="507" y="738" width="2" height="2" opacity="0.13"/><rect x="614" y="278" width="2" height="1" opacity="0.27"/><rect x="548" y="473" width="1" height="2" opacity="0.37"/><rect x="540" y="679" width="2" height="2" opacity="0.35"/><rect x="182" y="600" width="2" height="2" opacity="0.12"/><rect x="523" y="131" width="1" height="2" opacity="0.39"/><rect x="417" y="636" width="1" height="1" opacity="0.18"/><rect x="758" y="721" width="2" height="1" opacity="0.38"/><rect x="580" y="133" width="2" height="1" opacity="0.30"/><rect x="710" y="238" width="3" height="2" opacity="0.14"/><rect x="416" y="339" width="2" height="2" opacity="0.16"/><rect x="352" y="652" width="2" height="2" opacity="0.42"/><rect x="726" y="466" width="2" height="1" opacity="0.13"/><rect x="8" y="613" width="3" height="1" opacity="0.12"/><rect x="272" y="670" width="3" height="2" opacity="0.16"/><rect x="368" y="763" width="2" height="1" opacity="0.29"/><rect x="203" y="576" width="2" height="2" opacity="0.40"/><rect x="760" y="160" width="1" height="1" opacity="0.23"/><rect x="258" y="140" width="2" height="2" opacity="0.35"/><rect x="338" y="197" width="2" height="2" opacity="0.30"/><rect x="252" y="104" width="2" height="2" opacity="0.41"/><rect x="270" y="527" width="1" height="1" opacity="0.39"/><rect x="359" y="192" width="2" height="2" opacity="0.14"/><rect x="581" y="390" width="3" height="1" opacity="0.32"/><rect x="714" y="399" width="3" height="2" opacity="0.25"/><rect x="152" y="475" width="2" height="2" opacity="0.22"/><rect x="758" y="227" width="2" height="2" opacity="0.31"/><rect x="493" y="663" width="2" height="2" opacity="0.40"/><rect x="102" y="242" width="3" height="1" opacity="0.37"/><rect x="163" y="554" width="2" height="2" opacity="0.27"/><rect x="225" y="172" width="3" height="1" opacity="0.30"/><rect x="469" y="307" width="3" height="1" opacity="0.23"/><rect x="512" y="609" width="2" height="2" opacity="0.10"/><rect x="679" y="586" width="1" height="2" opacity="0.24"/><rect x="421" y="607" width="2" height="1" opacity="0.40"/><rect x="785" y="762" width="3" height="1" opacity="0.27"/><rect x="473" y="124" width="2" height="2" opacity="0.23"/><rect x="457" y="308" width="2" height="1" opacity="0.38"/><rect x="453" y="84" width="1" height="1" opacity="0.41"/><rect x="475" y="218" width="1" height="2" opacity="0.36"/><rect x="543" y="704" width="2" height="1" opacity="0.23"/><rect x="201" y="253" width="1" height="1" opacity="0.38"/><rect x="655" y="111" width="3" height="1" opacity="0.29"/><rect x="515" y="585" width="2" height="2" opacity="0.21"/><rect x="450" y="493" width="2" height="2" opacity="0.16"/><rect x="551" y="333" width="2" height="2" opacity="0.35"/><rect x="45" y="623" width="2" height="1" opacity="0.20"/><rect x="228" y="433" width="3" height="1" opacity="0.25"/><rect x="620" y="710" width="2" height="2" opacity="0.13"/><rect x="29" y="444" width="1" height="2" opacity="0.28"/><rect x="161" y="122" width="2" height="2" opacity="0.10"/><rect x="16" y="266" width="2" height="2" opacity="0.13"/><rect x="745" y="365" width="1" height="1" opacity="0.25"/><rect x="88" y="758" width="1" height="2" opacity="0.21"/><rect x="793" y="465" width="3" height="2" opacity="0.30"/><rect x="385" y="659" width="1" height="2" opacity="0.28"/><rect x="744" y="26" width="2" height="2" opacity="0.23"/><rect x="489" y="650" width="1" height="1" opacity="0.33"/><rect x="545" y="330" width="2" height="2" opacity="0.32"/><rect x="482" y="689" width="1" height="1" opacity="0.13"/><rect x="367" y="133" width="2" height="2" opacity="0.19"/><rect x="459" y="529" width="1" height="2" opacity="0.12"/><rect x="256" y="512" width="2" height="1" opacity="0.28"/><rect x="7" y="700" width="3" height="1" opacity="0.39"/><rect x="160" y="492" width="3" height="1" opacity="0.39"/><rect x="729" y="396" width="2" height="2" opacity="0.23"/><rect x="121" y="116" width="2" height="2" opacity="0.34"/><rect x="358" y="170" width="2" height="2" opacity="0.29"/><rect x="42" y="769" width="3" height="2" opacity="0.17"/><rect x="299" y="563" width="1" height="1" opacity="0.12"/><rect x="645" y="89" width="2" height="1" opacity="0.40"/><rect x="253" y="340" width="2" height="2" opacity="0.33"/><rect x="73" y="327" width="1" height="2" opacity="0.32"/><rect x="187" y="506" width="3" height="2" opacity="0.37"/><rect x="551" y="535" width="2" height="2" opacity="0.20"/><rect x="93" y="109" width="2" height="1" opacity="0.22"/><rect x="743" y="355" width="2" height="1" opacity="0.26"/><rect x="550" y="779" width="1" height="1" opacity="0.32"/><rect x="481" y="377" width="2" height="1" opacity="0.22"/><rect x="726" y="378" width="2" height="1" opacity="0.17"/><rect x="372" y="328" width="1" height="2" opacity="0.15"/><rect x="76" y="528" width="1" height="1" opacity="0.19"/><rect x="148" y="323" width="2" height="1" opacity="0.28"/><rect x="607" y="241" width="3" height="1" opacity="0.29"/><rect x="424" y="230" width="3" height="2" opacity="0.18"/><rect x="644" y="553" width="2" height="1" opacity="0.22"/><rect x="587" y="229" width="1" height="2" opacity="0.23"/><rect x="419" y="604" width="2" height="1" opacity="0.36"/><rect x="324" y="318" width="2" height="2" opacity="0.10"/><rect x="96" y="617" width="2" height="2" opacity="0.16"/><rect x="688" y="33" width="3" height="1" opacity="0.36"/><rect x="86" y="119" width="2" height="1" opacity="0.31"/><rect x="363" y="621" width="2" height="2" opacity="0.28"/><rect x="740" y="400" width="2" height="2" opacity="0.14"/><rect x="339" y="428" width="2" height="1" opacity="0.36"/><rect x="735" y="467" width="1" height="2" opacity="0.17"/><rect x="238" y="722" width="1" height="1" opacity="0.39"/><rect x="62" y="697" width="1" height="2" opacity="0.20"/><rect x="251" y="186" width="3" height="1" opacity="0.17"/><rect x="392" y="215" width="2" height="1" opacity="0.18"/><rect x="437" y="157" width="2" height="2" opacity="0.16"/><rect x="186" y="256" width="2" height="1" opacity="0.28"/><rect x="272" y="129" width="2" height="2" opacity="0.34"/><rect x="598" y="480" width="2" height="2" opacity="0.31"/><rect x="794" y="699" width="1" height="2" opacity="0.33"/><rect x="16" y="381" width="2" height="2" opacity="0.32"/><rect x="17" y="716" width="2" height="2" opacity="0.32"/><rect x="792" y="287" width="3" height="1" opacity="0.19"/><rect x="92" y="182" width="3" height="1" opacity="0.17"/><rect x="166" y="419" width="2" height="1" opacity="0.20"/><rect x="344" y="750" width="3" height="2" opacity="0.19"/><rect x="734" y="18" width="1" height="2" opacity="0.27"/><rect x="796" y="274" width="2" height="2" opacity="0.38"/><rect x="145" y="660" width="3" height="2" opacity="0.18"/><rect x="670" y="183" width="1" height="1" opacity="0.12"/><rect x="119" y="741" width="2" height="2" opacity="0.18"/><rect x="488" y="327" width="1" height="2" opacity="0.41"/><rect x="383" y="186" width="2" height="2" opacity="0.25"/><rect x="786" y="92" width="1" height="2" opacity="0.15"/><rect x="633" y="658" width="2" height="1" opacity="0.22"/><rect x="487" y="454" width="3" height="2" opacity="0.29"/><rect x="766" y="699" width="2" height="1" opacity="0.41"/><rect x="234" y="255" width="3" height="1" opacity="0.37"/><rect x="43" y="715" width="1" height="2" opacity="0.18"/><rect x="786" y="613" width="1" height="2" opacity="0.20"/><rect x="550" y="426" width="1" height="1" opacity="0.37"/><rect x="273" y="720" width="2" height="2" opacity="0.31"/><rect x="299" y="751" width="1" height="1" opacity="0.13"/><rect x="91" y="324" width="3" height="2" opacity="0.12"/><rect x="500" y="225" width="3" height="2" opacity="0.41"/><rect x="495" y="72" width="3" height="2" opacity="0.23"/><rect x="123" y="151" width="2" height="2" opacity="0.21"/><rect x="297" y="582" width="2" height="1" opacity="0.25"/><rect x="179" y="488" width="3" height="1" opacity="0.13"/><rect x="195" y="659" width="3" height="2" opacity="0.35"/><rect x="17" y="553" width="2" height="1" opacity="0.37"/><rect x="599" y="714" width="3" height="2" opacity="0.37"/><rect x="672" y="156" width="2" height="1" opacity="0.14"/><rect x="564" y="326" width="2" height="2" opacity="0.36"/><rect x="387" y="109" width="2" height="2" opacity="0.10"/><rect x="418" y="621" width="1" height="1" opacity="0.41"/><rect x="5" y="760" width="2" height="2" opacity="0.18"/><rect x="756" y="373" width="3" height="2" opacity="0.40"/><rect x="798" y="24" width="1" height="1" opacity="0.22"/><rect x="535" y="422" width="2" height="2" opacity="0.15"/><rect x="555" y="86" width="2" height="2" opacity="0.12"/><rect x="341" y="577" width="1" height="2" opacity="0.19"/><rect x="810" y="283" width="3" height="1" opacity="0.20"/><rect x="237" y="725" width="3" height="2" opacity="0.36"/><rect x="323" y="92" width="2" height="2" opacity="0.40"/><rect x="538" y="476" width="3" height="2" opacity="0.24"/><rect x="769" y="581" width="1" height="2" opacity="0.28"/><rect x="376" y="106" width="3" height="2" opacity="0.22"/><rect x="218" y="117" width="2" height="1" opacity="0.14"/><rect x="768" y="468" width="3" height="2" opacity="0.39"/><rect x="514" y="178" width="2" height="1" opacity="0.16"/><rect x="51" y="103" width="1" height="2" opacity="0.27"/><rect x="420" y="680" width="1" height="2" opacity="0.10"/><rect x="554" y="171" width="1" height="1" opacity="0.29"/><rect x="738" y="49" width="2" height="1" opacity="0.28"/><rect x="799" y="764" width="3" height="1" opacity="0.20"/><rect x="568" y="654" width="1" height="2" opacity="0.15"/><rect x="728" y="183" width="3" height="1" opacity="0.40"/><rect x="352" y="498" width="2" height="2" opacity="0.15"/><rect x="343" y="94" width="1" height="1" opacity="0.13"/><rect x="526" y="404" width="3" height="2" opacity="0.39"/><rect x="100" y="206" width="2" height="2" opacity="0.34"/><rect x="98" y="317" width="2" height="1" opacity="0.29"/><rect x="397" y="390" width="3" height="1" opacity="0.12"/><rect x="793" y="432" width="2" height="2" opacity="0.17"/><rect x="164" y="471" width="2" height="2" opacity="0.30"/><rect x="149" y="268" width="2" height="2" opacity="0.28"/><rect x="222" y="136" width="2" height="1" opacity="0.32"/><rect x="322" y="469" width="1" height="2" opacity="0.18"/><rect x="695" y="149" width="3" height="2" opacity="0.34"/><rect x="321" y="694" width="2" height="1" opacity="0.31"/><rect x="533" y="543" width="2" height="2" opacity="0.26"/><rect x="762" y="32" width="3" height="2" opacity="0.40"/><rect x="239" y="325" width="3" height="1" opacity="0.27"/><rect x="313" y="114" width="3" height="1" opacity="0.15"/><rect x="486" y="543" width="2" height="2" opacity="0.18"/><rect x="611" y="38" width="3" height="2" opacity="0.14"/><rect x="125" y="576" width="1" height="1" opacity="0.16"/><rect x="117" y="681" width="2" height="1" opacity="0.23"/><rect x="317" y="656" width="1" height="2" opacity="0.28"/><rect x="712" y="368" width="2" height="2" opacity="0.27"/><rect x="49" y="568" width="2" height="2" opacity="0.23"/><rect x="722" y="181" width="1" height="1" opacity="0.38"/><rect x="12" y="713" width="1" height="2" opacity="0.35"/><rect x="220" y="277" width="1" height="2" opacity="0.21"/><rect x="757" y="379" width="2" height="1" opacity="0.17"/><rect x="628" y="115" width="2" height="1" opacity="0.13"/><rect x="197" y="582" width="1" height="2" opacity="0.40"/><rect x="723" y="287" width="3" height="1" opacity="0.30"/><rect x="468" y="138" width="3" height="2" opacity="0.14"/><rect x="806" y="165" width="2" height="2" opacity="0.38"/><rect x="746" y="73" width="2" height="1" opacity="0.31"/><rect x="713" y="500" width="2" height="2" opacity="0.39"/><rect x="118" y="284" width="1" height="2" opacity="0.20"/><rect x="649" y="484" width="3" height="2" opacity="0.38"/><rect x="138" y="426" width="3" height="2" opacity="0.27"/><rect x="288" y="663" width="3" height="2" opacity="0.19"/><rect x="281" y="763" width="2" height="2" opacity="0.12"/><rect x="240" y="493" width="1" height="2" opacity="0.16"/><rect x="22" y="145" width="2" height="1" opacity="0.30"/><rect x="444" y="378" width="2" height="1" opacity="0.38"/><rect x="729" y="719" width="2" height="1" opacity="0.32"/><rect x="744" y="617" width="3" height="2" opacity="0.33"/><rect x="327" y="70" width="3" height="2" opacity="0.35"/><rect x="798" y="583" width="2" height="2" opacity="0.17"/><rect x="417" y="501" width="1" height="2" opacity="0.19"/><rect x="63" y="183" width="3" height="2" opacity="0.12"/><rect x="145" y="311" width="3" height="2" opacity="0.40"/><rect x="236" y="595" width="2" height="2" opacity="0.13"/><rect x="572" y="470" width="3" height="2" opacity="0.17"/><rect x="653" y="8" width="2" height="2" opacity="0.25"/><rect x="257" y="586" width="1" height="2" opacity="0.25"/><rect x="412" y="586" width="2" height="2" opacity="0.42"/><rect x="705" y="693" width="1" height="1" opacity="0.13"/><rect x="475" y="550" width="3" height="2" opacity="0.30"/><rect x="353" y="171" width="2" height="2" opacity="0.15"/><rect x="319" y="378" width="1" height="2" opacity="0.40"/><rect x="414" y="780" width="3" height="2" opacity="0.25"/><rect x="517" y="60" width="3" height="2" opacity="0.28"/><rect x="681" y="188" width="2" height="2" opacity="0.38"/><rect x="38" y="286" width="2" height="2" opacity="0.21"/><rect x="314" y="365" width="2" height="2" opacity="0.34"/><rect x="507" y="137" width="2" height="1" opacity="0.38"/><rect x="427" y="190" width="2" height="2" opacity="0.40"/><rect x="87" y="215" width="2" height="1" opacity="0.32"/><rect x="50" y="97" width="1" height="1" opacity="0.36"/><rect x="698" y="387" width="2" height="2" opacity="0.19"/><rect x="327" y="596" width="2" height="1" opacity="0.40"/><rect x="548" y="112" width="2" height="2" opacity="0.11"/><rect x="333" y="85" width="3" height="1" opacity="0.10"/><rect x="690" y="193" width="2" height="1" opacity="0.40"/><rect x="560" y="457" width="2" height="1" opacity="0.16"/><rect x="343" y="339" width="2" height="2" opacity="0.28"/><rect x="740" y="447" width="1" height="2" opacity="0.26"/><rect x="439" y="391" width="2" height="2" opacity="0.22"/><rect x="268" y="459" width="3" height="2" opacity="0.21"/><rect x="57" y="111" width="2" height="1" opacity="0.28"/><rect x="519" y="304" width="2" height="1" opacity="0.21"/><rect x="691" y="405" width="2" height="2" opacity="0.14"/><rect x="398" y="529" width="3" height="2" opacity="0.31"/><rect x="587" y="37" width="2" height="1" opacity="0.30"/><rect x="657" y="102" width="2" height="1" opacity="0.40"/><rect x="445" y="759" width="2" height="2" opacity="0.25"/><rect x="602" y="387" width="1" height="1" opacity="0.41"/><rect x="775" y="388" width="2" height="1" opacity="0.30"/><rect x="614" y="595" width="2" height="1" opacity="0.39"/><rect x="33" y="322" width="3" height="2" opacity="0.40"/><rect x="461" y="431" width="3" height="1" opacity="0.31"/><rect x="22" y="679" width="3" height="1" opacity="0.24"/><rect x="425" y="447" width="3" height="2" opacity="0.29"/><rect x="262" y="747" width="1" height="2" opacity="0.27"/><rect x="210" y="196" width="2" height="1" opacity="0.29"/><rect x="445" y="75" width="1" height="2" opacity="0.40"/><rect x="698" y="187" width="2" height="2" opacity="0.16"/><rect x="43" y="209" width="1" height="2" opacity="0.12"/><rect x="29" y="127" width="1" height="2" opacity="0.12"/><rect x="117" y="593" width="2" height="2" opacity="0.24"/><rect x="703" y="532" width="3" height="1" opacity="0.40"/><rect x="634" y="45" width="1" height="2" opacity="0.18"/><rect x="691" y="175" width="3" height="1" opacity="0.17"/><rect x="301" y="342" width="2" height="2" opacity="0.33"/><rect x="255" y="327" width="2" height="2" opacity="0.36"/><rect x="513" y="593" width="3" height="2" opacity="0.11"/><rect x="289" y="219" width="3" height="2" opacity="0.20"/><rect x="283" y="674" width="1" height="2" opacity="0.21"/><rect x="457" y="235" width="2" height="2" opacity="0.14"/><rect x="400" y="9" width="3" height="2" opacity="0.36"/><rect x="89" y="425" width="3" height="1" opacity="0.34"/><rect x="187" y="514" width="1" height="2" opacity="0.36"/><rect x="442" y="222" width="3" height="2" opacity="0.35"/><rect x="276" y="216" width="1" height="1" opacity="0.33"/><rect x="228" y="153" width="3" height="2" opacity="0.14"/><rect x="350" y="129" width="2" height="2" opacity="0.38"/><rect x="374" y="679" width="2" height="1" opacity="0.23"/><rect x="318" y="721" width="2" height="2" opacity="0.22"/><rect x="588" y="683" width="3" height="1" opacity="0.17"/><rect x="643" y="495" width="3" height="2" opacity="0.30"/><rect x="307" y="452" width="2" height="1" opacity="0.14"/><rect x="238" y="687" width="2" height="2" opacity="0.31"/><rect x="479" y="442" width="3" height="2" opacity="0.23"/><rect x="420" y="399" width="3" height="1" opacity="0.35"/><rect x="720" y="156" width="1" height="1" opacity="0.10"/><rect x="470" y="115" width="3" height="2" opacity="0.31"/><rect x="703" y="589" width="3" height="1" opacity="0.38"/><rect x="522" y="629" width="2" height="1" opacity="0.21"/><rect x="331" y="573" width="2" height="2" opacity="0.25"/><rect x="426" y="440" width="2" height="2" opacity="0.14"/><rect x="682" y="157" width="1" height="2" opacity="0.11"/><rect x="609" y="374" width="1" height="2" opacity="0.38"/><rect x="494" y="327" width="3" height="2" opacity="0.31"/><rect x="749" y="573" width="2" height="1" opacity="0.30"/><rect x="72" y="467" width="1" height="1" opacity="0.13"/><rect x="351" y="588" width="2" height="2" opacity="0.28"/><rect x="203" y="671" width="3" height="1" opacity="0.31"/><rect x="333" y="200" width="1" height="2" opacity="0.30"/><rect x="308" y="461" width="2" height="2" opacity="0.21"/><rect x="148" y="577" width="3" height="1" opacity="0.20"/><rect x="101" y="758" width="3" height="2" opacity="0.18"/><rect x="81" y="576" width="3" height="1" opacity="0.30"/><rect x="117" y="65" width="2" height="2" opacity="0.14"/><rect x="376" y="618" width="2" height="2" opacity="0.27"/><rect x="33" y="418" width="1" height="2" opacity="0.40"/><rect x="722" y="357" width="2" height="1" opacity="0.42"/><rect x="533" y="343" width="1" height="2" opacity="0.34"/><rect x="219" y="65" width="2" height="2" opacity="0.13"/><rect x="39" y="101" width="2" height="2" opacity="0.30"/><rect x="662" y="327" width="1" height="2" opacity="0.27"/><rect x="399" y="649" width="2" height="1" opacity="0.25"/><rect x="356" y="43" width="1" height="2" opacity="0.18"/><rect x="486" y="386" width="2" height="2" opacity="0.18"/><rect x="61" y="420" width="2" height="2" opacity="0.35"/><rect x="557" y="650" width="2" height="2" opacity="0.21"/><rect x="680" y="45" width="2" height="1" opacity="0.31"/><rect x="804" y="31" width="3" height="2" opacity="0.26"/><rect x="528" y="613" width="1" height="2" opacity="0.36"/><rect x="156" y="523" width="2" height="1" opacity="0.16"/><rect x="756" y="667" width="2" height="1" opacity="0.28"/><rect x="478" y="227" width="2" height="2" opacity="0.32"/><rect x="178" y="738" width="3" height="2" opacity="0.34"/><rect x="102" y="475" width="3" height="2" opacity="0.28"/><rect x="571" y="348" width="2" height="1" opacity="0.40"/><rect x="121" y="586" width="1" height="1" opacity="0.18"/><rect x="180" y="245" width="1" height="2" opacity="0.35"/><rect x="517" y="187" width="3" height="2" opacity="0.30"/><rect x="744" y="501" width="1" height="1" opacity="0.29"/><rect x="690" y="667" width="2" height="2" opacity="0.13"/><rect x="169" y="725" width="2" height="1" opacity="0.31"/><rect x="205" y="438" width="3" height="1" opacity="0.39"/><rect x="520" y="308" width="2" height="2" opacity="0.16"/><rect x="500" y="437" width="2" height="2" opacity="0.42"/><rect x="75" y="673" width="2" height="1" opacity="0.26"/><rect x="29" y="286" width="1" height="1" opacity="0.28"/><rect x="735" y="120" width="2" height="2" opacity="0.25"/><rect x="361" y="494" width="2" height="1" opacity="0.16"/><rect x="276" y="293" width="1" height="2" opacity="0.38"/><rect x="190" y="383" width="2" height="2" opacity="0.14"/><rect x="19" y="377" width="1" height="1" opacity="0.39"/><rect x="643" y="543" width="2" height="1" opacity="0.11"/><rect x="212" y="520" width="2" height="2" opacity="0.22"/><rect x="604" y="405" width="2" height="1" opacity="0.37"/><rect x="556" y="18" width="2" height="1" opacity="0.19"/><rect x="644" y="49" width="2" height="1" opacity="0.29"/><rect x="51" y="263" width="2" height="2" opacity="0.35"/><rect x="593" y="686" width="2" height="1" opacity="0.12"/><rect x="678" y="308" width="2" height="2" opacity="0.41"/><rect x="402" y="540" width="2" height="2" opacity="0.11"/><rect x="652" y="461" width="2" height="2" opacity="0.40"/><rect x="153" y="323" width="2" height="2" opacity="0.27"/><rect x="532" y="100" width="2" height="1" opacity="0.15"/><rect x="30" y="459" width="2" height="1" opacity="0.22"/><rect x="580" y="379" width="2" height="2" opacity="0.15"/><rect x="162" y="373" width="2" height="1" opacity="0.37"/><rect x="788" y="573" width="1" height="2" opacity="0.32"/><rect x="666" y="558" width="2" height="1" opacity="0.29"/><rect x="639" y="304" width="3" height="2" opacity="0.41"/><rect x="764" y="73" width="2" height="2" opacity="0.40"/><rect x="9" y="582" width="2" height="2" opacity="0.39"/><rect x="103" y="401" width="1" height="2" opacity="0.42"/><rect x="33" y="533" width="1" height="2" opacity="0.41"/><rect x="124" y="520" width="3" height="2" opacity="0.28"/><rect x="286" y="442" width="2" height="2" opacity="0.21"/><rect x="558" y="243" width="3" height="1" opacity="0.28"/><rect x="287" y="603" width="1" height="2" opacity="0.35"/><rect x="756" y="429" width="1" height="1" opacity="0.18"/><rect x="189" y="71" width="2" height="2" opacity="0.30"/><rect x="457" y="254" width="2" height="1" opacity="0.12"/><rect x="602" y="222" width="3" height="2" opacity="0.14"/><rect x="332" y="252" width="2" height="1" opacity="0.21"/><rect x="430" y="25" width="1" height="1" opacity="0.40"/><rect x="333" y="246" width="2" height="2" opacity="0.12"/><rect x="296" y="645" width="2" height="1" opacity="0.41"/><rect x="123" y="120" width="3" height="2" opacity="0.22"/><rect x="226" y="488" width="2" height="1" opacity="0.34"/><rect x="597" y="168" width="2" height="2" opacity="0.26"/><rect x="781" y="323" width="2" height="2" opacity="0.39"/><rect x="740" y="251" width="2" height="1" opacity="0.27"/><rect x="211" y="193" width="2" height="1" opacity="0.41"/><rect x="683" y="591" width="2" height="1" opacity="0.15"/><rect x="665" y="591" width="2" height="1" opacity="0.36"/><rect x="653" y="370" width="2" height="2" opacity="0.21"/><rect x="168" y="590" width="1" height="1" opacity="0.33"/><rect x="545" y="571" width="3" height="2" opacity="0.31"/><rect x="17" y="647" width="2" height="2" opacity="0.13"/><rect x="635" y="427" width="1" height="2" opacity="0.21"/><rect x="670" y="346" width="2" height="2" opacity="0.41"/><rect x="170" y="653" width="1" height="1" opacity="0.25"/><rect x="657" y="592" width="1" height="2" opacity="0.34"/><rect x="615" y="578" width="3" height="2" opacity="0.16"/><rect x="269" y="759" width="3" height="2" opacity="0.31"/><rect x="590" y="223" width="2" height="2" opacity="0.40"/><rect x="11" y="302" width="3" height="2" opacity="0.42"/><rect x="720" y="307" width="1" height="1" opacity="0.36"/><rect x="42" y="106" width="3" height="2" opacity="0.27"/><rect x="181" y="459" width="2" height="2" opacity="0.24"/><rect x="747" y="123" width="2" height="2" opacity="0.17"/><rect x="727" y="240" width="1" height="2" opacity="0.11"/><rect x="614" y="464" width="2" height="2" opacity="0.33"/><rect x="729" y="778" width="2" height="2" opacity="0.27"/><rect x="436" y="174" width="2" height="1" opacity="0.13"/><rect x="620" y="290" width="2" height="2" opacity="0.32"/><rect x="803" y="712" width="2" height="2" opacity="0.29"/><rect x="233" y="322" width="2" height="2" opacity="0.22"/><rect x="436" y="466" width="1" height="2" opacity="0.20"/><rect x="129" y="405" width="2" height="2" opacity="0.29"/><rect x="265" y="341" width="1" height="2" opacity="0.26"/><rect x="104" y="360" width="3" height="2" opacity="0.18"/><rect x="273" y="489" width="3" height="2" opacity="0.38"/><rect x="343" y="47" width="2" height="2" opacity="0.31"/><rect x="719" y="522" width="3" height="1" opacity="0.35"/><rect x="677" y="747" width="3" height="2" opacity="0.28"/><rect x="91" y="614" width="2" height="2" opacity="0.34"/><rect x="438" y="380" width="1" height="2" opacity="0.32"/><rect x="338" y="497" width="2" height="1" opacity="0.32"/><rect x="84" y="264" width="3" height="2" opacity="0.17"/><rect x="433" y="83" width="1" height="2" opacity="0.40"/><rect x="680" y="731" width="2" height="2" opacity="0.36"/><rect x="119" y="487" width="2" height="2" opacity="0.38"/><rect x="20" y="549" width="2" height="2" opacity="0.37"/><rect x="687" y="99" width="3" height="1" opacity="0.28"/><rect x="39" y="652" width="3" height="2" opacity="0.22"/><rect x="304" y="124" width="2" height="1" opacity="0.35"/><rect x="92" y="107" width="2" height="2" opacity="0.32"/><rect x="688" y="127" width="2" height="1" opacity="0.27"/><rect x="263" y="197" width="2" height="2" opacity="0.20"/><rect x="206" y="573" width="2" height="2" opacity="0.35"/><rect x="573" y="276" width="3" height="2" opacity="0.27"/><rect x="404" y="774" width="2" height="2" opacity="0.23"/><rect x="646" y="615" width="1" height="2" opacity="0.27"/><rect x="571" y="20" width="2" height="2" opacity="0.41"/><rect x="431" y="491" width="3" height="2" opacity="0.36"/><rect x="738" y="740" width="2" height="2" opacity="0.33"/><rect x="332" y="678" width="3" height="2" opacity="0.23"/><rect x="29" y="123" width="1" height="2" opacity="0.17"/><rect x="699" y="604" width="2" height="2" opacity="0.30"/><rect x="359" y="368" width="2" height="2" opacity="0.42"/><rect x="664" y="716" width="2" height="2" opacity="0.11"/><rect x="106" y="484" width="2" height="2" opacity="0.14"/><rect x="756" y="709" width="2" height="1" opacity="0.42"/><rect x="710" y="525" width="1" height="2" opacity="0.25"/><rect x="263" y="76" width="1" height="2" opacity="0.31"/><rect x="290" y="338" width="2" height="1" opacity="0.20"/><rect x="234" y="757" width="2" height="2" opacity="0.41"/><rect x="542" y="694" width="1" height="2" opacity="0.33"/><rect x="427" y="537" width="3" height="2" opacity="0.37"/><rect x="262" y="498" width="3" height="2" opacity="0.29"/><rect x="630" y="584" width="2" height="1" opacity="0.14"/><rect x="709" y="320" width="1" height="2" opacity="0.19"/><rect x="776" y="434" width="2" height="1" opacity="0.16"/><rect x="318" y="769" width="1" height="1" opacity="0.32"/><rect x="136" y="480" width="2" height="2" opacity="0.41"/><rect x="793" y="37" width="2" height="1" opacity="0.34"/><rect x="195" y="682" width="2" height="1" opacity="0.35"/><rect x="732" y="320" width="2" height="2" opacity="0.34"/><rect x="487" y="260" width="3" height="2" opacity="0.23"/><rect x="785" y="112" width="3" height="2" opacity="0.23"/><rect x="16" y="481" width="2" height="2" opacity="0.39"/><rect x="385" y="29" width="2" height="2" opacity="0.36"/><rect x="43" y="190" width="2" height="1" opacity="0.41"/><rect x="576" y="403" width="1" height="2" opacity="0.34"/><rect x="469" y="415" width="2" height="2" opacity="0.20"/><rect x="781" y="133" width="2" height="1" opacity="0.22"/><rect x="291" y="213" width="2" height="1" opacity="0.28"/><rect x="232" y="125" width="2" height="1" opacity="0.34"/><rect x="126" y="97" width="3" height="2" opacity="0.13"/><rect x="287" y="69" width="2" height="2" opacity="0.12"/><rect x="327" y="684" width="2" height="1" opacity="0.11"/><rect x="484" y="748" width="2" height="2" opacity="0.20"/><rect x="632" y="328" width="1" height="2" opacity="0.39"/><rect x="756" y="721" width="2" height="2" opacity="0.37"/><rect x="218" y="400" width="1" height="1" opacity="0.26"/><rect x="143" y="771" width="1" height="1" opacity="0.37"/><rect x="522" y="425" width="2" height="2" opacity="0.13"/><rect x="603" y="45" width="1" height="2" opacity="0.13"/><rect x="40" y="375" width="2" height="1" opacity="0.20"/><rect x="222" y="426" width="3" height="1" opacity="0.38"/><rect x="133" y="338" width="2" height="2" opacity="0.10"/><rect x="206" y="123" width="2" height="1" opacity="0.41"/><rect x="306" y="316" width="3" height="2" opacity="0.39"/><rect x="43" y="505" width="1" height="1" opacity="0.21"/><rect x="560" y="195" width="2" height="2" opacity="0.31"/><rect x="238" y="692" width="2" height="1" opacity="0.38"/><rect x="596" y="651" width="2" height="1" opacity="0.41"/><rect x="416" y="361" width="1" height="1" opacity="0.39"/><rect x="788" y="346" width="3" height="2" opacity="0.14"/><rect x="110" y="116" width="2" height="1" opacity="0.24"/><rect x="768" y="744" width="1" height="2" opacity="0.27"/><rect x="593" y="407" width="3" height="2" opacity="0.40"/><rect x="40" y="494" width="1" height="2" opacity="0.37"/><rect x="356" y="231" width="1" height="2" opacity="0.29"/><rect x="147" y="213" width="2" height="1" opacity="0.31"/><rect x="505" y="352" width="2" height="2" opacity="0.18"/><rect x="589" y="343" width="2" height="2" opacity="0.12"/><rect x="286" y="448" width="1" height="2" opacity="0.35"/><rect x="489" y="41" width="2" height="2" opacity="0.22"/><rect x="184" y="683" width="2" height="2" opacity="0.11"/><rect x="353" y="215" width="1" height="2" opacity="0.34"/><rect x="496" y="631" width="3" height="2" opacity="0.28"/><rect x="225" y="764" width="2" height="1" opacity="0.26"/><rect x="391" y="283" width="3" height="2" opacity="0.38"/><rect x="798" y="200" width="2" height="2" opacity="0.18"/><rect x="338" y="17" width="3" height="2" opacity="0.17"/><rect x="759" y="539" width="2" height="2" opacity="0.38"/><rect x="640" y="355" width="2" height="2" opacity="0.25"/><rect x="526" y="375" width="2" height="2" opacity="0.13"/><rect x="687" y="285" width="2" height="2" opacity="0.31"/><rect x="513" y="258" width="3" height="2" opacity="0.10"/><rect x="299" y="532" width="3" height="2" opacity="0.11"/><rect x="475" y="441" width="3" height="1" opacity="0.30"/><rect x="194" y="469" width="2" height="1" opacity="0.38"/><rect x="568" y="225" width="1" height="2" opacity="0.22"/><rect x="582" y="750" width="2" height="1" opacity="0.22"/><rect x="185" y="663" width="2" height="1" opacity="0.29"/><rect x="596" y="581" width="3" height="2" opacity="0.28"/><rect x="549" y="482" width="2" height="1" opacity="0.19"/><rect x="650" y="269" width="2" height="2" opacity="0.21"/><rect x="671" y="287" width="1" height="2" opacity="0.29"/><rect x="552" y="584" width="1" height="1" opacity="0.38"/><rect x="572" y="621" width="1" height="2" opacity="0.21"/><rect x="72" y="349" width="1" height="1" opacity="0.11"/><rect x="597" y="707" width="2" height="1" opacity="0.14"/><rect x="136" y="351" width="2" height="2" opacity="0.37"/><rect x="385" y="326" width="1" height="2" opacity="0.36"/><rect x="436" y="96" width="2" height="1" opacity="0.35"/><rect x="72" y="681" width="3" height="2" opacity="0.18"/><rect x="18" y="173" width="2" height="1" opacity="0.21"/><rect x="4" y="464" width="1" height="2" opacity="0.31"/><rect x="265" y="570" width="2" height="2" opacity="0.25"/><rect x="544" y="140" width="3" height="2" opacity="0.28"/><rect x="624" y="769" width="2" height="2" opacity="0.33"/><rect x="81" y="359" width="3" height="2" opacity="0.11"/><rect x="718" y="157" width="2" height="2" opacity="0.13"/><rect x="314" y="398" width="3" height="1" opacity="0.18"/><rect x="675" y="463" width="2" height="1" opacity="0.31"/><rect x="138" y="639" width="2" height="1" opacity="0.28"/><rect x="732" y="414" width="3" height="2" opacity="0.17"/><rect x="570" y="529" width="3" height="2" opacity="0.11"/><rect x="356" y="564" width="2" height="2" opacity="0.18"/><rect x="33" y="769" width="1" height="1" opacity="0.16"/><rect x="74" y="666" width="3" height="1" opacity="0.13"/><rect x="597" y="251" width="2" height="1" opacity="0.17"/><rect x="359" y="618" width="2" height="2" opacity="0.39"/><rect x="478" y="291" width="2" height="2" opacity="0.39"/><rect x="713" y="52" width="2" height="1" opacity="0.13"/><rect x="432" y="90" width="3" height="2" opacity="0.35"/><rect x="61" y="777" width="2" height="1" opacity="0.21"/><rect x="293" y="301" width="2" height="1" opacity="0.39"/><rect x="501" y="767" width="1" height="1" opacity="0.30"/><rect x="660" y="16" width="3" height="2" opacity="0.18"/><rect x="134" y="530" width="2" height="1" opacity="0.29"/><rect x="262" y="124" width="2" height="2" opacity="0.38"/><rect x="129" y="77" width="3" height="1" opacity="0.16"/><rect x="303" y="698" width="2" height="2" opacity="0.14"/><rect x="715" y="706" width="2" height="2" opacity="0.25"/><rect x="424" y="289" width="2" height="2" opacity="0.21"/><rect x="617" y="249" width="1" height="1" opacity="0.39"/><rect x="630" y="712" width="1" height="2" opacity="0.41"/><rect x="494" y="522" width="1" height="2" opacity="0.14"/><rect x="409" y="341" width="3" height="2" opacity="0.23"/><rect x="299" y="195" width="1" height="2" opacity="0.22"/><rect x="636" y="518" width="2" height="2" opacity="0.20"/><rect x="715" y="97" width="1" height="2" opacity="0.41"/><rect x="797" y="529" width="2" height="2" opacity="0.14"/><rect x="775" y="35" width="3" height="2" opacity="0.33"/><rect x="201" y="476" width="2" height="2" opacity="0.14"/><rect x="74" y="446" width="3" height="2" opacity="0.24"/><rect x="761" y="296" width="2" height="1" opacity="0.40"/><rect x="702" y="507" width="2" height="2" opacity="0.29"/><rect x="565" y="314" width="2" height="2" opacity="0.33"/><rect x="594" y="73" width="2" height="2" opacity="0.28"/><rect x="344" y="407" width="1" height="1" opacity="0.36"/><rect x="394" y="726" width="2" height="2" opacity="0.42"/><rect x="426" y="607" width="3" height="1" opacity="0.33"/><rect x="473" y="353" width="2" height="2" opacity="0.14"/><rect x="706" y="615" width="2" height="2" opacity="0.10"/><rect x="17" y="761" width="3" height="1" opacity="0.30"/><rect x="775" y="38" width="3" height="2" opacity="0.37"/><rect x="684" y="85" width="3" height="2" opacity="0.14"/><rect x="611" y="271" width="1" height="2" opacity="0.30"/><rect x="299" y="340" width="2" height="2" opacity="0.13"/><rect x="496" y="167" width="2" height="2" opacity="0.17"/><rect x="445" y="733" width="1" height="2" opacity="0.14"/><rect x="13" y="119" width="1" height="2" opacity="0.37"/><rect x="70" y="678" width="3" height="1" opacity="0.22"/><rect x="467" y="745" width="3" height="2" opacity="0.37"/><rect x="794" y="269" width="2" height="2" opacity="0.39"/><rect x="334" y="61" width="2" height="2" opacity="0.33"/><rect x="173" y="441" width="1" height="1" opacity="0.24"/><rect x="540" y="62" width="3" height="1" opacity="0.36"/><rect x="184" y="669" width="3" height="2" opacity="0.12"/><rect x="97" y="266" width="2" height="1" opacity="0.27"/><rect x="122" y="220" width="1" height="1" opacity="0.19"/><rect x="659" y="513" width="1" height="1" opacity="0.19"/><rect x="349" y="261" width="2" height="2" opacity="0.33"/><rect x="539" y="232" width="3" height="2" opacity="0.37"/><rect x="395" y="190" width="2" height="2" opacity="0.30"/><rect x="301" y="88" width="1" height="1" opacity="0.15"/><rect x="257" y="411" width="2" height="2" opacity="0.27"/><rect x="303" y="636" width="2" height="2" opacity="0.34"/><rect x="554" y="258" width="2" height="2" opacity="0.16"/><rect x="591" y="133" width="3" height="2" opacity="0.38"/><rect x="737" y="471" width="2" height="2" opacity="0.34"/><rect x="437" y="188" width="3" height="2" opacity="0.11"/><rect x="332" y="365" width="2" height="2" opacity="0.28"/><rect x="597" y="362" width="1" height="2" opacity="0.10"/><rect x="214" y="84" width="1" height="2" opacity="0.14"/><rect x="77" y="728" width="3" height="2" opacity="0.18"/><rect x="63" y="750" width="1" height="1" opacity="0.33"/><rect x="380" y="127" width="3" height="2" opacity="0.27"/><rect x="281" y="692" width="2" height="2" opacity="0.13"/><rect x="775" y="751" width="2" height="2" opacity="0.15"/><rect x="325" y="182" width="3" height="2" opacity="0.31"/><rect x="360" y="441" width="2" height="1" opacity="0.32"/><rect x="331" y="219" width="3" height="2" opacity="0.16"/><rect x="119" y="151" width="2" height="2" opacity="0.30"/><rect x="514" y="383" width="3" height="1" opacity="0.32"/><rect x="222" y="318" width="2" height="2" opacity="0.18"/><rect x="808" y="227" width="2" height="1" opacity="0.36"/><rect x="53" y="478" width="1" height="2" opacity="0.33"/><rect x="722" y="772" width="2" height="2" opacity="0.10"/><rect x="685" y="345" width="3" height="2" opacity="0.33"/><rect x="322" y="264" width="2" height="2" opacity="0.16"/><rect x="344" y="360" width="2" height="2" opacity="0.37"/><rect x="470" y="213" width="2" height="2" opacity="0.29"/><rect x="189" y="138" width="2" height="2" opacity="0.27"/><rect x="804" y="259" width="2" height="1" opacity="0.26"/><rect x="98" y="404" width="3" height="2" opacity="0.22"/><rect x="20" y="451" width="2" height="2" opacity="0.19"/><rect x="65" y="608" width="2" height="2" opacity="0.10"/><rect x="584" y="377" width="3" height="1" opacity="0.15"/><rect x="155" y="293" width="2" height="1" opacity="0.13"/><rect x="442" y="400" width="1" height="2" opacity="0.20"/><rect x="453" y="296" width="3" height="2" opacity="0.21"/><rect x="138" y="760" width="3" height="2" opacity="0.20"/><rect x="731" y="526" width="3" height="2" opacity="0.29"/><rect x="769" y="75" width="1" height="2" opacity="0.13"/><rect x="596" y="742" width="2" height="1" opacity="0.28"/><rect x="84" y="623" width="2" height="2" opacity="0.37"/><rect x="466" y="49" width="2" height="1" opacity="0.20"/><rect x="765" y="233" width="2" height="2" opacity="0.38"/><rect x="544" y="126" width="2" height="2" opacity="0.36"/><rect x="698" y="630" width="1" height="2" opacity="0.28"/><rect x="640" y="568" width="1" height="2" opacity="0.39"/><rect x="304" y="736" width="3" height="2" opacity="0.36"/><rect x="489" y="380" width="1" height="2" opacity="0.29"/><rect x="30" y="251" width="2" height="1" opacity="0.38"/><rect x="782" y="470" width="2" height="1" opacity="0.32"/><rect x="44" y="320" width="2" height="2" opacity="0.15"/><rect x="586" y="561" width="3" height="2" opacity="0.13"/><rect x="92" y="717" width="3" height="1" opacity="0.30"/><rect x="789" y="466" width="1" height="2" opacity="0.16"/><rect x="631" y="632" width="1" height="1" opacity="0.29"/><rect x="416" y="410" width="1" height="1" opacity="0.16"/><rect x="326" y="391" width="2" height="1" opacity="0.26"/><rect x="285" y="627" width="1" height="2" opacity="0.12"/><rect x="567" y="555" width="2" height="2" opacity="0.14"/><rect x="11" y="445" width="3" height="2" opacity="0.36"/><rect x="197" y="510" width="2" height="2" opacity="0.32"/><rect x="489" y="571" width="2" height="2" opacity="0.39"/><rect x="508" y="667" width="2" height="1" opacity="0.28"/><rect x="350" y="763" width="2" height="2" opacity="0.11"/><rect x="682" y="154" width="3" height="2" opacity="0.14"/><rect x="516" y="121" width="3" height="2" opacity="0.28"/><rect x="88" y="527" width="2" height="2" opacity="0.38"/><rect x="526" y="761" width="3" height="2" opacity="0.29"/><rect x="757" y="599" width="2" height="2" opacity="0.10"/><rect x="361" y="641" width="2" height="2" opacity="0.12"/><rect x="785" y="589" width="1" height="2" opacity="0.24"/><rect x="771" y="240" width="2" height="2" opacity="0.14"/><rect x="597" y="269" width="3" height="2" opacity="0.28"/><rect x="777" y="431" width="3" height="1" opacity="0.18"/><rect x="777" y="36" width="2" height="1" opacity="0.31"/><rect x="576" y="643" width="2" height="2" opacity="0.25"/><rect x="295" y="757" width="2" height="2" opacity="0.18"/><rect x="661" y="617" width="1" height="2" opacity="0.20"/><rect x="143" y="90" width="2" height="1" opacity="0.13"/><rect x="480" y="565" width="2" height="1" opacity="0.13"/><rect x="720" y="640" width="1" height="1" opacity="0.12"/><rect x="239" y="68" width="2" height="1" opacity="0.11"/><rect x="123" y="405" width="3" height="1" opacity="0.42"/><rect x="540" y="702" width="2" height="2" opacity="0.28"/><rect x="265" y="139" width="3" height="2" opacity="0.36"/><rect x="782" y="225" width="1" height="1" opacity="0.31"/><rect x="425" y="327" width="1" height="2" opacity="0.17"/><rect x="4" y="408" width="2" height="1" opacity="0.25"/><rect x="242" y="744" width="2" height="1" opacity="0.38"/><rect x="25" y="780" width="1" height="2" opacity="0.32"/><rect x="601" y="184" width="2" height="2" opacity="0.36"/><rect x="503" y="165" width="2" height="1" opacity="0.40"/><rect x="620" y="616" width="3" height="2" opacity="0.15"/><rect x="646" y="606" width="1" height="1" opacity="0.31"/><rect x="654" y="731" width="3" height="2" opacity="0.29"/><rect x="280" y="57" width="3" height="2" opacity="0.26"/></g><rect x="2" y="190.5" width="5" height="2" fill="#5a28b0" opacity="0.80"/><rect x="16" y="190.5" width="4" height="2" fill="#2020a0" opacity="0.60"/><rect x="25" y="190.5" width="11" height="2" fill="#1a1a90" opacity="0.40"/><rect x="41" y="190.5" width="15" height="2" fill="#3a20a8" opacity="0.70"/><rect x="56" y="190.5" width="23" height="2" fill="#6030b0" opacity="0.85"/><rect x="82" y="190.5" width="10" height="2" fill="#2424a8" opacity="0.60"/><rect x="98" y="190.5" width="21" height="2" fill="#3020a8" opacity="0.60"/><rect x="120" y="190.5" width="21" height="2" fill="#1c1c90" opacity="0.50"/><rect x="152" y="190.5" width="37" height="2" fill="#2020a0" opacity="0.55"/><rect x="204" y="190.5" width="34" height="2" fill="#16168a" opacity="0.35"/><rect x="265" y="190.5" width="27" height="2" fill="#16168a" opacity="0.35"/><rect x="322" y="191" width="2" height="1" fill="#18168a" opacity="0.35"/><rect x="327" y="191" width="6" height="2" fill="#18168a" opacity="0.42"/><rect x="339" y="191" width="8" height="2" fill="#18168a" opacity="0.27"/><rect x="354" y="191" width="8" height="2" fill="#18168a" opacity="0.32"/><rect x="394" y="191" width="8" height="2" fill="#18168a" opacity="0.42"/><rect x="406" y="191" width="5" height="2" fill="#18168a" opacity="0.28"/><rect x="416" y="191" width="3" height="1" fill="#18168a" opacity="0.20"/><rect x="439" y="191" width="2" height="2" fill="#18168a" opacity="0.20"/><rect x="452" y="191" width="4" height="2" fill="#18168a" opacity="0.26"/><rect x="462" y="191" width="3" height="2" fill="#18168a" opacity="0.30"/><rect x="472" y="191" width="8" height="2" fill="#18168a" opacity="0.37"/><rect x="488" y="187" width="7" height="1" fill="#1c1aa0" opacity="0.35"/><rect x="507" y="189" width="4" height="1" fill="#1c1aa0" opacity="0.29"/><rect x="515" y="188" width="7" height="2" fill="#1c1aa0" opacity="0.41"/><rect x="530" y="188" width="5" height="2" fill="#1c1aa0" opacity="0.26"/><rect x="536" y="188" width="4" height="2" fill="#1c1aa0" opacity="0.39"/><rect x="545" y="188" width="3" height="1" fill="#1c1aa0" opacity="0.22"/><rect x="554" y="189" width="5" height="2" fill="#1c1aa0" opacity="0.15"/><rect x="565" y="187" width="2" height="1" fill="#1c1aa0" opacity="0.32"/><rect x="570" y="187" width="2" height="2" fill="#1c1aa0" opacity="0.20"/><rect x="584" y="188" width="3" height="2" fill="#1c1aa0" opacity="0.24"/><rect x="593" y="187" width="6" height="2" fill="#1c1aa0" opacity="0.28"/><rect x="601" y="188" width="5" height="2" fill="#1c1aa0" opacity="0.19"/><rect x="614" y="188" width="7" height="2" fill="#1c1aa0" opacity="0.31"/><rect x="631" y="187" width="7" height="2" fill="#1c1aa0" opacity="0.26"/><rect x="639" y="189" width="4" height="2" fill="#1c1aa0" opacity="0.25"/><rect x="646" y="188" width="5" height="1" fill="#1c1aa0" opacity="0.39"/><rect x="653" y="188" width="4" height="2" fill="#1c1aa0" opacity="0.34"/><rect x="663" y="188" width="6" height="2" fill="#1c1aa0" opacity="0.21"/><rect x="685" y="188" width="3" height="1" fill="#1c1aa0" opacity="0.34"/><rect x="689" y="189" width="4" height="2" fill="#1c1aa0" opacity="0.20"/><rect x="702" y="188" width="2" height="1" fill="#1c1aa0" opacity="0.20"/><rect x="710" y="188" width="3" height="2" fill="#1c1aa0" opacity="0.37"/><rect x="724" y="189" width="7" height="2" fill="#1c1aa0" opacity="0.35"/><rect x="735" y="189" width="6" height="2" fill="#1c1aa0" opacity="0.40"/><rect x="742" y="188" width="4" height="1" fill="#1c1aa0" opacity="0.20"/><rect x="766" y="188" width="5" height="1" fill="#1c1aa0" opacity="0.20"/><rect x="775" y="188" width="7" height="2" fill="#1c1aa0" opacity="0.22"/><rect x="783" y="189" width="5" height="2" fill="#1c1aa0" opacity="0.33"/><rect x="790" y="189" width="5" height="1" fill="#1c1aa0" opacity="0.38"/><rect x="796" y="188" width="6" height="2" fill="#1c1aa0" opacity="0.28"/><rect x="807" y="189" width="3" height="1" fill="#1c1aa0" opacity="0.38"/><rect x="811" y="188" width="7" height="2" fill="#1c1aa0" opacity="0.42"/><rect x="488" y="198" width="5" height="1" fill="#1c1aa0" opacity="0.37"/><rect x="496" y="197" width="5" height="2" fill="#1c1aa0" opacity="0.32"/><rect x="506" y="197" width="7" height="2" fill="#1c1aa0" opacity="0.16"/><rect x="516" y="197" width="3" height="1" fill="#1c1aa0" opacity="0.32"/><rect x="524" y="196" width="7" height="1" fill="#1c1aa0" opacity="0.17"/><rect x="533" y="197" width="3" height="1" fill="#1c1aa0" opacity="0.23"/><rect x="542" y="197" width="5" height="1" fill="#1c1aa0" opacity="0.38"/><rect x="552" y="196" width="3" height="1" fill="#1c1aa0" opacity="0.40"/><rect x="560" y="196" width="2" height="2" fill="#1c1aa0" opacity="0.37"/><rect x="566" y="197" width="2" height="1" fill="#1c1aa0" opacity="0.23"/><rect x="580" y="196" width="3" height="1" fill="#1c1aa0" opacity="0.35"/><rect x="597" y="196" width="2" height="2" fill="#1c1aa0" opacity="0.22"/><rect x="604" y="198" width="7" height="1" fill="#1c1aa0" opacity="0.25"/><rect x="624" y="196" width="3" height="1" fill="#1c1aa0" opacity="0.20"/><rect x="643" y="197" width="3" height="1" fill="#1c1aa0" opacity="0.22"/><rect x="652" y="197" width="5" height="1" fill="#1c1aa0" opacity="0.20"/><rect x="662" y="196" width="2" height="1" fill="#1c1aa0" opacity="0.40"/><rect x="679" y="198" width="2" height="2" fill="#1c1aa0" opacity="0.29"/><rect x="691" y="197" width="7" height="2" fill="#1c1aa0" opacity="0.29"/><rect x="702" y="197" width="3" height="1" fill="#1c1aa0" opacity="0.22"/><rect x="706" y="197" width="3" height="2" fill="#1c1aa0" opacity="0.15"/><rect x="715" y="197" width="7" height="2" fill="#1c1aa0" opacity="0.17"/><rect x="727" y="196" width="7" height="1" fill="#1c1aa0" opacity="0.38"/><rect x="738" y="197" width="5" height="1" fill="#1c1aa0" opacity="0.34"/><rect x="746" y="197" width="3" height="1" fill="#1c1aa0" opacity="0.18"/><rect x="754" y="197" width="7" height="2" fill="#1c1aa0" opacity="0.39"/><rect x="765" y="197" width="5" height="1" fill="#1c1aa0" opacity="0.24"/><rect x="775" y="197" width="6" height="2" fill="#1c1aa0" opacity="0.42"/><rect x="783" y="197" width="2" height="2" fill="#1c1aa0" opacity="0.24"/><rect x="790" y="197" width="2" height="1" fill="#1c1aa0" opacity="0.30"/><rect x="798" y="197" width="5" height="2" fill="#1c1aa0" opacity="0.22"/><rect x="628" y="183" width="5" height="4" fill="#3030c0" opacity="0.5"/>
 <g opacity="0.55"><rect x="291" y="113" width="2" height="2" fill="#2424c8" opacity="0.44"/><rect x="291" y="115" width="2" height="1" fill="#2424c8" opacity="0.82"/><rect x="291" y="119" width="2" height="2" fill="#2424c8" opacity="0.52"/><rect x="291" y="121" width="2" height="3" fill="#2424c8" opacity="0.95"/><rect x="292" y="128" width="2" height="1" fill="#2424c8" opacity="0.42"/><rect x="292" y="132" width="2" height="1" fill="#2424c8" opacity="0.56"/><rect x="293" y="136" width="2" height="2" fill="#2424c8" opacity="0.68"/><rect x="293" y="139" width="2" height="1" fill="#2424c8" opacity="0.69"/><rect x="294" y="145" width="2" height="2" fill="#2424c8" opacity="0.78"/><rect x="294" y="150" width="2" height="1" fill="#2424c8" opacity="0.96"/><rect x="295" y="153" width="2" height="1" fill="#2424c8" opacity="0.64"/><rect x="295" y="160" width="2" height="3" fill="#2424c8" opacity="0.63"/><rect x="296" y="163" width="2" height="3" fill="#2424c8" opacity="0.45"/><rect x="297" y="171" width="2" height="2" fill="#2424c8" opacity="0.62"/><rect x="297" y="173" width="2" height="1" fill="#2424c8" opacity="0.54"/><rect x="297" y="178" width="2" height="1" fill="#2424c8" opacity="0.53"/><rect x="298" y="181" width="2" height="2" fill="#2424c8" opacity="0.45"/><rect x="298" y="183" width="2" height="2" fill="#2424c8" opacity="0.94"/><rect x="298" y="187" width="2" height="3" fill="#2424c8" opacity="0.67"/><rect x="299" y="192" width="2" height="1" fill="#2424c8" opacity="0.74"/><rect x="299" y="195" width="2" height="2" fill="#2424c8" opacity="0.48"/><rect x="300" y="200" width="2" height="3" fill="#2424c8" opacity="0.88"/><rect x="300" y="205" width="2" height="2" fill="#2424c8" opacity="0.59"/><rect x="300" y="207" width="2" height="3" fill="#2424c8" opacity="0.67"/><rect x="301" y="215" width="2" height="2" fill="#2424c8" opacity="0.95"/><rect x="301" y="218" width="2" height="3" fill="#2424c8" opacity="0.93"/><rect x="302" y="220" width="2" height="3" fill="#2424c8" opacity="0.67"/><rect x="302" y="226" width="2" height="3" fill="#2424c8" opacity="0.98"/><rect x="303" y="230" width="2" height="3" fill="#2424c8" opacity="0.53"/><rect x="303" y="235" width="2" height="1" fill="#2424c8" opacity="0.72"/>
 <rect x="432" y="183" width="3" height="17" fill="#2a28c0" opacity="0.9"/>
 <rect x="546" y="183" width="3" height="11" fill="#1a18a0" opacity="0.7"/>
 <rect x="756" y="186" width="3" height="13" fill="#6030b8" opacity="0.85"/></g>
 <g filter="url(#bl)">
 <path d="M473.3,7 L475.8,20 L476.9,40 L477.6,100 L478.4,160 L478.3,205 L476.2,214 L472.4,214 L470.2,205 L470,160 L470.2,100 L470.5,40 L471,20 Z" fill="#3a1070" opacity="0.7"/>
 <path d="M473.3,8 L474.8,20 L475.9,40 L476.6,100 L477.4,160 L477.3,205 L475.6,213 L473,213 L471.2,205 L471,160 L471.2,100 L471.5,40 L472,20 Z" fill="url(#st)"/>
 <path d="M472.3,140 L476.2,140 L476.4,205 L474.3,211 L472.2,205 Z" fill="url(#core)"/>
 <rect x="472" y="213" width="5" height="95" fill="url(#st2)" opacity="0.75"/>
 <rect x="472.5" y="337" width="4" height="56" fill="#1a14a0" opacity="0.38"/>
 <rect x="472.5" y="355" width="4" height="22" fill="#1a14a0" opacity="0.25"/>
 <rect x="472.5" y="300" width="4" height="8" fill="#1a14a0" opacity="0.3"/>
 <rect x="472.5" y="470" width="4" height="15" fill="#1a14a0" opacity="0.32"/>
 <circle cx="479" cy="186.5" r="1.6" fill="#e07020"/>
 <rect x="12" y="172" width="4" height="27" fill="#1c18a0" opacity="0.5"/>
 <rect x="12" y="182" width="4" height="4" fill="#7020a0" opacity="0.8"/>
 <ellipse cx="14.3" cy="188" rx="2.3" ry="2" fill="#ffa060"/>
 </g>
</svg>
<div style="position:absolute;left:1px;top:1px;width:316px;height:50px;background:#000"></div>
<div style="position:absolute;left:1px;top:1px;width:106px;height:94px;background:#000"></div>
<div class="box"></div>
<div class="mono" style="top:5px">Screen Capture Time: 2O25-12-14 19:24:12 UTC</div>
<div class="mono" style="top:19px">143O48O17 Hz</div>
<div class="mono" style="top:33px">Config = V8</div>
<div class="cbg"></div>
<div class="cbw"></div>
<svg class="a" width="110" height="100"><g fill="#000"><rect x="8" y="69" width="1" height="4"/><rect x="12" y="69" width="1" height="4"/><rect x="17" y="69" width="1" height="4"/><rect x="21" y="69" width="1" height="4"/><rect x="26" y="69" width="1" height="7"/><rect x="30" y="69" width="1" height="4"/><rect x="35" y="69" width="1" height="4"/><rect x="39" y="69" width="1" height="4"/><rect x="44" y="69" width="1" height="4"/><rect x="48" y="69" width="1" height="10"/><rect x="52" y="69" width="1" height="4"/><rect x="57" y="69" width="1" height="4"/><rect x="61" y="69" width="1" height="4"/><rect x="66" y="69" width="1" height="4"/><rect x="70" y="69" width="1" height="7"/><rect x="75" y="69" width="1" height="4"/><rect x="79" y="69" width="1" height="4"/><rect x="84" y="69" width="1" height="4"/><rect x="88" y="69" width="1" height="4"/><rect x="92" y="69" width="1" height="10"/><rect x="97" y="69" width="1" height="4"/><rect x="101" y="69" width="1" height="4"/><rect x="5" y="68" width="99" height="1" fill="#383838"/></g></svg>
<div class="cbl" style="left:4px;letter-spacing:0.22px">-80 dB -60</div>
<div class="cbl" style="left:84px">-40</div>
<div style="position:absolute;left:818px;top:0;width:42px;height:783px;background:#fff"></div>
<div style="position:absolute;left:860px;top:1px;width:80px;height:781px;background:#505050"></div>
<svg class="a" width="941" height="783">
<g fill="#000"><rect x="818" y="2" width="11" height="1"/><rect x="818" y="9" width="8" height="1"/><rect x="818" y="17" width="8" height="1"/><rect x="818" y="25" width="8" height="1"/><rect x="818" y="33" width="8" height="1"/><rect x="818" y="41" width="8" height="1"/><rect x="818" y="49" width="8" height="1"/><rect x="818" y="56" width="8" height="1"/><rect x="818" y="64" width="8" height="1"/><rect x="818" y="72" width="8" height="1"/><rect x="818" y="80" width="26" height="1"/><rect x="818" y="88" width="8" height="1"/><rect x="818" y="95" width="8" height="1"/><rect x="818" y="103" width="8" height="1"/><rect x="818" y="111" width="8" height="1"/><rect x="818" y="119" width="8" height="1"/><rect x="818" y="127" width="8" height="1"/><rect x="818" y="134" width="8" height="1"/><rect x="818" y="142" width="8" height="1"/><rect x="818" y="150" width="8" height="1"/><rect x="818" y="158" width="11" height="1"/><rect x="818" y="166" width="8" height="1"/><rect x="818" y="174" width="8" height="1"/><rect x="818" y="181" width="8" height="1"/><rect x="818" y="189" width="8" height="1"/><rect x="818" y="197" width="8" height="1"/><rect x="818" y="205" width="8" height="1"/><rect x="818" y="213" width="8" height="1"/><rect x="818" y="220" width="8" height="1"/><rect x="818" y="228" width="8" height="1"/><rect x="818" y="236" width="26" height="1"/><rect x="818" y="244" width="8" height="1"/><rect x="818" y="252" width="8" height="1"/><rect x="818" y="259" width="8" height="1"/><rect x="818" y="267" width="8" height="1"/><rect x="818" y="275" width="8" height="1"/><rect x="818" y="283" width="8" height="1"/><rect x="818" y="291" width="8" height="1"/><rect x="818" y="299" width="8" height="1"/><rect x="818" y="306" width="8" height="1"/><rect x="818" y="314" width="11" height="1"/><rect x="818" y="322" width="8" height="1"/><rect x="818" y="330" width="8" height="1"/><rect x="818" y="338" width="8" height="1"/><rect x="818" y="345" width="8" height="1"/><rect x="818" y="353" width="8" height="1"/><rect x="818" y="361" width="8" height="1"/><rect x="818" y="369" width="8" height="1"/><rect x="818" y="377" width="8" height="1"/><rect x="818" y="384" width="8" height="1"/><rect x="818" y="392" width="26" height="1"/><rect x="818" y="400" width="8" height="1"/><rect x="818" y="408" width="8" height="1"/><rect x="818" y="416" width="8" height="1"/><rect x="818" y="424" width="8" height="1"/><rect x="818" y="431" width="8" height="1"/><rect x="818" y="439" width="8" height="1"/><rect x="818" y="447" width="8" height="1"/><rect x="818" y="455" width="8" height="1"/><rect x="818" y="463" width="8" height="1"/><rect x="818" y="470" width="11" height="1"/><rect x="818" y="478" width="8" height="1"/><rect x="818" y="486" width="8" height="1"/><rect x="818" y="494" width="8" height="1"/><rect x="818" y="502" width="8" height="1"/><rect x="818" y="509" width="8" height="1"/><rect x="818" y="517" width="8" height="1"/><rect x="818" y="525" width="8" height="1"/><rect x="818" y="533" width="8" height="1"/><rect x="818" y="541" width="8" height="1"/><rect x="818" y="549" width="26" height="1"/><rect x="818" y="556" width="8" height="1"/><rect x="818" y="564" width="8" height="1"/><rect x="818" y="572" width="8" height="1"/><rect x="818" y="580" width="8" height="1"/><rect x="818" y="588" width="8" height="1"/><rect x="818" y="595" width="8" height="1"/><rect x="818" y="603" width="8" height="1"/><rect x="818" y="611" width="8" height="1"/><rect x="818" y="619" width="8" height="1"/><rect x="818" y="627" width="11" height="1"/><rect x="818" y="634" width="8" height="1"/><rect x="818" y="642" width="8" height="1"/><rect x="818" y="650" width="8" height="1"/><rect x="818" y="658" width="8" height="1"/><rect x="818" y="666" width="8" height="1"/><rect x="818" y="674" width="8" height="1"/><rect x="818" y="681" width="8" height="1"/><rect x="818" y="689" width="8" height="1"/><rect x="818" y="697" width="8" height="1"/><rect x="818" y="705" width="26" height="1"/><rect x="818" y="713" width="8" height="1"/><rect x="818" y="720" width="8" height="1"/><rect x="818" y="728" width="8" height="1"/><rect x="818" y="736" width="8" height="1"/><rect x="818" y="744" width="8" height="1"/><rect x="818" y="752" width="8" height="1"/><rect x="818" y="759" width="8" height="1"/><rect x="818" y="767" width="8" height="1"/><rect x="818" y="775" width="8" height="1"/></g>
<rect x="839" y="10" width="1" height="760" fill="#14148c"/>
<polyline points="823,5.5 839.5,13.5" fill="none" stroke="#14148c" stroke-width="1.1"/>
<polyline points="839.5,769.5 822,779" fill="none" stroke="#14148c" stroke-width="1.1"/>
<rect x="860" y="1" width="80" height="1" fill="#000"/>
<rect x="860" y="2" width="80" height="1" fill="#8a8a8a"/>
<rect x="860" y="3" width="80" height="6" fill="#000"/>
<rect x="860" y="774" width="80" height="8" fill="#000"/>
<rect x="939" y="9" width="1" height="765" fill="#484848"/>
<rect x="860" y="23" width="6" height="1" fill="#000"/><rect x="860" y="24" width="6" height="1" fill="#000"/><rect x="860" y="25" width="7" height="1" fill="#000"/><rect x="860" y="26" width="12" height="1" fill="#000"/><rect x="860" y="27" width="6" height="1" fill="#000"/><rect x="860" y="28" width="4" height="1" fill="#000"/><rect x="860" y="29" width="6" height="1" fill="#000"/><rect x="860" y="30" width="12" height="1" fill="#000"/><rect x="860" y="31" width="7" height="1" fill="#000"/><rect x="860" y="32" width="7" height="1" fill="#000"/><rect x="860" y="33" width="16" height="1" fill="#000"/><rect x="860" y="34" width="8" height="1" fill="#000"/><rect x="860" y="35" width="7" height="1" fill="#000"/><rect x="860" y="36" width="8" height="1" fill="#000"/><rect x="860" y="37" width="6" height="1" fill="#000"/><rect x="860" y="38" width="5" height="1" fill="#000"/><rect x="860" y="39" width="9" height="1" fill="#000"/><rect x="860" y="40" width="5" height="1" fill="#000"/><rect x="860" y="41" width="5" height="1" fill="#000"/><rect x="860" y="42" width="6" height="1" fill="#000"/><rect x="860" y="43" width="7" height="1" fill="#000"/><rect x="860" y="44" width="4" height="1" fill="#000"/><rect x="860" y="45" width="3" height="1" fill="#000"/><rect x="860" y="47" width="7" height="1" fill="#000"/><rect x="860" y="48" width="7" height="1" fill="#000"/><rect x="860" y="49" width="8" height="1" fill="#000"/><rect x="860" y="50" width="16" height="1" fill="#000"/><rect x="860" y="51" width="8" height="1" fill="#000"/><rect x="860" y="52" width="6" height="1" fill="#000"/><rect x="860" y="54" width="7" height="1" fill="#000"/><rect x="860" y="55" width="12" height="1" fill="#000"/><rect x="860" y="56" width="7" height="1" fill="#000"/><rect x="860" y="57" width="12" height="1" fill="#000"/><rect x="860" y="58" width="10" height="1" fill="#000"/><rect x="860" y="61" width="6" height="1" fill="#000"/><rect x="860" y="62" width="16" height="1" fill="#000"/><rect x="860" y="63" width="8" height="1" fill="#000"/><rect x="860" y="64" width="6" height="1" fill="#000"/><rect x="860" y="65" width="7" height="1" fill="#000"/><rect x="860" y="66" width="7" height="1" fill="#000"/><rect x="860" y="67" width="9" height="1" fill="#000"/><rect x="860" y="68" width="12" height="1" fill="#000"/><rect x="860" y="69" width="7" height="1" fill="#000"/><rect x="860" y="70" width="13" height="1" fill="#000"/><rect x="860" y="72" width="8" height="1" fill="#000"/><rect x="860" y="73" width="7" height="1" fill="#000"/><rect x="860" y="74" width="8" height="1" fill="#000"/><rect x="860" y="75" width="9" height="1" fill="#000"/><rect x="860" y="76" width="7" height="1" fill="#000"/><rect x="860" y="81" width="9" height="1" fill="#000"/><rect x="860" y="82" width="17" height="1" fill="#000"/><rect x="860" y="83" width="8" height="1" fill="#000"/><rect x="860" y="84" width="6" height="1" fill="#000"/><rect x="860" y="85" width="16" height="1" fill="#000"/><rect x="860" y="86" width="9" height="1" fill="#000"/><rect x="860" y="87" width="12" height="1" fill="#000"/><rect x="860" y="88" width="7" height="1" fill="#000"/><rect x="860" y="89" width="6" height="1" fill="#000"/><rect x="860" y="92" width="5" height="1" fill="#000"/><rect x="860" y="93" width="6" height="1" fill="#000"/><rect x="860" y="96" width="9" height="1" fill="#000"/><rect x="860" y="97" width="9" height="1" fill="#000"/><rect x="860" y="98" width="11" height="1" fill="#000"/><rect x="860" y="99" width="10" height="1" fill="#000"/><rect x="860" y="100" width="11" height="1" fill="#000"/><rect x="860" y="101" width="11" height="1" fill="#000"/><rect x="860" y="102" width="10" height="1" fill="#000"/><rect x="860" y="103" width="7" height="1" fill="#000"/><rect x="860" y="104" width="10" height="1" fill="#000"/><rect x="860" y="105" width="7" height="1" fill="#000"/><rect x="860" y="106" width="6" height="1" fill="#000"/><rect x="860" y="107" width="5" height="1" fill="#000"/><rect x="860" y="108" width="14" height="1" fill="#000"/><rect x="860" y="109" width="5" height="1" fill="#000"/><rect x="860" y="110" width="8" height="1" fill="#000"/><rect x="860" y="111" width="5" height="1" fill="#000"/><rect x="860" y="112" width="8" height="1" fill="#000"/><rect x="860" y="113" width="8" height="1" fill="#000"/><rect x="860" y="114" width="10" height="1" fill="#000"/><rect x="860" y="115" width="9" height="1" fill="#000"/><rect x="860" y="117" width="9" height="1" fill="#000"/><rect x="860" y="118" width="7" height="1" fill="#000"/><rect x="860" y="119" width="9" height="1" fill="#000"/><rect x="860" y="120" width="5" height="1" fill="#000"/><rect x="860" y="121" width="8" height="1" fill="#000"/><rect x="860" y="122" width="4" height="1" fill="#000"/><rect x="860" y="123" width="7" height="1" fill="#000"/><rect x="860" y="124" width="9" height="1" fill="#000"/><rect x="860" y="125" width="9" height="1" fill="#000"/><rect x="860" y="126" width="8" height="1" fill="#000"/><rect x="860" y="127" width="12" height="1" fill="#000"/><rect x="860" y="132" width="18" height="1" fill="#000"/><rect x="860" y="133" width="18" height="1" fill="#000"/><rect x="860" y="135" width="10" height="1" fill="#000"/><rect x="860" y="136" width="11" height="1" fill="#000"/><rect x="860" y="137" width="7" height="1" fill="#000"/><rect x="860" y="138" width="10" height="1" fill="#000"/><rect x="860" y="139" width="7" height="1" fill="#000"/><rect x="860" y="140" width="13" height="1" fill="#000"/><rect x="860" y="141" width="7" height="1" fill="#000"/><rect x="860" y="142" width="8" height="1" fill="#000"/><rect x="860" y="143" width="9" height="1" fill="#000"/><rect x="860" y="144" width="9" height="1" fill="#000"/><rect x="860" y="148" width="22" height="1" fill="#000"/><rect x="860" y="149" width="17" height="1" fill="#000"/><rect x="860" y="150" width="17" height="1" fill="#0b0b3a"/><rect x="860" y="151" width="24" height="1" fill="#0b0b3a"/><rect x="860" y="152" width="16" height="1" fill="#000"/><rect x="860" y="154" width="22" height="1" fill="#000"/><rect x="860" y="155" width="12" height="1" fill="#000"/><rect x="860" y="156" width="10" height="1" fill="#000"/><rect x="860" y="157" width="24" height="1" fill="#000"/><rect x="860" y="158" width="11" height="1" fill="#000"/><rect x="860" y="159" width="11" height="1" fill="#000"/><rect x="860" y="160" width="11" height="1" fill="#000"/><rect x="860" y="161" width="9" height="1" fill="#000"/><rect x="860" y="164" width="11" height="1" fill="#000"/><rect x="860" y="165" width="15" height="1" fill="#000"/><rect x="860" y="166" width="15" height="1" fill="#000"/><rect x="860" y="167" width="19" height="1" fill="#000"/><rect x="860" y="168" width="15" height="1" fill="#000"/><rect x="860" y="169" width="13" height="1" fill="#000"/><rect x="860" y="170" width="19" height="1" fill="#000"/><rect x="860" y="171" width="13" height="1" fill="#000"/><rect x="860" y="172" width="14" height="1" fill="#000"/><rect x="860" y="173" width="19" height="1" fill="#000"/><rect x="860" y="175" width="18" height="1" fill="#000"/><rect x="860" y="176" width="19" height="1" fill="#000"/><rect x="860" y="177" width="15" height="1" fill="#000"/><rect x="860" y="178" width="13" height="1" fill="#000"/><rect x="860" y="179" width="14" height="1" fill="#000"/><rect x="860" y="181" width="19" height="1" fill="#000"/><rect x="860" y="182" width="19" height="1" fill="#000"/><rect x="860" y="183" width="19" height="1" fill="#000"/><rect x="860" y="184" width="19" height="1" fill="#000"/><rect x="860" y="185" width="19" height="1" fill="#000"/><rect x="860" y="186" width="19" height="1" fill="#000"/><rect x="860" y="188" width="19" height="1" fill="#000"/><rect x="860" y="189" width="19" height="1" fill="#0b0b3a"/><rect x="860" y="190" width="19" height="1" fill="#0b0b3a"/><rect x="860" y="191" width="19" height="1" fill="#0b0b3a"/><rect x="860" y="192" width="19" height="1" fill="#000"/><rect x="860" y="193" width="19" height="1" fill="#000"/><rect x="860" y="194" width="19" height="1" fill="#000"/><rect x="860" y="195" width="19" height="1" fill="#000"/><rect x="860" y="196" width="19" height="1" fill="#000"/><rect x="860" y="197" width="19" height="1" fill="#000"/><rect x="860" y="202" width="16" height="1" fill="#000"/><rect x="860" y="203" width="15" height="1" fill="#000"/><rect x="860" y="206" width="11" height="1" fill="#000"/><rect x="860" y="207" width="9" height="1" fill="#000"/><rect x="860" y="208" width="11" height="1" fill="#000"/><rect x="860" y="209" width="11" height="1" fill="#000"/><rect x="860" y="210" width="8" height="1" fill="#000"/><rect x="860" y="211" width="18" height="1" fill="#000"/><rect x="860" y="212" width="10" height="1" fill="#000"/><rect x="860" y="213" width="17" height="1" fill="#000"/><rect x="860" y="218" width="12" height="1" fill="#000"/><rect x="860" y="219" width="13" height="1" fill="#000"/><rect x="860" y="220" width="5" height="1" fill="#000"/><rect x="860" y="221" width="6" height="1" fill="#000"/><rect x="860" y="223" width="8" height="1" fill="#000"/><rect x="860" y="224" width="7" height="1" fill="#000"/><rect x="860" y="225" width="12" height="1" fill="#000"/><rect x="860" y="226" width="7" height="1" fill="#000"/><rect x="860" y="227" width="6" height="1" fill="#000"/><rect x="860" y="230" width="6" height="1" fill="#000"/><rect x="860" y="231" width="10" height="1" fill="#000"/><rect x="860" y="232" width="5" height="1" fill="#000"/><rect x="860" y="233" width="6" height="1" fill="#000"/><rect x="860" y="234" width="12" height="1" fill="#000"/><rect x="860" y="235" width="7" height="1" fill="#000"/><rect x="860" y="237" width="7" height="1" fill="#000"/><rect x="860" y="238" width="8" height="1" fill="#000"/><rect x="860" y="239" width="12" height="1" fill="#000"/><rect x="860" y="240" width="8" height="1" fill="#000"/><rect x="860" y="241" width="6" height="1" fill="#000"/><rect x="860" y="244" width="8" height="1" fill="#000"/><rect x="860" y="245" width="9" height="1" fill="#000"/><rect x="860" y="246" width="8" height="1" fill="#000"/><rect x="860" y="247" width="6" height="1" fill="#000"/><rect x="860" y="248" width="8" height="1" fill="#000"/><rect x="860" y="249" width="8" height="1" fill="#000"/><rect x="860" y="251" width="13" height="1" fill="#000"/><rect x="860" y="252" width="6" height="1" fill="#000"/><rect x="860" y="253" width="6" height="1" fill="#000"/><rect x="860" y="254" width="10" height="1" fill="#000"/><rect x="860" y="255" width="5" height="1" fill="#000"/><rect x="860" y="256" width="11" height="1" fill="#000"/><rect x="860" y="257" width="7" height="1" fill="#0b0b3a"/><rect x="860" y="258" width="7" height="1" fill="#000"/><rect x="860" y="259" width="6" height="1" fill="#000"/><rect x="860" y="261" width="7" height="1" fill="#000"/><rect x="860" y="262" width="5" height="1" fill="#000"/><rect x="860" y="263" width="15" height="1" fill="#000"/><rect x="860" y="265" width="13" height="1" fill="#000"/><rect x="860" y="266" width="7" height="1" fill="#000"/><rect x="860" y="267" width="9" height="1" fill="#000"/><rect x="860" y="269" width="5" height="1" fill="#000"/><rect x="860" y="270" width="6" height="1" fill="#000"/><rect x="860" y="271" width="13" height="1" fill="#000"/><rect x="860" y="272" width="4" height="1" fill="#000"/><rect x="860" y="273" width="7" height="1" fill="#000"/><rect x="860" y="275" width="9" height="1" fill="#000"/><rect x="860" y="276" width="6" height="1" fill="#000"/><rect x="860" y="277" width="10" height="1" fill="#000"/><rect x="860" y="278" width="8" height="1" fill="#000"/><rect x="860" y="279" width="8" height="1" fill="#000"/><rect x="860" y="280" width="7" height="1" fill="#000"/><rect x="860" y="281" width="6" height="1" fill="#000"/><rect x="860" y="282" width="10" height="1" fill="#000"/><rect x="860" y="283" width="9" height="1" fill="#000"/><rect x="860" y="285" width="4" height="1" fill="#000"/><rect x="860" y="286" width="3" height="1" fill="#000"/><rect x="860" y="287" width="5" height="1" fill="#000"/><rect x="860" y="288" width="6" height="1" fill="#000"/><rect x="860" y="289" width="5" height="1" fill="#000"/><rect x="860" y="292" width="6" height="1" fill="#000"/><rect x="860" y="293" width="5" height="1" fill="#000"/><rect x="860" y="294" width="8" height="1" fill="#000"/><rect x="860" y="295" width="7" height="1" fill="#000"/><rect x="860" y="296" width="8" height="1" fill="#000"/><rect x="860" y="297" width="13" height="1" fill="#000"/><rect x="860" y="298" width="6" height="1" fill="#000"/><rect x="860" y="299" width="7" height="1" fill="#000"/><rect x="860" y="305" width="9" height="1" fill="#000"/><rect x="860" y="307" width="10" height="1" fill="#000"/><rect x="860" y="308" width="6" height="1" fill="#000"/><rect x="860" y="309" width="5" height="1" fill="#000"/><rect x="860" y="310" width="6" height="1" fill="#000"/><rect x="860" y="311" width="6" height="1" fill="#000"/><rect x="860" y="312" width="6" height="1" fill="#000"/><rect x="860" y="314" width="9" height="1" fill="#000"/><rect x="860" y="315" width="9" height="1" fill="#000"/><rect x="860" y="316" width="8" height="1" fill="#000"/><rect x="860" y="317" width="9" height="1" fill="#000"/><rect x="860" y="318" width="9" height="1" fill="#000"/><rect x="860" y="319" width="12" height="1" fill="#000"/><rect x="860" y="322" width="5" height="1" fill="#000"/><rect x="860" y="323" width="7" height="1" fill="#000"/><rect x="860" y="324" width="7" height="1" fill="#000"/><rect x="860" y="325" width="6" height="1" fill="#000"/><rect x="860" y="326" width="4" height="1" fill="#000"/><rect x="860" y="332" width="9" height="1" fill="#000"/><rect x="860" y="333" width="8" height="1" fill="#000"/><rect x="860" y="334" width="7" height="1" fill="#000"/><rect x="860" y="335" width="7" height="1" fill="#000"/><rect x="860" y="336" width="14" height="1" fill="#000"/><rect x="860" y="337" width="15" height="1" fill="#000"/><rect x="860" y="338" width="11" height="1" fill="#000"/><rect x="860" y="339" width="15" height="1" fill="#000"/><rect x="860" y="341" width="10" height="1" fill="#000"/><rect x="860" y="342" width="8" height="1" fill="#000"/><rect x="860" y="343" width="6" height="1" fill="#000"/><rect x="860" y="344" width="7" height="1" fill="#000"/><rect x="860" y="345" width="6" height="1" fill="#000"/><rect x="860" y="346" width="11" height="1" fill="#000"/><rect x="860" y="347" width="7" height="1" fill="#000"/><rect x="860" y="348" width="8" height="1" fill="#000"/><rect x="860" y="352" width="4" height="1" fill="#000"/><rect x="860" y="353" width="5" height="1" fill="#000"/><rect x="860" y="354" width="4" height="1" fill="#000"/><rect x="860" y="355" width="6" height="1" fill="#000"/><rect x="860" y="356" width="4" height="1" fill="#000"/><rect x="860" y="357" width="5" height="1" fill="#000"/><rect x="860" y="358" width="3" height="1" fill="#000"/><rect x="860" y="359" width="14" height="1" fill="#000"/><rect x="860" y="360" width="15" height="1" fill="#000"/><rect x="860" y="364" width="8" height="1" fill="#000"/><rect x="860" y="365" width="11" height="1" fill="#000"/><rect x="860" y="366" width="7" height="1" fill="#000"/><rect x="860" y="367" width="14" height="1" fill="#000"/><rect x="860" y="368" width="7" height="1" fill="#000"/><rect x="860" y="371" width="7" height="1" fill="#000"/><rect x="860" y="372" width="7" height="1" fill="#000"/><rect x="860" y="373" width="6" height="1" fill="#000"/><rect x="860" y="374" width="6" height="1" fill="#000"/><rect x="860" y="380" width="3" height="1" fill="#000"/><rect x="860" y="381" width="4" height="1" fill="#000"/><rect x="860" y="382" width="4" height="1" fill="#000"/><rect x="860" y="383" width="16" height="1" fill="#000"/><rect x="860" y="384" width="3" height="1" fill="#000"/><rect x="860" y="385" width="6" height="1" fill="#000"/><rect x="860" y="386" width="6" height="1" fill="#000"/><rect x="860" y="387" width="13" height="1" fill="#000"/><rect x="860" y="390" width="3" height="1" fill="#000"/><rect x="860" y="391" width="14" height="1" fill="#000"/><rect x="860" y="392" width="5" height="1" fill="#000"/><rect x="860" y="393" width="2" height="1" fill="#000"/><rect x="860" y="394" width="3" height="1" fill="#000"/><rect x="860" y="396" width="4" height="1" fill="#000"/><rect x="860" y="397" width="4" height="1" fill="#000"/><rect x="860" y="398" width="5" height="1" fill="#000"/><rect x="860" y="399" width="4" height="1" fill="#000"/><rect x="860" y="400" width="3" height="1" fill="#000"/><rect x="860" y="401" width="3" height="1" fill="#000"/><rect x="860" y="405" width="7" height="1" fill="#000"/><rect x="860" y="406" width="14" height="1" fill="#000"/><rect x="860" y="407" width="6" height="1" fill="#000"/><rect x="860" y="408" width="12" height="1" fill="#000"/><rect x="860" y="409" width="5" height="1" fill="#000"/><rect x="860" y="410" width="12" height="1" fill="#000"/><rect x="860" y="411" width="6" height="1" fill="#000"/><rect x="860" y="412" width="14" height="1" fill="#000"/><rect x="860" y="413" width="4" height="1" fill="#000"/><rect x="860" y="414" width="5" height="1" fill="#000"/><rect x="860" y="415" width="12" height="1" fill="#000"/><rect x="860" y="416" width="6" height="1" fill="#000"/><rect x="860" y="417" width="3" height="1" fill="#000"/><rect x="860" y="418" width="14" height="1" fill="#000"/><rect x="860" y="421" width="8" height="1" fill="#000"/><rect x="860" y="422" width="7" height="1" fill="#000"/><rect x="860" y="423" width="8" height="1" fill="#000"/><rect x="860" y="424" width="7" height="1" fill="#000"/><rect x="860" y="425" width="14" height="1" fill="#000"/><rect x="860" y="426" width="8" height="1" fill="#000"/><rect x="860" y="427" width="9" height="1" fill="#000"/><rect x="860" y="428" width="11" height="1" fill="#000"/><rect x="860" y="429" width="10" height="1" fill="#000"/><rect x="860" y="431" width="5" height="1" fill="#000"/><rect x="860" y="432" width="12" height="1" fill="#000"/><rect x="860" y="433" width="12" height="1" fill="#000"/><rect x="860" y="434" width="4" height="1" fill="#000"/><rect x="860" y="435" width="3" height="1" fill="#000"/><rect x="860" y="436" width="13" height="1" fill="#000"/><rect x="860" y="437" width="13" height="1" fill="#000"/><rect x="860" y="438" width="5" height="1" fill="#000"/><rect x="860" y="439" width="5" height="1" fill="#000"/><rect x="860" y="441" width="8" height="1" fill="#000"/><rect x="860" y="442" width="5" height="1" fill="#000"/><rect x="860" y="443" width="8" height="1" fill="#000"/><rect x="860" y="444" width="10" height="1" fill="#000"/><rect x="860" y="445" width="7" height="1" fill="#000"/><rect x="860" y="446" width="6" height="1" fill="#000"/><rect x="860" y="447" width="8" height="1" fill="#000"/><rect x="860" y="448" width="14" height="1" fill="#000"/><rect x="860" y="449" width="16" height="1" fill="#000"/><rect x="860" y="450" width="8" height="1" fill="#000"/><rect x="860" y="451" width="11" height="1" fill="#000"/><rect x="860" y="454" width="5" height="1" fill="#000"/><rect x="860" y="455" width="7" height="1" fill="#000"/><rect x="860" y="456" width="13" height="1" fill="#000"/><rect x="860" y="457" width="11" height="1" fill="#000"/><rect x="860" y="458" width="14" height="1" fill="#000"/><rect x="860" y="460" width="7" height="1" fill="#000"/><rect x="860" y="461" width="4" height="1" fill="#000"/><rect x="860" y="462" width="7" height="1" fill="#000"/><rect x="860" y="463" width="7" height="1" fill="#000"/><rect x="860" y="464" width="4" height="1" fill="#000"/><rect x="860" y="465" width="5" height="1" fill="#000"/><rect x="860" y="466" width="8" height="1" fill="#000"/><rect x="860" y="467" width="5" height="1" fill="#000"/><rect x="860" y="468" width="4" height="1" fill="#000"/><rect x="860" y="471" width="5" height="1" fill="#000"/><rect x="860" y="474" width="9" height="1" fill="#000"/><rect x="860" y="475" width="8" height="1" fill="#000"/><rect x="860" y="476" width="8" height="1" fill="#000"/><rect x="860" y="477" width="5" height="1" fill="#000"/><rect x="860" y="478" width="7" height="1" fill="#000"/><rect x="860" y="479" width="12" height="1" fill="#000"/><rect x="860" y="480" width="7" height="1" fill="#000"/><rect x="860" y="481" width="8" height="1" fill="#000"/><rect x="860" y="482" width="7" height="1" fill="#000"/><rect x="860" y="484" width="6" height="1" fill="#000"/><rect x="860" y="485" width="6" height="1" fill="#000"/><rect x="860" y="486" width="15" height="1" fill="#000"/><rect x="860" y="487" width="13" height="1" fill="#000"/><rect x="860" y="488" width="4" height="1" fill="#000"/><rect x="860" y="489" width="6" height="1" fill="#000"/><rect x="860" y="490" width="4" height="1" fill="#000"/><rect x="860" y="491" width="6" height="1" fill="#000"/><rect x="860" y="493" width="4" height="1" fill="#000"/><rect x="860" y="494" width="15" height="1" fill="#000"/><rect x="860" y="495" width="14" height="1" fill="#000"/><rect x="860" y="499" width="5" height="1" fill="#000"/><rect x="860" y="500" width="6" height="1" fill="#000"/><rect x="860" y="501" width="6" height="1" fill="#000"/><rect x="860" y="503" width="7" height="1" fill="#000"/><rect x="860" y="504" width="7" height="1" fill="#000"/><rect x="860" y="505" width="7" height="1" fill="#000"/><rect x="860" y="506" width="6" height="1" fill="#000"/><rect x="860" y="507" width="15" height="1" fill="#000"/><rect x="860" y="511" width="5" height="1" fill="#000"/><rect x="860" y="512" width="6" height="1" fill="#000"/><rect x="860" y="513" width="7" height="1" fill="#000"/><rect x="860" y="514" width="6" height="1" fill="#000"/><rect x="860" y="515" width="9" height="1" fill="#000"/><rect x="860" y="516" width="7" height="1" fill="#000"/><rect x="860" y="518" width="6" height="1" fill="#000"/><rect x="860" y="521" width="4" height="1" fill="#000"/><rect x="860" y="522" width="5" height="1" fill="#000"/><rect x="860" y="523" width="5" height="1" fill="#000"/><rect x="860" y="524" width="7" height="1" fill="#000"/><rect x="860" y="525" width="3" height="1" fill="#000"/><rect x="860" y="527" width="11" height="1" fill="#000"/><rect x="860" y="528" width="4" height="1" fill="#000"/><rect x="860" y="534" width="3" height="1" fill="#000"/><rect x="860" y="535" width="6" height="1" fill="#000"/><rect x="860" y="536" width="9" height="1" fill="#000"/><rect x="860" y="537" width="6" height="1" fill="#000"/><rect x="860" y="538" width="7" height="1" fill="#000"/><rect x="860" y="542" width="8" height="1" fill="#000"/><rect x="860" y="543" width="7" height="1" fill="#000"/><rect x="860" y="545" width="15" height="1" fill="#000"/><rect x="860" y="546" width="16" height="1" fill="#000"/><rect x="860" y="548" width="4" height="1" fill="#000"/><rect x="860" y="549" width="8" height="1" fill="#000"/><rect x="860" y="550" width="6" height="1" fill="#000"/><rect x="860" y="551" width="6" height="1" fill="#000"/><rect x="860" y="552" width="5" height="1" fill="#000"/><rect x="860" y="554" width="7" height="1" fill="#000"/><rect x="860" y="555" width="6" height="1" fill="#000"/><rect x="860" y="556" width="5" height="1" fill="#000"/><rect x="860" y="557" width="4" height="1" fill="#000"/><rect x="860" y="558" width="16" height="1" fill="#000"/><rect x="860" y="559" width="6" height="1" fill="#000"/><rect x="860" y="561" width="5" height="1" fill="#000"/><rect x="860" y="562" width="11" height="1" fill="#000"/><rect x="860" y="563" width="9" height="1" fill="#000"/><rect x="860" y="564" width="8" height="1" fill="#000"/><rect x="860" y="565" width="7" height="1" fill="#000"/><rect x="860" y="566" width="9" height="1" fill="#000"/><rect x="860" y="567" width="7" height="1" fill="#000"/><rect x="860" y="568" width="11" height="1" fill="#000"/><rect x="860" y="571" width="3" height="1" fill="#000"/><rect x="860" y="572" width="15" height="1" fill="#000"/><rect x="860" y="575" width="3" height="1" fill="#000"/><rect x="860" y="576" width="4" height="1" fill="#000"/><rect x="860" y="577" width="15" height="1" fill="#000"/><rect x="860" y="578" width="4" height="1" fill="#000"/><rect x="860" y="579" width="11" height="1" fill="#000"/><rect x="860" y="581" width="6" height="1" fill="#000"/><rect x="860" y="582" width="5" height="1" fill="#000"/><rect x="860" y="583" width="4" height="1" fill="#000"/><rect x="860" y="584" width="5" height="1" fill="#000"/><rect x="860" y="585" width="4" height="1" fill="#000"/><rect x="860" y="587" width="16" height="1" fill="#000"/><rect x="860" y="588" width="14" height="1" fill="#000"/><rect x="860" y="589" width="5" height="1" fill="#000"/><rect x="860" y="590" width="11" height="1" fill="#000"/><rect x="860" y="591" width="13" height="1" fill="#000"/><rect x="860" y="593" width="6" height="1" fill="#000"/><rect x="860" y="594" width="7" height="1" fill="#000"/><rect x="860" y="596" width="15" height="1" fill="#000"/><rect x="860" y="597" width="3" height="1" fill="#000"/><rect x="860" y="598" width="3" height="1" fill="#000"/><rect x="860" y="599" width="3" height="1" fill="#000"/><rect x="860" y="600" width="5" height="1" fill="#000"/><rect x="860" y="601" width="5" height="1" fill="#000"/><rect x="860" y="602" width="4" height="1" fill="#000"/><rect x="860" y="603" width="4" height="1" fill="#000"/><rect x="860" y="604" width="5" height="1" fill="#000"/><rect x="860" y="606" width="7" height="1" fill="#000"/><rect x="860" y="607" width="15" height="1" fill="#000"/><rect x="860" y="608" width="10" height="1" fill="#000"/><rect x="860" y="611" width="5" height="1" fill="#000"/><rect x="860" y="612" width="6" height="1" fill="#000"/><rect x="860" y="613" width="6" height="1" fill="#000"/><rect x="860" y="614" width="12" height="1" fill="#000"/><rect x="860" y="620" width="6" height="1" fill="#000"/><rect x="860" y="621" width="7" height="1" fill="#000"/><rect x="860" y="622" width="8" height="1" fill="#000"/><rect x="860" y="623" width="6" height="1" fill="#000"/><rect x="860" y="624" width="6" height="1" fill="#000"/><rect x="860" y="625" width="5" height="1" fill="#000"/><rect x="860" y="626" width="6" height="1" fill="#000"/><rect x="860" y="627" width="15" height="1" fill="#000"/><rect x="860" y="629" width="9" height="1" fill="#000"/><rect x="860" y="630" width="9" height="1" fill="#000"/><rect x="860" y="631" width="16" height="1" fill="#000"/><rect x="860" y="632" width="11" height="1" fill="#000"/><rect x="860" y="633" width="8" height="1" fill="#000"/><rect x="860" y="634" width="6" height="1" fill="#000"/><rect x="860" y="637" width="4" height="1" fill="#000"/><rect x="860" y="643" width="4" height="1" fill="#000"/><rect x="860" y="644" width="3" height="1" fill="#000"/><rect x="860" y="645" width="4" height="1" fill="#000"/><rect x="860" y="646" width="5" height="1" fill="#000"/><rect x="860" y="647" width="7" height="1" fill="#000"/><rect x="860" y="648" width="6" height="1" fill="#000"/><rect x="860" y="650" width="11" height="1" fill="#000"/><rect x="860" y="651" width="13" height="1" fill="#000"/><rect x="860" y="652" width="10" height="1" fill="#000"/><rect x="860" y="653" width="11" height="1" fill="#000"/><rect x="860" y="654" width="9" height="1" fill="#000"/><rect x="860" y="658" width="4" height="1" fill="#000"/><rect x="860" y="659" width="6" height="1" fill="#000"/><rect x="860" y="665" width="12" height="1" fill="#000"/><rect x="860" y="668" width="13" height="1" fill="#000"/><rect x="860" y="669" width="5" height="1" fill="#000"/><rect x="860" y="670" width="6" height="1" fill="#000"/><rect x="860" y="671" width="6" height="1" fill="#000"/><rect x="860" y="672" width="5" height="1" fill="#000"/><rect x="860" y="673" width="7" height="1" fill="#000"/><rect x="860" y="674" width="5" height="1" fill="#000"/><rect x="860" y="675" width="5" height="1" fill="#000"/><rect x="860" y="676" width="4" height="1" fill="#000"/><rect x="860" y="678" width="9" height="1" fill="#000"/><rect x="860" y="679" width="8" height="1" fill="#000"/><rect x="860" y="680" width="12" height="1" fill="#000"/><rect x="860" y="681" width="10" height="1" fill="#000"/><rect x="860" y="682" width="6" height="1" fill="#000"/><rect x="860" y="683" width="6" height="1" fill="#000"/><rect x="860" y="684" width="5" height="1" fill="#000"/><rect x="860" y="685" width="10" height="1" fill="#000"/><rect x="860" y="686" width="8" height="1" fill="#000"/><rect x="860" y="689" width="7" height="1" fill="#000"/><rect x="860" y="690" width="6" height="1" fill="#000"/><rect x="860" y="691" width="7" height="1" fill="#000"/><rect x="860" y="692" width="7" height="1" fill="#000"/><rect x="860" y="694" width="6" height="1" fill="#000"/><rect x="860" y="698" width="6" height="1" fill="#000"/><rect x="860" y="699" width="7" height="1" fill="#000"/><rect x="860" y="702" width="8" height="1" fill="#000"/><rect x="860" y="703" width="12" height="1" fill="#000"/><rect x="860" y="704" width="9" height="1" fill="#000"/><rect x="860" y="707" width="4" height="1" fill="#000"/><rect x="860" y="709" width="5" height="1" fill="#000"/><rect x="860" y="710" width="7" height="1" fill="#000"/><rect x="860" y="711" width="7" height="1" fill="#000"/><rect x="860" y="714" width="9" height="1" fill="#000"/><rect x="860" y="715" width="15" height="1" fill="#000"/><rect x="860" y="716" width="9" height="1" fill="#000"/><rect x="860" y="717" width="6" height="1" fill="#000"/><rect x="860" y="718" width="10" height="1" fill="#000"/><rect x="860" y="721" width="8" height="1" fill="#000"/><rect x="860" y="722" width="5" height="1" fill="#000"/><rect x="860" y="723" width="7" height="1" fill="#000"/><rect x="860" y="724" width="8" height="1" fill="#000"/><rect x="860" y="725" width="8" height="1" fill="#000"/><rect x="860" y="728" width="8" height="1" fill="#000"/><rect x="860" y="729" width="6" height="1" fill="#000"/><rect x="860" y="730" width="8" height="1" fill="#000"/><rect x="860" y="731" width="9" height="1" fill="#000"/><rect x="860" y="732" width="9" height="1" fill="#000"/><rect x="860" y="733" width="7" height="1" fill="#000"/><rect x="860" y="734" width="12" height="1" fill="#000"/><rect x="860" y="735" width="13" height="1" fill="#000"/><rect x="860" y="737" width="8" height="1" fill="#000"/><rect x="860" y="738" width="6" height="1" fill="#000"/><rect x="860" y="739" width="8" height="1" fill="#000"/><rect x="860" y="740" width="9" height="1" fill="#000"/><rect x="860" y="741" width="6" height="1" fill="#000"/><rect x="860" y="742" width="11" height="1" fill="#000"/><rect x="860" y="743" width="15" height="1" fill="#000"/><rect x="860" y="744" width="9" height="1" fill="#000"/><rect x="860" y="746" width="2" height="1" fill="#000"/><rect x="860" y="747" width="3" height="1" fill="#000"/><rect x="860" y="748" width="2" height="1" fill="#000"/><rect x="860" y="749" width="3" height="1" fill="#000"/><rect x="860" y="750" width="4" height="1" fill="#000"/><rect x="860" y="754" width="7" height="1" fill="#000"/><rect x="860" y="755" width="8" height="1" fill="#000"/><rect x="860" y="758" width="6" height="1" fill="#000"/><rect x="860" y="759" width="7" height="1" fill="#000"/><rect x="860" y="760" width="12" height="1" fill="#000"/><rect x="860" y="761" width="7" height="1" fill="#000"/><rect x="860" y="765" width="3" height="1" fill="#000"/><rect x="860" y="767" width="4" height="1" fill="#000"/><rect x="860" y="768" width="5" height="1" fill="#000"/><rect x="860" y="769" width="5" height="1" fill="#000"/><rect x="860" y="770" width="7" height="1" fill="#000"/><rect x="860" y="771" width="5" height="1" fill="#000"/><rect x="860" y="772" width="5" height="1" fill="#000"/><rect x="860" y="80" width="80" height="1" fill="#9a9a9a"/><rect x="860" y="158" width="80" height="1" fill="#9a9a9a"/><rect x="860" y="236" width="80" height="1" fill="#9a9a9a"/><rect x="860" y="314" width="80" height="1" fill="#9a9a9a"/><rect x="860" y="392" width="80" height="1" fill="#9a9a9a"/><rect x="860" y="470" width="80" height="1" fill="#9a9a9a"/><rect x="860" y="549" width="80" height="1" fill="#9a9a9a"/><rect x="860" y="627" width="80" height="1" fill="#9a9a9a"/><rect x="860" y="705" width="80" height="1" fill="#9a9a9a"/>
<svg x="860" y="1" width="80" height="781">
<g transform="translate(-860,-1)">
<polyline points="860.8,3.0 861.0,16.6 865.0,21.7 865.8,25.1 867.2,28.6 868.0,32.0 869.8,35.3 868.4,38.7 868.8,42.0 868.9,45.1 869.4,48.2 868.0,51.2 869.3,54.3 869.4,57.4 869.9,60.5 870.5,63.7 867.9,66.8 869.4,70.0 869.0,73.2 868.6,76.5 871.5,79.8 870.7,83.0 871.7,86.5 869.7,90.0 873.4,93.5 872.0,97.0 873.0,101.0 870.7,105.0 872.2,108.9 872.6,112.8 873.3,116.0 872.0,119.2 871.8,122.3 873.9,125.5 874.6,128.6 873.6,131.8 874.7,134.9 876.4,138.0 876.1,141.2 876.0,144.5 878.2,147.8 879.0,151.0 879.8,154.5 881.0,158.0 883.1,161.5 882.7,165.0 884.0,168.5 884.3,172.0 885.8,175.2 887.9,178.5 888.7,181.8 890.4,185.0 900.6,193.0 893.0,198.0 875.0,206.0 870.0,214.0 867.5,219.0 867.4,222.2 868.8,225.5 869.3,229.2 866.2,233.0 868.8,237.0 870.4,240.5 869.6,244.0 868.9,247.5 868.0,251.0 866.4,254.2 866.2,257.4 866.5,260.6 868.8,263.8 867.8,267.0 866.9,270.2 869.2,273.4 868.0,276.6 868.0,279.8 869.9,283.0 868.6,286.1 869.4,289.3 870.1,292.5 867.5,295.7 868.8,300.0 869.7,303.2 866.4,306.4 866.8,309.6 867.5,312.8 869.3,316.0 868.0,319.1 870.2,322.3 868.8,325.5 868.3,328.7 867.1,331.9 869.0,335.1 869.4,338.2 867.5,341.4 866.7,344.6 867.5,347.8 868.0,351.0 869.9,354.2 869.3,357.4 867.2,360.6 868.8,363.8 867.9,367.0 867.4,370.2 867.2,373.4 869.9,376.6 867.6,379.8 868.8,383.0 868.1,386.0 866.9,389.0 866.2,392.0 866.0,396.0 868.0,400.0 868.8,403.0 866.7,406.1 868.5,409.1 866.6,412.1 867.7,415.2 867.0,418.2 867.2,421.2 869.7,424.2 869.1,427.3 867.3,430.3 869.4,433.3 867.0,436.4 867.6,439.4 869.3,442.4 868.5,445.5 866.6,448.5 869.8,451.5 867.0,454.5 867.1,457.6 869.0,460.6 867.4,463.6 867.3,466.7 866.5,469.7 866.5,472.7 868.3,475.8 867.1,478.8 868.4,481.8 867.5,484.8 867.8,487.9 869.7,490.9 867.9,493.9 868.3,497.0 868.0,500.0 869.3,503.0 866.9,506.1 866.8,509.1 869.5,512.1 869.1,515.2 867.1,518.2 866.9,521.2 868.9,524.2 869.6,527.3 866.9,530.3 869.6,533.3 869.4,536.4 868.4,539.4 867.7,542.4 866.6,545.5 866.3,548.5 869.7,551.5 867.1,554.5 868.7,557.6 867.1,560.6 869.2,563.6 868.3,566.7 867.3,569.7 866.8,572.7 868.8,575.8 866.4,578.8 867.0,581.8 868.2,584.8 869.3,587.9 868.4,590.9 867.2,593.9 869.5,597.0 868.0,600.0 866.9,603.0 866.3,606.1 867.2,609.1 867.8,612.1 866.4,615.2 866.8,618.2 867.5,621.2 868.3,624.2 866.7,627.3 867.5,630.3 869.4,633.3 869.7,636.4 868.6,639.4 868.7,642.4 868.3,645.5 866.7,648.5 866.3,651.5 866.3,654.5 869.5,657.6 868.7,660.6 869.7,663.6 866.3,666.7 868.5,669.7 867.9,672.7 868.8,675.8 867.3,678.8 869.8,681.8 866.5,684.8 868.2,687.9 868.9,690.9 869.4,693.9 868.9,697.0 868.0,700.0 868.7,703.0 869.1,706.1 869.5,709.1 867.5,712.1 868.7,715.1 869.4,718.2 869.3,721.2 867.7,724.2 869.0,727.3 869.3,730.3 868.3,733.3 868.4,736.3 867.6,739.4 868.3,742.4 868.4,745.4 866.5,748.5 868.5,751.5 869.8,754.5 869.4,757.5 868.8,760.6 868.0,763.6 860.8,773.0" fill="none" stroke="#c03030" stroke-width="1.2"/>
<polyline points="861.0,2.5 868.8,5.1 879.0,8.3 889.2,14.7 898.0,19.0 900.9,22.5 904.5,26.0 906.5,29.5 907.0,33.0 907.1,36.0 906.4,39.0 906.4,42.0 908.1,44.6 906.3,47.2 909.1,49.8 907.5,52.4 909.6,55.0 910.5,57.5 910.7,60.0 910.5,62.5 912.0,65.0 913.1,67.9 913.0,70.8 913.9,73.7 914.0,76.6 915.8,79.7 914.2,82.8 913.9,85.9 916.0,89.0 915.7,91.8 917.2,94.5 916.0,97.2 917.3,100.0 916.5,102.5 917.9,105.0 920.2,107.6 920.5,110.2 921.0,112.8 921.2,115.3 923.0,117.9 921.5,120.5 922.4,123.0 924.0,126.0 923.6,129.0 925.6,132.0 926.0,135.0 927.8,138.0 927.5,141.0 929.8,143.5 930.6,146.0 930.0,148.5 931.3,151.0 932.3,153.6 932.2,156.1 932.4,158.7 934.2,161.2 935.0,163.8 937.1,166.4 938.1,168.9 938.7,171.4 939.0,174.0 941.9,176.8 941.3,179.5 942.4,182.2 945.0,185.0" fill="none" stroke="#2ccc2c" stroke-width="1.1"/>
<polyline points="945.0,199.0 940.2,202.0 909.6,212.8 881.5,218.5 882.2,220.4 884.8,222.5 887.1,224.7 890.5,226.8 887.7,229.4 886.6,232.0 886.0,233.8 886.0,235.7 885.1,238.2 883.4,240.8 887.3,243.4 886.6,246.6 893.0,249.8 893.0,251.7 893.0,253.6 894.3,255.5 896.8,257.4 899.1,259.9 899.4,262.5 903.4,264.8 904.5,267.0 903.1,269.1 900.7,271.1 899.3,273.2 899.4,275.3 898.7,277.1 894.4,278.9 894.5,280.7 892.3,282.6 889.7,284.4 889.3,286.2 886.6,288.0 885.8,290.5 887.9,293.0 888.3,295.3 890.8,297.7 892.4,300.0 886.5,302.1 884.5,304.3 879.0,306.4 879.5,308.2 881.5,310.0 879.5,312.5 879.6,315.0 877.9,317.0 879.0,319.0 881.3,321.0 882.8,323.0 882.3,325.0 882.4,327.0 882.1,329.0 882.2,331.0 880.9,333.0 882.8,334.9 882.5,336.9 881.5,338.9 882.9,340.8 882.5,342.8 884.0,344.7 883.3,346.8 885.5,348.8 887.0,350.9 886.2,352.9 888.0,355.0 884.7,357.5 882.8,360.0 884.9,361.9 888.5,363.8 890.5,365.7 893.0,367.6 892.8,369.6 892.7,371.6 891.1,373.6 891.7,375.7 891.5,377.7 888.5,379.7 889.2,381.7 889.1,383.7 887.1,385.8 883.9,387.8 883.5,389.9 882.2,391.9 881.9,393.9 882.1,395.9 879.9,398.0 879.6,400.0 881.9,401.6 883.5,403.2 883.0,404.8 883.8,406.4 881.3,408.0 882.3,409.6 880.0,411.2 882.7,412.8 883.2,414.4 882.2,416.0 882.6,417.6 880.0,419.2 883.6,420.8 884.0,422.4 884.0,424.0 881.7,425.6 883.0,427.2 880.6,428.8 883.6,430.4 883.4,432.0 880.7,433.6 879.3,435.2 881.2,436.8 881.8,438.4 882.9,440.0 881.4,441.6 879.0,443.2 883.1,444.8 879.2,446.4 883.1,448.0 879.8,449.6 880.6,451.2 883.0,452.8 879.6,454.4 879.7,456.0 881.6,457.6 882.7,459.2 883.3,460.8 882.5,462.4 883.8,464.0 881.5,465.6 883.8,467.2 879.3,468.8 885.4,470.8 889.0,479.0 881.0,484.0 882.0,490.0 880.9,491.6 882.6,493.2 881.3,494.8 883.8,496.4 883.3,498.0 882.6,499.6 884.4,501.2 882.8,502.8 881.4,504.4 881.8,506.0 884.4,507.6 884.7,509.2 880.9,510.8 884.5,512.4 885.1,514.0 882.6,515.6 882.9,517.2 880.8,518.8 882.7,520.4 882.5,522.0 883.1,523.6 879.9,525.2 885.1,526.8 882.6,528.4 881.9,530.0 884.2,531.6 882.9,533.2 882.4,534.8 883.6,536.4 880.1,538.0 882.7,539.6 882.0,541.2 885.1,542.8 884.9,544.4 881.2,546.0 882.3,547.6 880.4,549.2 882.1,550.8 884.3,552.4 884.7,554.0 882.4,555.6 881.5,557.2 880.8,558.8 883.2,560.4 884.9,562.0 880.4,563.6 884.1,565.2 879.8,566.8 880.8,568.4 881.0,570.0 883.5,571.6 881.5,573.2 881.7,574.8 883.2,576.4 880.3,578.0 883.8,579.6 880.4,581.2 882.6,582.8 881.1,584.4 880.8,586.0 882.7,587.6 882.1,589.2 881.8,590.8 882.0,592.4 882.7,594.0 880.6,595.6 880.8,597.2 883.2,598.8 883.3,600.4 882.7,602.0 884.5,603.6 883.1,605.2 884.5,606.8 881.0,608.4 883.8,610.0 884.2,611.6 884.8,613.2 881.5,614.8 881.5,616.4 884.9,618.0 880.9,619.6 885.3,621.2 884.7,622.8 880.5,624.4 881.0,626.0 883.8,627.6 881.2,629.2 880.2,630.8 884.4,632.4 882.1,634.0 884.1,635.6 880.4,637.2 882.0,638.8 883.5,640.4 879.8,642.0 880.8,643.6 883.5,645.2 884.8,646.8 885.1,648.4 880.3,650.0 882.5,651.6 883.9,653.2 882.5,654.8 883.5,656.4 880.8,658.0 880.1,659.6 880.3,661.2 879.9,662.8 882.8,664.4 882.6,666.0 882.9,667.6 880.5,669.2 880.7,670.8 880.8,672.4 884.4,674.0 885.2,675.6 884.9,677.2 880.2,678.8 880.0,680.4 885.0,682.0 882.3,683.6 884.0,685.2 881.5,686.8 882.3,688.4 882.6,690.0 882.1,691.6 883.1,693.2 879.8,694.8 883.6,696.4 884.4,698.0 880.7,699.6 882.2,701.2 883.8,702.8 882.0,704.4 880.8,706.0 880.6,707.6 882.6,709.2 879.8,710.8 884.7,712.4 884.2,714.0 883.6,715.6 884.5,717.2 883.2,718.8 882.0,720.4 883.1,722.0 882.5,723.6 885.2,725.2 884.2,726.8 881.1,728.4 884.8,730.0 883.9,731.6 884.1,733.2 884.3,734.8 882.0,736.4 884.7,738.0 884.6,739.6 883.6,741.2 884.0,742.8 884.0,744.4 882.0,746.0 883.7,747.6 880.1,749.2 881.6,750.8 882.3,752.4 879.8,754.0 881.7,755.6 883.3,757.2 883.2,758.8 884.5,762.4 878.0,767.0 870.0,774.0 860.8,780.9" fill="none" stroke="#2ccc2c" stroke-width="1.1"/>
<circle cx="924.3" cy="297.8" r="2.4" fill="#000" stroke="#b02020" stroke-width="1.2"/>
<polyline points="941,776.5 938.5,778.5 937.5,781" fill="none" stroke="#2ccc2c" stroke-width="1.1"/>
</g></svg>
</svg>
<div class="rl" style="top:79.5px"><span>143O5O4OO</span></div><div class="rl" style="top:235.8px"><span>143O5O2OO</span></div><div class="rl" style="top:391.8px"><span>143O5OOOO</span></div><div class="rl" style="top:548.0px"><span>143O498OO</span></div><div class="rl" style="top:704.5px"><span>143O496OO Hz</span></div><div class="tl" style="left:107.0px"><span>2025-12-14 19:23:10</span></div><div class="tk" style="left:114px"></div><div class="tl" style="left:222.0px"><span>2025-12-14 19:23:20</span></div><div class="tk" style="left:229px"></div><div class="tl" style="left:336.0px"><span>2025-12-14 19:23:30</span></div><div class="tk" style="left:343px"></div><div class="tl" style="left:448.0px"><span>2025-12-14 19:23:40</span></div><div class="tk" style="left:455px"></div><div class="tl" style="left:563.0px"><span>2025-12-14 19:23:50</span></div><div class="tk" style="left:570px"></div><div class="tl" style="left:677.0px"><span>2025-12-14 19:24:00</span></div><div class="tk" style="left:684px"></div><div class="tl" style="left:790.0px"><span>2025-12-14 19:24:10</span></div><div class="tk" style="left:797px"></div>
</body></html>
